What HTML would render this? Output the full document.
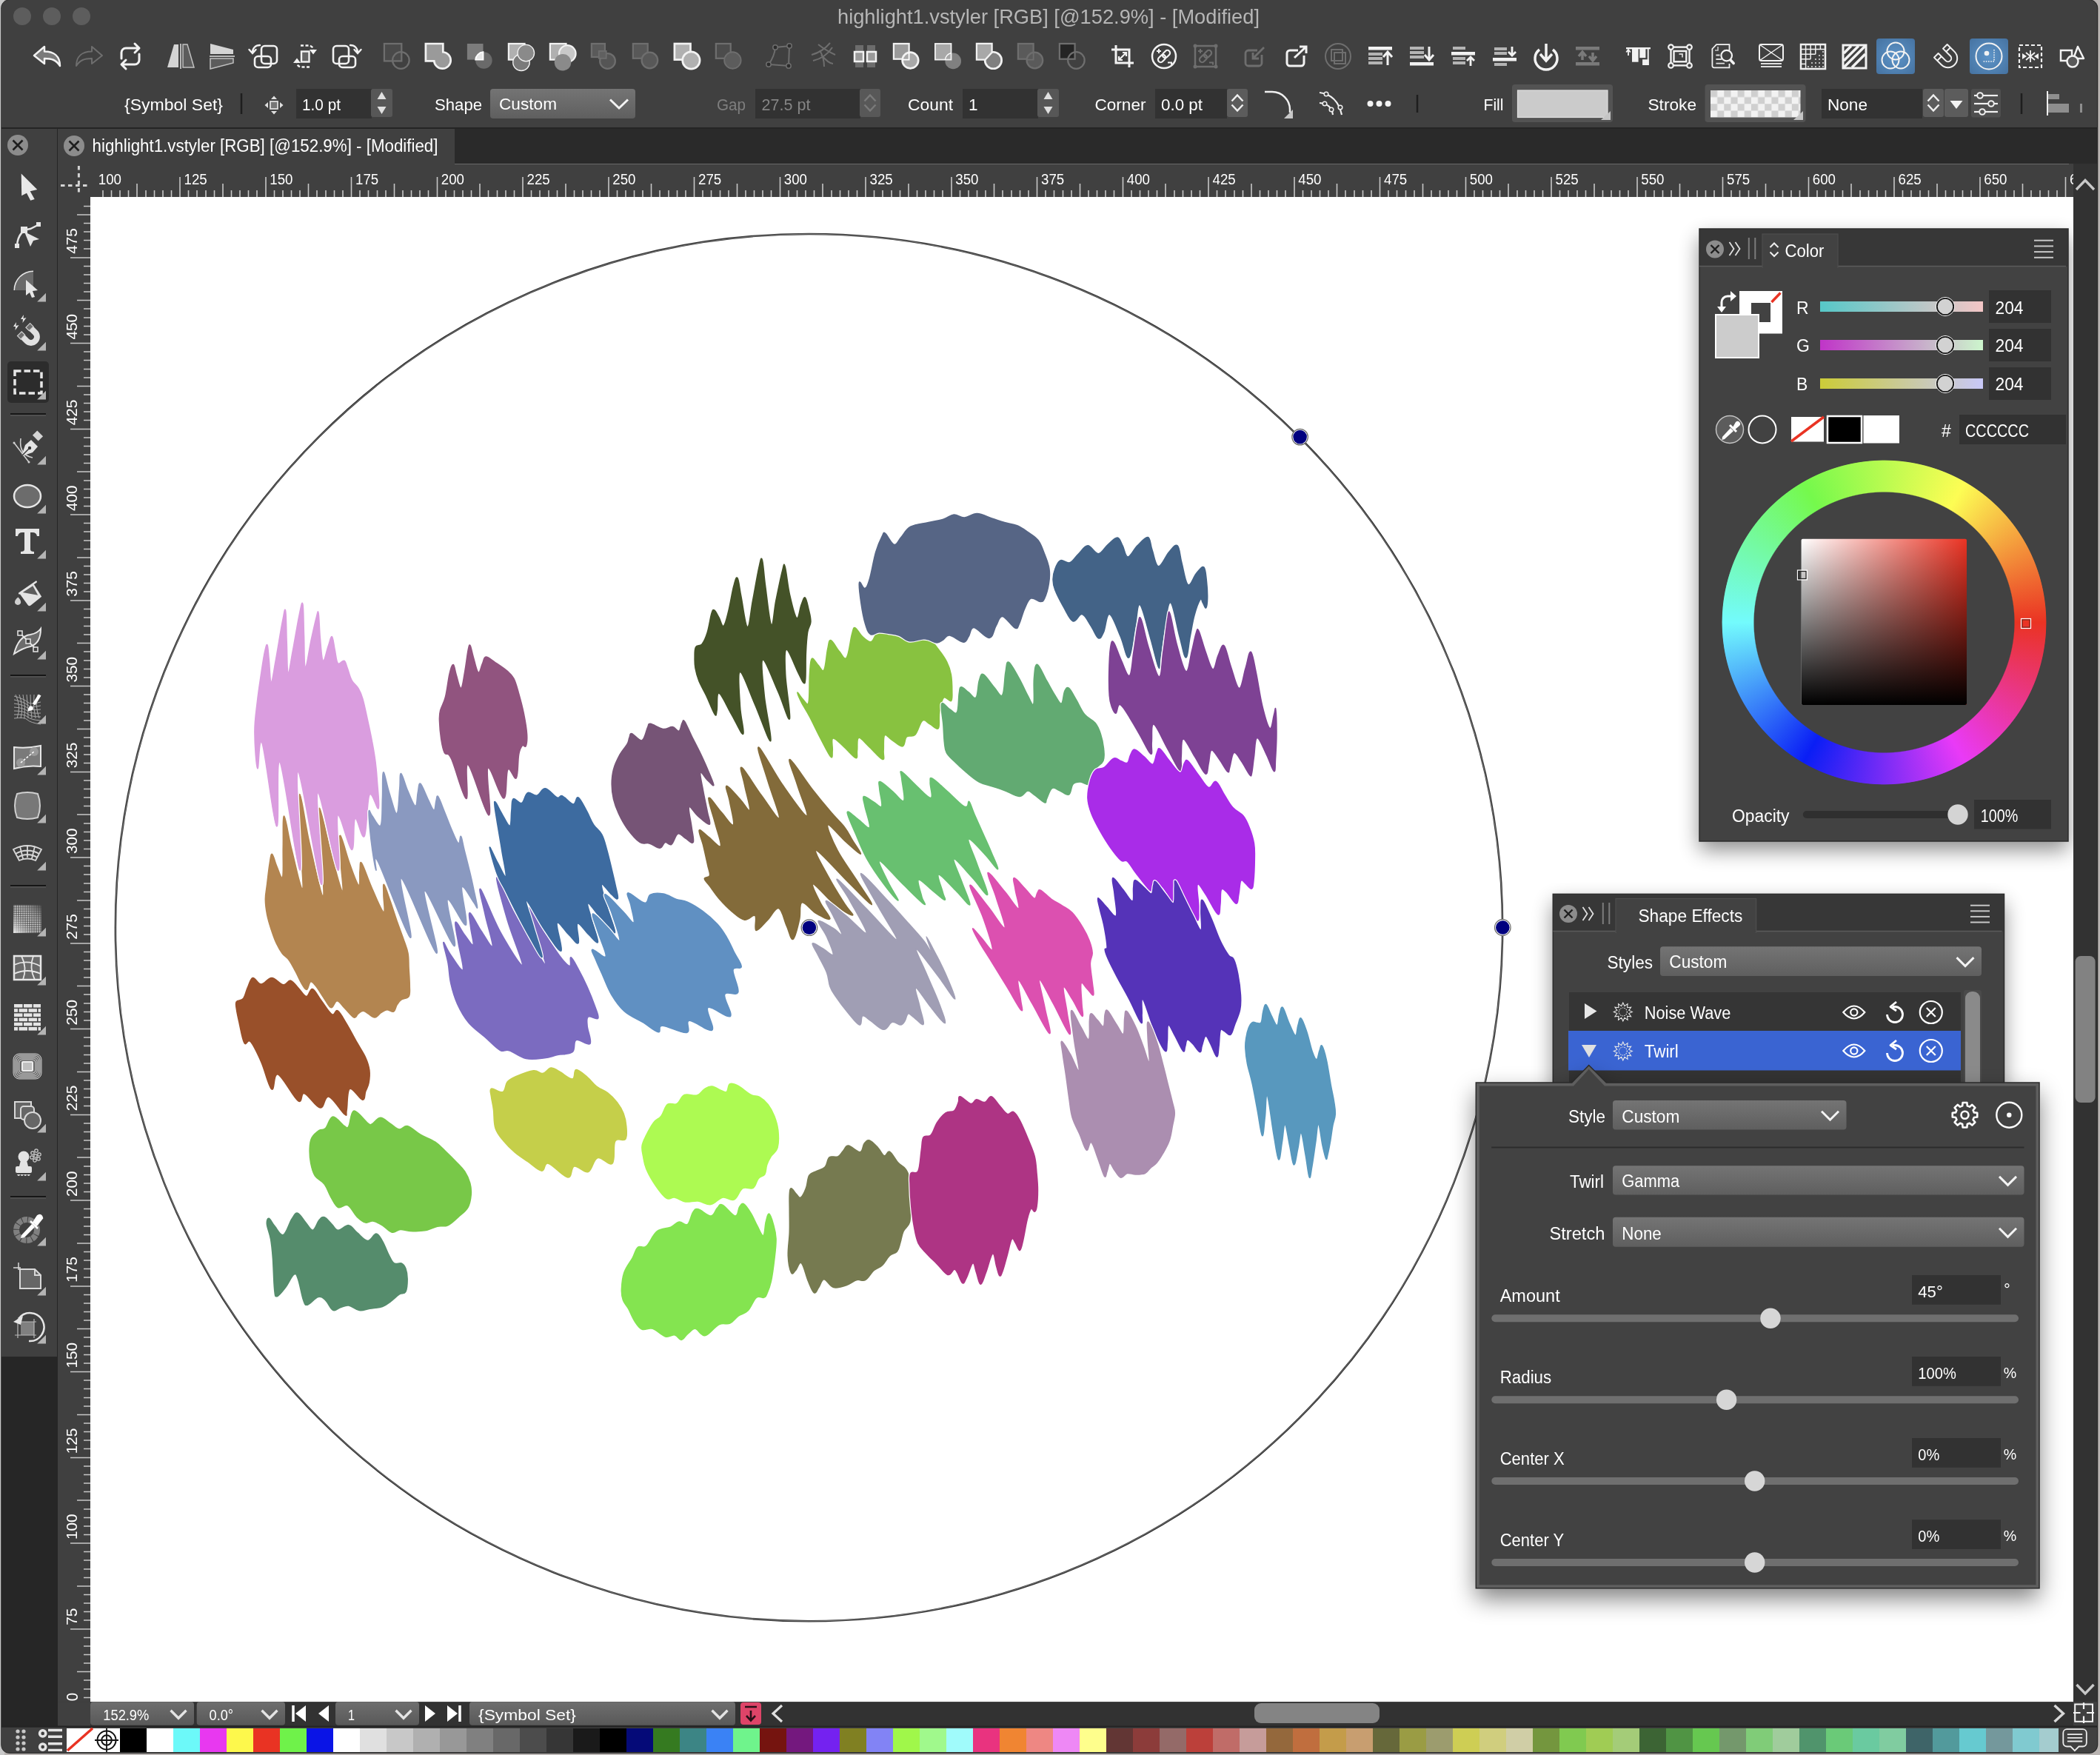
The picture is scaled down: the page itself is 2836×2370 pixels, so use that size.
<!DOCTYPE html><html><head><meta charset="utf-8"><title>highlight1.vstyler</title><style>html,body{margin:0;padding:0;background:#b9b4b2;overflow:hidden}svg{display:block;will-change:transform}text{white-space:pre}</style></head><body><svg width="2836" height="2370" viewBox="0 0 2836 2370" font-family='"Liberation Sans", sans-serif'><defs>
<linearGradient id="dd" x1="0" y1="0" x2="0" y2="1"><stop offset="0" stop-color="#747474"/><stop offset="1" stop-color="#5f5f5f"/></linearGradient>
<linearGradient id="dd2" x1="0" y1="0" x2="0" y2="1"><stop offset="0" stop-color="#6e6e6e"/><stop offset="1" stop-color="#595959"/></linearGradient>
<radialGradient id="hl" cx="0.5" cy="0.5" r="0.75"><stop offset="0" stop-color="#5d94c8"/><stop offset="1" stop-color="#44709e"/></radialGradient>
<pattern id="chk" x="2310" y="122" width="18.3" height="18.3" patternUnits="userSpaceOnUse"><rect width="18.3" height="18.3" fill="#f2f2f2"/><rect width="9.15" height="9.15" fill="#cfcfcf"/><rect x="9.15" y="9.15" width="9.15" height="9.15" fill="#cfcfcf"/></pattern>
<pattern id="ht" x="0" y="0" width="3" height="3" patternUnits="userSpaceOnUse"><rect width="3" height="3" fill="#555"/><circle cx="1.5" cy="1.5" r="1" fill="#eee"/></pattern>
<linearGradient id="htg" x1="0" y1="1" x2="1" y2="0"><stop offset="0" stop-color="#f0f0f0" stop-opacity="0.95"/><stop offset="0.45" stop-color="#a0a0a0" stop-opacity="0.1"/><stop offset="1" stop-color="#404040" stop-opacity="0.9"/></linearGradient>
<linearGradient id="gR"><stop offset="0" stop-color="#56c8c8"/><stop offset="1" stop-color="#f4c6c6"/></linearGradient>
<linearGradient id="gG"><stop offset="0" stop-color="#c034c8"/><stop offset="1" stop-color="#ccf6cc"/></linearGradient>
<linearGradient id="gB"><stop offset="0" stop-color="#cccc38"/><stop offset="1" stop-color="#c8c8f8"/></linearGradient>
<linearGradient id="svH"><stop offset="0" stop-color="#fff"/><stop offset="1" stop-color="#ea3323"/></linearGradient>
<linearGradient id="svV" x1="0" y1="0" x2="0" y2="1"><stop offset="0" stop-color="#000" stop-opacity="0"/><stop offset="1" stop-color="#000"/></linearGradient>
<filter id="sh" x="-10%" y="-10%" width="120%" height="125%"><feGaussianBlur in="SourceAlpha" stdDeviation="14"/><feOffset dy="12"/><feComponentTransfer><feFuncA type="linear" slope="0.45"/></feComponentTransfer></filter>
<filter id="sh2" x="-10%" y="-10%" width="120%" height="125%"><feGaussianBlur in="SourceAlpha" stdDeviation="16"/><feOffset dy="14"/><feComponentTransfer><feFuncA type="linear" slope="0.5"/></feComponentTransfer></filter>
<clipPath id="cv"><rect x="122" y="266" width="2678" height="2031"/></clipPath>
<clipPath id="win"><rect x="2" y="0" width="2830" height="2367" rx="11"/></clipPath>
</defs><rect x="0" y="0" width="2836" height="2370" fill="#b9b4b2"/><rect x="0" y="0" width="6" height="2370" fill="#c9c9c9"/><rect x="1.2" y="-0.8" width="2832.1" height="2368.8" fill="#2a2a2a" rx="12"/><g clip-path="url(#win)"><rect x="2" y="0" width="2830" height="2367" fill="#404040"/><circle cx="30" cy="22" r="12" fill="#5d5d5d"/><circle cx="70" cy="22" r="12" fill="#5d5d5d"/><circle cx="110" cy="22" r="12" fill="#5d5d5d"/><text x="1416" y="32" font-size="27.3" fill="#b6b6b6" text-anchor="middle" textLength="570" lengthAdjust="spacingAndGlyphs">highlight1.vstyler [RGB] [@152.9%] - [Modified]</text><g transform="translate(64,76)"><path d="M-18,-1 L-4,-13 L-4,-6.5 C9,-6.5 17,0 17,13 C12,5 6,3 -4,3 L-4,10 Z" fill="#7a7a7a" stroke="#f2f2f2" stroke-width="2.5" stroke-linejoin="round"/></g><g transform="translate(120,76)"><path d="M18,-1 L4,-13 L4,-6.5 C-9,-6.5 -17,0 -17,13 C-12,5 -6,3 4,3 L4,10 Z" fill="none" stroke="#6e6e6e" stroke-width="2" stroke-linejoin="round"/></g><g transform="translate(176,76)"><path d="M-12,3 V-5 a6,6 0 0 1 6,-6 H11 M6,-17 L12,-11 L6,-5 M12,-3 V5 a6,6 0 0 1 -6,6 H-11 M-6,5 L-12,11 L-6,17" fill="none" stroke="#f2f2f2" stroke-width="3" stroke-linecap="round" stroke-linejoin="round"/></g><g transform="translate(244,76)"><path d="M-3,-16 H-9 L-18,15 H-3 Z" fill="#d4d4d4"/><path d="M3,-16 H9 L18,15 H3 Z" fill="#5c5c5c" stroke="#c0c0c0" stroke-width="1.5"/><line x1="0" y1="-17" x2="0" y2="17" stroke="#b8b8b8" stroke-width="2" /></g><g transform="translate(300,76)"><path d="M-16,-17 L15,-9 V-3 H-16 Z" fill="#d4d4d4"/><path d="M-16,3 H15 V9 L-16,17 Z" fill="#5c5c5c" stroke="#c0c0c0" stroke-width="1.5"/><line x1="-17" y1="0" x2="17" y2="0" stroke="#b8b8b8" stroke-width="2" /></g><g transform="translate(356,76)"><rect x="-3" y="-14" width="21" height="24" fill="none" rx="4.5" stroke="#f2f2f2" stroke-width="2.6"/><rect x="-12" y="0" width="22" height="15" fill="none" rx="4.5" stroke="#f2f2f2" stroke-width="2.6"/><path d="M-5,-15 C-11,-15 -15,-11 -15,-5 M-19.5,-9 L-15,-4 L-10.5,-9" fill="none" stroke="#f2f2f2" stroke-width="2.4" stroke-linecap="round"/></g><g transform="translate(412,76)"><rect x="-5" y="-6.5" width="10.5" height="14" fill="#666" stroke="#f2f2f2" stroke-width="2.4"/><path d="M-6,-14.5 H5 a6,6 0 0 1 6,6" fill="none" stroke="#f2f2f2" stroke-width="2.4" stroke-dasharray="4 2.5"/><path d="M6,-9 H16 L11,-2.5 Z" fill="#f2f2f2"/><path d="M6,14.5 H-5 a6,6 0 0 1 -6,-6" fill="none" stroke="#f2f2f2" stroke-width="2.4" stroke-dasharray="4 2.5"/><path d="M-16,9 H-6 L-11,2.5 Z" fill="#f2f2f2"/></g><g transform="translate(468,76)"><rect x="-18" y="-14" width="21" height="24" fill="none" rx="4.5" stroke="#f2f2f2" stroke-width="2.6"/><rect x="-10" y="0" width="22" height="15" fill="none" rx="4.5" stroke="#f2f2f2" stroke-width="2.6"/><path d="M5,-15 C11,-15 15,-11 15,-5 M19.5,-9 L15,-4 L10.5,-9" fill="none" stroke="#f2f2f2" stroke-width="2.4" stroke-linecap="round"/></g><g transform="translate(536,75.2) scale(0.9)"><rect x="-19" y="-18" width="26" height="26" fill="#4a4a4a" stroke="#6e6e6e" stroke-width="2.5"/><circle cx="6" cy="7" r="12.5" fill="none" stroke="#6e6e6e" stroke-width="2.5"/></g><g transform="translate(592,75.2) scale(0.9)"><path d="M-19,-18 H7 V-5.5 A12.5,12.5 0 1 1 -6.4,8 H-19 Z" fill="#9a9a9a" stroke="#f2f2f2" stroke-width="3"/></g><g transform="translate(648,75.2) scale(0.9)"><rect x="-19" y="-18" width="24" height="24" fill="#7c7c7c"/><circle cx="6" cy="7" r="12.5" fill="#6a6a6a"/><path d="M-6.5,6 A12.5,12.5 0 0 1 5,-5.5 V6 Z" fill="#e8e8e8" stroke="#fff" stroke-width="2"/></g><g transform="translate(704,75.2) scale(0.9)"><rect x="-19" y="-18" width="24" height="24" fill="#b0b0b0" stroke="#f2f2f2" stroke-width="2.5"/><circle cx="0" cy="10" r="12.5" fill="#7a7a7a" stroke="#f2f2f2" stroke-width="1.5"/><circle cx="7" cy="-4" r="12.5" fill="#8a8a8a" stroke="#f2f2f2" stroke-width="1.5"/></g><g transform="translate(760,75.2) scale(0.9)"><rect x="-19" y="-18" width="24" height="24" fill="#b0b0b0" stroke="#f2f2f2" stroke-width="2.5"/><circle cx="7" cy="-3" r="12.5" fill="#c8c8c8" stroke="#f2f2f2" stroke-width="2.5"/><circle cx="0" cy="10" r="12.5" fill="#8a8a8a"/></g><g transform="translate(816,75.2) scale(0.9)"><rect x="-19" y="-18" width="20" height="20" fill="#5a5a5a" stroke="#6e6e6e" stroke-width="2.5"/><circle cx="5" cy="8" r="11.5" fill="#555" stroke="#6e6e6e" stroke-width="2.5"/><rect x="-8" y="-7" width="11" height="11" fill="#606060" stroke="#6e6e6e" stroke-width="2"/></g><g transform="translate(872,75.2) scale(0.9)"><rect x="-19" y="-18" width="22" height="22" fill="#585858" stroke="#6e6e6e" stroke-width="2.5"/><circle cx="6" cy="7" r="12" fill="#585858" stroke="#6e6e6e" stroke-width="2.5"/></g><g transform="translate(928,75.2) scale(0.9)"><rect x="-19" y="-18" width="24" height="24" fill="#b0b0b0" stroke="#f2f2f2" stroke-width="3"/><circle cx="6" cy="7" r="13" fill="#b0b0b0" stroke="#f2f2f2" stroke-width="3"/></g><g transform="translate(984,75.2) scale(0.9)"><rect x="-19" y="-18" width="22" height="22" fill="#4c4c4c" stroke="#6e6e6e" stroke-width="2.5"/><circle cx="6" cy="7" r="12.5" fill="#5c5c5c" stroke="#6e6e6e" stroke-width="2"/></g><g transform="translate(1055,76)"><path d="M-8,-12 L11,-14 L10,13 L-17,11 Q-9,0 -8,-12 Z" fill="none" stroke="#6e6e6e" stroke-width="2"/><circle cx="-8" cy="-12" r="3.2" fill="#2c2c2c" stroke="#6e6e6e" stroke-width="1.5"/><circle cx="11" cy="-14" r="3.2" fill="#2c2c2c" stroke="#6e6e6e" stroke-width="1.5"/><circle cx="10" cy="13" r="3.2" fill="#2c2c2c" stroke="#6e6e6e" stroke-width="1.5"/><circle cx="-17" cy="11" r="3.2" fill="#2c2c2c" stroke="#6e6e6e" stroke-width="1.5"/></g><g transform="translate(1111,76)"><path d="M-15,-2 Q0,-6 10,-18 M-6,-16 Q4,-8 17,-2 M-13,6 Q4,2 13,-12 M2,14 Q2,2 -4,-8 M-2,-2 Q8,10 14,10" fill="none" stroke="#6e6e6e" stroke-width="2"/></g><g transform="translate(1168,76)"><rect x="-13" y="-15" width="11" height="30" fill="#6c6c6c"/><rect x="3" y="-15" width="11" height="30" fill="#6c6c6c"/><rect x="-14" y="-6" width="12" height="13" fill="#9a9a9a" stroke="#f2f2f2" stroke-width="2.5"/><rect x="3" y="-6" width="12" height="13" fill="#9a9a9a" stroke="#f2f2f2" stroke-width="2.5"/></g><g transform="translate(1224,75.2) scale(0.9)"><rect x="-19" y="-18" width="23" height="23" fill="#9a9a9a" stroke="#f2f2f2" stroke-width="2.5"/><circle cx="6" cy="7" r="12" fill="#a8a8a8" stroke="#f2f2f2" stroke-width="3"/><path d="M-6,6 H4 V-5" fill="none" stroke="#fff" stroke-width="2"/></g><g transform="translate(1280,75.2) scale(0.9)"><circle cx="8" cy="8" r="12" fill="#808080"/><rect x="-19" y="-18" width="24" height="24" fill="#a8a8a8" stroke="#f2f2f2" stroke-width="2"/><path d="M-4,6 A12,12 0 0 1 5,-4" fill="none" stroke="#fff" stroke-width="1.5"/></g><g transform="translate(1336,75.2) scale(0.9)"><circle cx="6" cy="7" r="12.5" fill="#808080" stroke="#f2f2f2" stroke-width="3"/><path d="M-19,-18 H4 V-5 L-6,6 H-19 Z" fill="#a8a8a8" stroke="#f2f2f2" stroke-width="2.5"/></g><g transform="translate(1392,75.2) scale(0.9)"><rect x="-19" y="-18" width="23" height="23" fill="#5a5a5a" stroke="#6e6e6e" stroke-width="2.5"/><circle cx="6" cy="7" r="12" fill="#5a5a5a" stroke="#6e6e6e" stroke-width="2.5"/><path d="M-6,6 H4 V-5" fill="none" stroke="#6e6e6e" stroke-width="2"/></g><g transform="translate(1448,75.2) scale(0.9)"><rect x="-19" y="-18" width="23" height="23" fill="#242424" stroke="#6e6e6e" stroke-width="2.5"/><circle cx="6" cy="7" r="12.5" fill="none" stroke="#6e6e6e" stroke-width="2.5"/></g><g transform="translate(1516,76)"><path d="M-9,-15 V9 H15 M-15,-9 H9 V15" fill="none" stroke="#f2f2f2" stroke-width="3"/><path d="M-5,5 L5,-5 M-5,0 V5 H0 M5,0 V-5 H0" fill="none" stroke="#f2f2f2" stroke-width="2.2"/></g><g transform="translate(1572,76)"><circle cx="0" cy="0" r="16" fill="none" stroke="#f2f2f2" stroke-width="2.5"/><g transform="rotate(-45)"><rect x="-10" y="-3.6" width="11.5" height="7.2" fill="none" rx="3.6" stroke="#f2f2f2" stroke-width="2.2"/><rect x="-1.5" y="-3.6" width="11.5" height="7.2" fill="none" rx="3.6" stroke="#f2f2f2" stroke-width="2.2"/></g><path d="M-10,-7 h6 M-7,-10 v6 M5,8.5 h5 v3" fill="none" stroke="#f2f2f2" stroke-width="2"/></g><g transform="translate(1628,76)"><rect x="-14" y="-14" width="28" height="28" fill="none" stroke="#6e6e6e" stroke-width="2.5"/><circle cx="-14" cy="-14" r="2.5" fill="#6e6e6e"/><circle cx="14" cy="-14" r="2.5" fill="#6e6e6e"/><circle cx="14" cy="14" r="2.5" fill="#6e6e6e"/><circle cx="-14" cy="14" r="2.5" fill="#6e6e6e"/><g transform="rotate(-45)"><rect x="-10" y="-3.6" width="11.5" height="7.2" fill="none" rx="3.6" stroke="#6e6e6e" stroke-width="2.2"/><rect x="-1.5" y="-3.6" width="11.5" height="7.2" fill="none" rx="3.6" stroke="#6e6e6e" stroke-width="2.2"/></g><path d="M-10,-7 h6 M-7,-10 v6 M5,8.5 h5 v3" fill="none" stroke="#6e6e6e" stroke-width="2"/></g><g transform="translate(1694,76)"><path d="M4,-8 H-8 a4,4 0 0 0 -4,4 V9 a4,4 0 0 0 4,4 H6 a4,4 0 0 0 4,-4 V-2" fill="none" stroke="#6e6e6e" stroke-width="2.8"/><path d="M13,-12 L-2,3 M-2,-5 V3 H6" fill="none" stroke="#6e6e6e" stroke-width="2.8"/></g><g transform="translate(1751,76)"><path d="M2,-8 H-9 a4,4 0 0 0 -4,4 V9 a4,4 0 0 0 4,4 H6 a4,4 0 0 0 4,-4 V-1" fill="none" stroke="#f2f2f2" stroke-width="3"/><path d="M-3,2 L13,-13 M4,-13 H13 V-4" fill="none" stroke="#f2f2f2" stroke-width="3"/></g><g transform="translate(1807,76)"><circle cx="0" cy="0" r="17" fill="none" stroke="#6e6e6e" stroke-width="2"/><rect x="-9" y="-9" width="15" height="15" fill="none" stroke="#6e6e6e" stroke-width="2"/><rect x="-5" y="-5" width="15" height="15" fill="none" stroke="#6e6e6e" stroke-width="2"/></g><g transform="translate(1864,76)"><rect x="-16" y="-13" width="32" height="4.5" fill="#f2f2f2"/><rect x="-16" y="-5" width="19" height="4" fill="#b4b4b4"/><rect x="-16" y="1" width="19" height="4" fill="#b4b4b4"/><rect x="-16" y="7" width="19" height="4" fill="#b4b4b4"/><path d="M10,12 V-5 M4,1 L10,-6 L16,1" fill="none" stroke="#f2f2f2" stroke-width="3"/></g><g transform="translate(1920,76)"><rect x="-16" y="8" width="32" height="4.5" fill="#f2f2f2"/><rect x="-16" y="-13" width="19" height="4" fill="#b4b4b4"/><rect x="-16" y="-7" width="19" height="4" fill="#b4b4b4"/><rect x="-16" y="-1" width="19" height="4" fill="#b4b4b4"/><path d="M10,-13 V4 M4,-2 L10,5 L16,-2" fill="none" stroke="#f2f2f2" stroke-width="3"/></g><g transform="translate(1976,76)"><rect x="-16" y="-6" width="32" height="4.5" fill="#f2f2f2"/><rect x="-14" y="-13" width="17" height="4" fill="#b4b4b4"/><rect x="-14" y="1" width="17" height="4" fill="#b4b4b4"/><rect x="-14" y="7" width="17" height="4" fill="#b4b4b4"/><path d="M10,13 V2 M5,6 L10,1 L15,6" fill="none" stroke="#f2f2f2" stroke-width="2.8"/></g><g transform="translate(2032,76)"><rect x="-16" y="2" width="32" height="4.5" fill="#f2f2f2"/><rect x="-14" y="-12" width="17" height="4" fill="#b4b4b4"/><rect x="-14" y="-6" width="17" height="4" fill="#b4b4b4"/><rect x="-14" y="9" width="17" height="4" fill="#b4b4b4"/><path d="M10,-13 V-2 M5,-6 L10,-1 L15,-6" fill="none" stroke="#f2f2f2" stroke-width="2.8"/></g><g transform="translate(2088,76)"><path d="M-9,-9 A15,15 0 1 0 9,-9" fill="none" stroke="#f2f2f2" stroke-width="3.5"/><path d="M0,-17 V5 M-8,-3 L0,6 L8,-3" fill="none" stroke="#f2f2f2" stroke-width="3.5"/></g><g transform="translate(2144,76)"><rect x="-16" y="-13" width="32" height="4.5" fill="#7a7a7a"/><rect x="-16" y="8" width="32" height="4.5" fill="#7a7a7a"/><path d="M-7,5 V-5 M-12,0 L-7,-6 L-2,0 M7,-5 V5 M2,0 L7,6 L12,0" fill="none" stroke="#7a7a7a" stroke-width="3.5"/></g><g transform="translate(2212,76)"><rect x="-16" y="-12" width="33" height="2.3" fill="#f2f2f2"/><rect x="-8" y="-10" width="8.6" height="17.7" fill="#f2f2f2"/><rect x="2.3" y="-10" width="8.1" height="12.1" fill="#f2f2f2"/><rect x="6.1" y="4.3" width="8.6" height="7.7" fill="#f2f2f2"/><rect x="12.8" y="-10" width="1.9" height="22" fill="#f2f2f2"/><path d="M-13,-1 V-8 M-15.8,-5.5 L-13,-9 L-10.2,-5.5" fill="none" stroke="#f2f2f2" stroke-width="1.8"/></g><g transform="translate(2269,76)"><rect x="-12.5" y="-12.4" width="25" height="24.8" fill="none" stroke="#f2f2f2" stroke-width="2.4"/><rect x="-8.5" y="-7" width="16.8" height="14.3" fill="none" stroke="#f2f2f2" stroke-width="2.4"/><path d="M-1.5,-3 H3 V1.5" fill="none" stroke="#f2f2f2" stroke-width="1.5"/><circle cx="-12.5" cy="-12.4" r="3.3" fill="#404040" stroke="#f2f2f2" stroke-width="2.2"/><circle cx="12.5" cy="-12.4" r="3.3" fill="#404040" stroke="#f2f2f2" stroke-width="2.2"/><circle cx="12.5" cy="12.4" r="3.3" fill="#404040" stroke="#f2f2f2" stroke-width="2.2"/><circle cx="-12.5" cy="12.4" r="3.3" fill="#404040" stroke="#f2f2f2" stroke-width="2.2"/></g><g transform="translate(2327,76)"><path d="M8.5,-8 V-15.9 H-9 L-14.6,-10 V13 a2.4,2.4 0 0 0 2.4,2.4 H8.5 V10" fill="none" stroke="#f2f2f2" stroke-width="1.8"/><path d="M-7,-13 V-8 H-11" fill="none" stroke="#c8c8c8" stroke-width="1.6"/><path d="M-9.6,-1.5 H-4.5 M-9.6,4 H-2 M-9.6,9.6 H2" fill="none" stroke="#e0e0e0" stroke-width="1.8"/><circle cx="4.7" cy="-0.9" r="7.3" fill="#404040" stroke="#f2f2f2" stroke-width="2.2"/><line x1="10" y1="5" x2="14.2" y2="9.5" stroke="#f2f2f2" stroke-width="3.6" stroke-linecap="round"/></g><g transform="translate(2392,74)"><rect x="-16" y="-14" width="32" height="22" fill="none" rx="3" stroke="#f2f2f2" stroke-width="2"/><path d="M-16,-14 L16,8 M16,-14 L-16,8" fill="none" stroke="#f2f2f2" stroke-width="1.5"/><line x1="-14" y1="12" x2="14" y2="12" stroke="#f2f2f2" stroke-width="1.8" /><line x1="-14" y1="16" x2="14" y2="16" stroke="#f2f2f2" stroke-width="1.8" /></g><g transform="translate(2448,76)"><rect x="-16" y="-16" width="33" height="33" fill="none" stroke="#f2f2f2" stroke-width="2.5"/><line x1="-9.4" y1="-16" x2="-9.4" y2="17" stroke="#f2f2f2" stroke-width="1.5" /><line x1="-2.8" y1="-16" x2="-2.8" y2="3.8" stroke="#f2f2f2" stroke-width="1.5" /><line x1="3.8" y1="-16" x2="3.8" y2="-2.8" stroke="#f2f2f2" stroke-width="1.5" /><line x1="10.4" y1="-16" x2="10.4" y2="-9.4" stroke="#f2f2f2" stroke-width="1.5" /><line x1="-16" y1="-9.4" x2="17" y2="-9.4" stroke="#f2f2f2" stroke-width="1.5" /><line x1="-16" y1="-2.8" x2="3.8" y2="-2.8" stroke="#f2f2f2" stroke-width="1.5" /><line x1="-16" y1="3.8" x2="-2.8" y2="3.8" stroke="#f2f2f2" stroke-width="1.5" /><line x1="-16" y1="10.4" x2="-9.4" y2="10.4" stroke="#f2f2f2" stroke-width="1.5" /><circle cx="14" cy="14" r="0.9" fill="#f2f2f2"/><circle cx="14" cy="9" r="0.9" fill="#f2f2f2"/><circle cx="14" cy="4" r="0.9" fill="#f2f2f2"/><circle cx="14" cy="-1" r="0.9" fill="#f2f2f2"/><circle cx="14" cy="-6" r="0.9" fill="#f2f2f2"/><circle cx="9" cy="14" r="0.9" fill="#f2f2f2"/><circle cx="9" cy="9" r="0.9" fill="#f2f2f2"/><circle cx="9" cy="4" r="0.9" fill="#f2f2f2"/><circle cx="9" cy="-1" r="0.9" fill="#f2f2f2"/><circle cx="4" cy="14" r="0.9" fill="#f2f2f2"/><circle cx="4" cy="9" r="0.9" fill="#f2f2f2"/><circle cx="4" cy="4" r="0.9" fill="#f2f2f2"/><circle cx="-1" cy="14" r="0.9" fill="#f2f2f2"/><circle cx="-1" cy="9" r="0.9" fill="#f2f2f2"/><circle cx="-6" cy="14" r="0.9" fill="#f2f2f2"/></g><g transform="translate(2504,76)"><rect x="-15" y="-15" width="31" height="31" fill="none" stroke="#f2f2f2" stroke-width="3"/><path d="M-14,-4 L-4,-14 M-14,6 L6,-14 M-14,15 L15,-14 M-3,15 L15,-3" fill="none" stroke="#f2f2f2" stroke-width="3.5"/></g><rect x="2534" y="52" width="52" height="48" fill="url(#hl)" rx="4"/><g transform="translate(2560,76)"><circle cx="0" cy="-7" r="11.5" fill="none" stroke="#f2f2f2" stroke-width="2"/><circle cx="-7" cy="5" r="11.5" fill="none" stroke="#f2f2f2" stroke-width="2"/><circle cx="7" cy="5" r="11.5" fill="none" stroke="#f2f2f2" stroke-width="2"/></g><g transform="translate(2630,78) rotate(-45)"><path d="M-12.5,-13 V1 A12.5,12.5 0 0 0 12.5,1 V-13 H4.5 V1 A4.5,4.5 0 0 1 -4.5,1 V-13 Z M-12.5,-7 H-4.5 M4.5,-7 H12.5" fill="none" stroke="#f2f2f2" stroke-width="2" stroke-linejoin="round"/></g><rect x="2660" y="52" width="52" height="48" fill="url(#hl)" rx="4"/><g transform="translate(2686,76)"><circle cx="0" cy="0" r="17.5" fill="none" stroke="#f2f2f2" stroke-width="2"/><circle cx="-3" cy="-4" r="3.3" fill="#f2f2f2"/><path d="M7,-9 V7 H-9" fill="none" stroke="#f2f2f2" stroke-width="1.6" stroke-dasharray="1.6 1.6"/></g><g transform="translate(2742,76)"><rect x="-15" y="-15" width="30" height="30" fill="none" stroke="#f2f2f2" stroke-width="2.2" stroke-dasharray="5 3"/><path d="M0,-8 V8 M-6,-5 L6,5 M6,-5 L-6,5" fill="none" stroke="#f2f2f2" stroke-width="1.8"/><path d="M-11,-4 L-5,0 L-11,4 Z M11,-4 L5,0 L11,4 Z" fill="#f2f2f2"/></g><g transform="translate(2798,76)"><rect x="-15" y="-8" width="15" height="14" fill="none" stroke="#f2f2f2" stroke-width="2.5"/><path d="M8,-13 L16,3 H2 Z" fill="none" stroke="#f2f2f2" stroke-width="2.5" stroke-linejoin="round"/><circle cx="1" cy="7" r="7.5" fill="#5a5a5a" stroke="#f2f2f2" stroke-width="2.5"/></g><text x="168" y="149" font-size="22.5" fill="#fff" textLength="133" lengthAdjust="spacingAndGlyphs">{Symbol Set}</text><line x1="326" y1="126" x2="326" y2="154" stroke="#1e1e1e" stroke-width="2.5" /><g transform="translate(370,142)"><rect x="-5" y="-5" width="10" height="10" fill="#777" stroke="#ddd" stroke-width="1.8"/><path d="M-4,-8 L0,-12.5 L4,-8 Z M-4,8 L0,12.5 L4,8 Z M-8,-4 L-12.5,0 L-8,4 Z M8,-4 L12.5,0 L8,4 Z" fill="#e0e0e0"/></g><rect x="400" y="120" width="102" height="40" fill="#323232"/><text x="408" y="149" font-size="22.5" fill="#fff" textLength="52" lengthAdjust="spacingAndGlyphs">1.0 pt</text><rect x="501" y="120" width="29" height="38" fill="#575757" rx="3"/><path d="M509.5,134 l6,-10 l6,10 Z" fill="#e0e0e0"/><path d="M509.5,144 l6,10 l6,-10 Z" fill="#e0e0e0"/><text x="587" y="149" font-size="22.5" fill="#fff" textLength="64" lengthAdjust="spacingAndGlyphs">Shape</text><rect x="662" y="120" width="196" height="40" fill="url(#dd)" rx="4"/><text x="674" y="148" font-size="22.5" fill="#fff" textLength="78" lengthAdjust="spacingAndGlyphs">Custom</text><path d="M824,134.5 l12,11.5 l12,-11.5" fill="none" stroke="#f4f4f4" stroke-width="3"/><text x="968" y="149" font-size="22.5" fill="#7e7e7e" textLength="39" lengthAdjust="spacingAndGlyphs">Gap</text><rect x="1020" y="120" width="142" height="40" fill="#323232"/><text x="1028.5" y="149" font-size="22.5" fill="#858585" textLength="66" lengthAdjust="spacingAndGlyphs">27.5 pt</text><rect x="1161" y="120" width="28" height="38" fill="#585858" rx="3"/><path d="M1167.5,136.5 l7.5,-8 l7.5,8" fill="none" stroke="#7a7a7a" stroke-width="2.5"/><path d="M1167.5,141.5 l7.5,8 l7.5,-8" fill="none" stroke="#7a7a7a" stroke-width="2.5"/><text x="1226" y="149" font-size="22.5" fill="#fff" textLength="61" lengthAdjust="spacingAndGlyphs">Count</text><rect x="1300" y="120" width="102" height="40" fill="#323232"/><text x="1308" y="149" font-size="22.5" fill="#fff">1</text><rect x="1401" y="120" width="29" height="38" fill="#575757" rx="3"/><path d="M1409.5,134 l6,-10 l6,10 Z" fill="#e0e0e0"/><path d="M1409.5,144 l6,10 l6,-10 Z" fill="#e0e0e0"/><text x="1478.5" y="149" font-size="22.5" fill="#fff" textLength="69" lengthAdjust="spacingAndGlyphs">Corner</text><rect x="1560" y="120" width="97" height="40" fill="#323232"/><text x="1568" y="149" font-size="22.5" fill="#fff" textLength="56" lengthAdjust="spacingAndGlyphs">0.0 pt</text><rect x="1657" y="120" width="28" height="38" fill="#5c5c5c" rx="3"/><path d="M1663.5,136.5 l7.5,-8 l7.5,8" fill="none" stroke="#f0f0f0" stroke-width="2.5"/><path d="M1663.5,141.5 l7.5,8 l7.5,-8" fill="none" stroke="#f0f0f0" stroke-width="2.5"/><path d="M1708,124 H1718 A24,24 0 0 1 1742,148 V152" fill="none" stroke="#f0f0f0" stroke-width="2.5"/><path d="M1746,148 V160 H1734 Z" fill="#c8c8c8"/><path d="M1782,125 Q1806,128 1812,155 M1782,139 Q1798,140 1800,155" fill="none" stroke="#f0f0f0" stroke-width="2.2"/><circle cx="1791" cy="127" r="2.8" fill="#404040" stroke="#f0f0f0" stroke-width="1.5"/><circle cx="1810" cy="145" r="2.8" fill="#404040" stroke="#f0f0f0" stroke-width="1.5"/><circle cx="1789" cy="140" r="2.8" fill="#404040" stroke="#f0f0f0" stroke-width="1.5"/><circle cx="1798" cy="148" r="2.8" fill="#404040" stroke="#f0f0f0" stroke-width="1.5"/><circle cx="1850.5" cy="140" r="4" fill="#f4f4f4"/><circle cx="1862.5" cy="140" r="4" fill="#f4f4f4"/><circle cx="1874.5" cy="140" r="4" fill="#f4f4f4"/><line x1="1914" y1="128" x2="1914" y2="152" stroke="#1e1e1e" stroke-width="2.5" /><text x="2003.5" y="149" font-size="22.5" fill="#fff" textLength="27" lengthAdjust="spacingAndGlyphs">Fill</text><rect x="2042" y="114" width="136" height="51" fill="#535353" rx="4"/><rect x="2049.5" y="122" width="121.5" height="36.5" fill="#cbcbcb" stroke="#e0e0e0" stroke-width="1.2"/><path d="M2175,150 V162 H2162 Z" fill="#c4c4c4"/><text x="2225.5" y="149" font-size="22.5" fill="#fff" textLength="65.5" lengthAdjust="spacingAndGlyphs">Stroke</text><rect x="2302.5" y="114" width="136" height="51" fill="#535353" rx="4"/><rect x="2310" y="122" width="121.5" height="36.5" fill="url(#chk)"/><path d="M2435,150 V162 H2422 Z" fill="#c4c4c4"/><rect x="2460" y="120" width="136" height="40" fill="#323232"/><text x="2468" y="149" font-size="22.5" fill="#fff" textLength="54" lengthAdjust="spacingAndGlyphs">None</text><rect x="2597" y="120" width="28" height="38" fill="#5c5c5c" rx="3"/><path d="M2603.5,136.5 l7.5,-8 l7.5,8" fill="none" stroke="#f0f0f0" stroke-width="2.5"/><path d="M2603.5,141.5 l7.5,8 l7.5,-8" fill="none" stroke="#f0f0f0" stroke-width="2.5"/><rect x="2626" y="120" width="32" height="38" fill="#5c5c5c" rx="3"/><path d="M2633.5,136 H2650.5 L2642,147 Z" fill="#f4f4f4"/><rect x="2662" y="120" width="40" height="38.5" fill="#4f4f4f" rx="3"/><line x1="2666" y1="129" x2="2698" y2="129" stroke="#f0f0f0" stroke-width="2.2" /><circle cx="2674" cy="129" r="3.8" fill="#4f4f4f" stroke="#f0f0f0" stroke-width="2"/><line x1="2666" y1="140" x2="2698" y2="140" stroke="#f0f0f0" stroke-width="2.2" /><circle cx="2689" cy="140" r="3.8" fill="#4f4f4f" stroke="#f0f0f0" stroke-width="2"/><line x1="2666" y1="151" x2="2698" y2="151" stroke="#f0f0f0" stroke-width="2.2" /><circle cx="2677" cy="151" r="3.8" fill="#4f4f4f" stroke="#f0f0f0" stroke-width="2"/><line x1="2730" y1="126" x2="2730" y2="154" stroke="#1e1e1e" stroke-width="2.5" /><rect x="2766" y="127" width="15" height="7" fill="#8e8e8e"/><rect x="2766" y="140" width="28" height="12" fill="#8e8e8e"/><line x1="2765" y1="123" x2="2765" y2="156" stroke="#f0f0f0" stroke-width="2" /><rect x="2809" y="140" width="3" height="12" fill="#8e8e8e"/><rect x="2" y="172" width="2830" height="2" fill="#242424"/><rect x="78" y="174" width="2754" height="47" fill="#2a2a2a"/><rect x="78" y="174" width="536" height="47" fill="#404040"/><line x1="77" y1="173" x2="77" y2="2366" stroke="#262626" stroke-width="2" /><circle cx="100" cy="197" r="14" fill="#8c8c8c"/><path d="M93.5,190.5 l13,13 m0,-13 l-13,13" fill="none" stroke="#1e1e1e" stroke-width="2.6"/><text x="124.5" y="205" font-size="23" fill="#fff" textLength="467" lengthAdjust="spacingAndGlyphs">highlight1.vstyler [RGB] [@152.9%] - [Modified]</text><rect x="122" y="266" width="2678" height="2032.3" fill="#fff"/><g clip-path="url(#cv)"><defs><path id="b0" d="M358.38,1214.47 C358.38,1206.95 359.61,1202.74 360.66,1193.96 C361.7,1185.19 362.82,1174.05 364.07,1166.61 C365.33,1159.17 365.7,1152.76 367.49,1153.39 C369.29,1154.02 371.28,1164.35 373.87,1170.03 C376.47,1175.71 380.08,1189.19 381.62,1184.39 C383.17,1179.58 381.93,1158.9 382.31,1143.82 C382.68,1128.73 381.59,1101.69 383.68,1102.11 C385.76,1102.53 389.15,1128 393.7,1146.1 C398.26,1164.19 406.3,1202.47 408.52,1200.8 C410.73,1199.13 406.45,1160.51 405.78,1136.98 C405.11,1113.45 402.7,1072.48 404.87,1072.48 C407.04,1072.48 411.87,1111.7 417.64,1136.98 C423.4,1162.26 433.61,1210.37 436.32,1210.37 C439.04,1210.37 433.33,1158.75 432.45,1136.98 C431.57,1115.21 428.82,1088.7 431.54,1091.62 C434.25,1094.55 441.58,1132.29 447.26,1152.93 C452.95,1173.58 460.24,1202.96 462.54,1204.22 C464.83,1205.47 460.34,1173.69 459.8,1159.77 C459.26,1145.86 457.27,1127.07 459.57,1128.32 C461.87,1129.57 467.78,1154.24 472.34,1166.61 C476.89,1178.98 481.91,1194.11 484.42,1195.78 C486.92,1197.45 485.26,1181.24 486.01,1175.73 C486.76,1170.21 485.59,1161.52 488.52,1165.7 C491.44,1169.88 496.58,1186.44 501.97,1198.52 C507.36,1210.59 515,1229.9 517.92,1231.57 C520.85,1233.24 517.79,1214.4 517.92,1207.64 C518.05,1200.87 516.93,1192.97 518.6,1194.64 C520.28,1196.32 523.82,1207.68 527.04,1216.75 C530.25,1225.82 532.81,1234.49 536.15,1244.1 C539.5,1253.71 542.55,1261.23 545.27,1269.17 C547.99,1277.11 549.72,1280.3 550.97,1287.41 C552.22,1294.51 551.69,1299.98 552.11,1307.92 C552.53,1315.86 553.25,1323.82 553.25,1330.71 C553.25,1337.61 554.2,1341.98 552.11,1345.53 C550.02,1349.08 544.78,1348 541.85,1350.09 C538.93,1352.17 538.03,1354 536.15,1356.92 C534.27,1359.85 534.1,1364.79 531.6,1366.04 C529.09,1367.29 525.61,1363.47 522.48,1363.76 C519.34,1364.05 517.64,1365.75 514.5,1367.64 C511.37,1369.52 509.56,1374.43 505.38,1374.02 C501.21,1373.6 495.68,1366.28 491.71,1365.36 C487.74,1364.44 486.24,1367.42 483.73,1369 C481.23,1370.59 481.38,1375.4 478.03,1374.02 C474.69,1372.64 469.68,1365.58 465.5,1361.48 C461.32,1357.39 458.58,1351.81 455.24,1351.68 C451.9,1351.56 450.4,1361.3 447.26,1360.8 C444.13,1360.3 441.91,1354.25 438.15,1348.95 C434.39,1343.64 430.18,1336.11 426.75,1331.85 C423.33,1327.59 421.76,1324.86 419.46,1325.7 C417.16,1326.53 416.43,1335.91 414.22,1336.41 C412,1336.91 410.09,1332.82 407.38,1328.43 C404.66,1324.05 402.54,1318.33 399.4,1312.48 C396.27,1306.63 393.63,1301.12 390.28,1296.52 C386.94,1291.93 384.3,1291.59 381.17,1287.41 C378.03,1283.23 375.91,1279.58 373.19,1273.73 C370.47,1267.88 368.65,1262.6 366.35,1255.5 C364.06,1248.4 362.12,1242.51 360.66,1234.99 C359.19,1227.46 358.38,1221.99 358.38,1214.47 Z"/></defs><use href="#b0" fill="none" stroke="#fff" stroke-width="4" stroke-linejoin="round"/><use href="#b0" fill="#b38550" stroke="#b38550" stroke-width="1.6" stroke-linejoin="round"/><defs><path id="b1" d="M343.93,989.17 C343.85,972.75 345.68,963.19 347.35,948.15 C349.02,933.11 351.17,919.66 353.05,907.12 C354.93,894.59 356.14,886.37 357.61,879.77 C359.07,873.17 359.98,869.02 361.03,871.11 C362.07,873.2 362.34,882.06 363.3,891.17 C364.27,900.28 364.6,920.8 366.27,920.8 C367.94,920.8 369.62,906.21 372.42,891.17 C375.22,876.13 379.11,850.86 381.54,838.75 C383.96,826.63 384.6,819.64 385.64,825.07 C386.69,830.5 386.61,852.92 387.24,868.38 C387.86,883.84 387.6,907.31 389.06,909.4 C390.52,911.49 392.41,894.4 395.21,879.77 C398.01,865.15 401.82,841.33 404.33,829.63 C406.84,817.93 407.76,810.94 408.89,815.95 C410.02,820.97 409.86,841.31 410.48,856.98 C411.11,872.65 410.51,900.17 412.31,901.42 C414.1,902.68 417.57,876.14 420.28,863.82 C423,851.49 425.33,840.75 427.12,834.19 C428.92,827.63 429.12,823.02 430.09,828.03 C431.05,833.05 431.24,849.75 432.36,861.54 C433.49,873.32 434.28,890.22 436.24,892.31 C438.2,894.4 440.86,878.91 443.08,872.93 C445.29,866.96 446.65,858.88 448.32,859.72 C449.99,860.55 450.73,870.89 452.19,877.49 C453.66,884.09 454,893.01 456.3,895.73 C458.59,898.44 462.35,891.05 464.73,892.31 C467.11,893.56 467.41,897.76 469.29,902.56 C471.17,907.37 472.27,913.5 474.99,918.52 C477.7,923.53 481.39,925.32 484.1,929.91 C486.82,934.51 487.5,935.65 489.8,943.59 C492.1,951.53 494.34,962.77 496.64,973.22 C498.94,983.67 500.46,990.54 502.34,1000.57 C504.22,1010.6 505.56,1017.47 506.89,1027.92 C508.23,1038.37 508.88,1045.85 509.63,1057.55 C510.38,1069.25 512.96,1088.81 511,1091.74 C509.03,1094.66 502.39,1066.61 498.92,1073.5 C495.45,1080.4 495.63,1123.49 492.08,1129.34 C488.53,1135.19 482.68,1102.07 479.54,1105.41 C476.41,1108.76 479.29,1148.41 474.99,1147.58 C470.68,1146.74 459.49,1095.84 456.07,1100.85 C452.64,1105.87 461.27,1180.57 456.3,1174.93 C451.32,1169.29 433.04,1066.53 428.95,1070.09 C424.85,1073.64 438.81,1199.53 433.96,1194.3 C429.11,1189.08 407.81,1045.15 402.51,1041.6 C397.2,1038.04 409.49,1177.23 405.01,1174.93 C400.54,1172.63 383.89,1039.92 378.12,1029.06 C372.35,1018.2 377.95,1120.27 373.56,1115.67 C369.17,1111.07 358.91,1018.28 354.19,1003.99 C349.47,989.7 349.69,1040.44 347.81,1037.72 C345.93,1035 344.02,1005.6 343.93,989.17 Z"/></defs><use href="#b1" fill="none" stroke="#fff" stroke-width="4" stroke-linejoin="round"/><use href="#b1" fill="#da9ddf" stroke="#da9ddf" stroke-width="1.6" stroke-linejoin="round"/><defs><path id="b2" d="M593.5,973.22 C593.3,966.12 593.18,965.39 594.64,959.54 C596.11,953.69 599.18,950.5 601.48,941.31 C603.78,932.12 605.22,917.42 607.18,909.4 C609.14,901.38 610.52,897.13 612.19,897.55 C613.87,897.97 614.37,905.83 616.3,911.68 C618.22,917.53 620.59,930.29 622.68,929.46 C624.77,928.62 625.94,916.65 627.69,907.12 C629.45,897.6 630.91,883.97 632.25,877.49 C633.59,871.02 633.73,870.12 634.99,871.79 C636.24,873.47 637.08,879.92 639.09,886.61 C641.09,893.3 643.63,906.59 645.93,908.26 C648.22,909.93 649.74,899.61 651.62,895.73 C653.5,891.84 653.05,887.27 656.18,887.07 C659.32,886.86 663.49,891.12 668.72,894.59 C673.94,898.06 680.08,902.01 684.67,905.98 C689.27,909.95 690.86,910.6 693.79,916.24 C696.71,921.88 698.12,927.98 700.63,936.75 C703.13,945.53 705.46,954.07 707.46,964.1 C709.47,974.13 711.07,983.51 711.57,991.45 C712.07,999.39 711.37,1004.57 710.2,1007.41 C709.03,1010.25 706.94,1004.86 705.19,1006.95 C703.43,1009.04 702.09,1010.78 700.63,1018.8 C699.16,1026.83 699.92,1046.95 697.21,1050.71 C694.49,1054.47 688.95,1034.3 685.81,1039.32 C682.68,1044.33 685.04,1078.48 680.11,1078.06 C675.18,1077.64 662.59,1032.86 658.92,1037.04 C655.24,1041.22 664.95,1101.69 660.06,1100.85 C655.17,1100.02 637.85,1036.57 632.25,1032.48 C626.65,1028.38 633.69,1079.98 629.52,1078.52 C625.34,1077.06 614.81,1035.87 609.46,1024.5 C604.11,1013.14 602.85,1021.33 600.34,1016.52 C597.83,1011.72 597.04,1006.23 595.78,998.29 C594.53,990.35 593.71,980.32 593.5,973.22 Z"/></defs><use href="#b2" fill="none" stroke="#fff" stroke-width="4" stroke-linejoin="round"/><use href="#b2" fill="#91547f" stroke="#91547f" stroke-width="1.6" stroke-linejoin="round"/><defs><path id="b3" d="M319.37,1352.71 C321.04,1350.09 325.77,1351.83 328.49,1348.43 C331.21,1345.04 331.84,1339.31 334.19,1334.19 C336.54,1329.07 337.92,1321.45 341.31,1320.51 C344.71,1319.57 348.01,1329.06 352.71,1329.06 C357.41,1329.06 361.47,1320.36 366.95,1320.51 C372.44,1320.67 377.92,1329.24 382.62,1329.91 C387.32,1330.59 388.68,1323.17 392.59,1324.22 C396.51,1325.26 400.07,1331.7 403.99,1335.61 C407.91,1339.53 410.67,1345.58 413.96,1345.58 C417.25,1345.58 418.28,1334.57 421.94,1335.61 C425.59,1336.66 429.1,1345.01 433.9,1351.28 C438.71,1357.55 444.07,1367.29 448.15,1369.8 C452.22,1372.31 452.47,1362.61 456.13,1364.96 C459.78,1367.31 463.29,1374.68 468.09,1382.62 C472.9,1390.56 477.64,1399.91 482.34,1408.26 C487.04,1416.62 490.7,1421.42 493.73,1428.21 C496.76,1435 498.08,1439.03 498.86,1445.3 C499.64,1451.57 498.95,1457.17 498.01,1462.39 C497.07,1467.62 495.3,1469.61 493.73,1473.79 C492.17,1477.97 493.38,1485.81 489.46,1485.19 C485.54,1484.56 476.28,1467.76 472.36,1470.37 C468.45,1472.98 469.4,1493.16 468.09,1499.43 C466.79,1505.7 469.68,1507.95 465.24,1504.56 C460.8,1501.16 449.88,1482.48 443.87,1480.91 C437.87,1479.34 438.49,1496.79 432.48,1496.01 C426.47,1495.23 416.6,1478.36 411.11,1476.64 C405.63,1474.91 409.09,1491.31 402.56,1486.61 C396.04,1481.91 382.03,1453.87 375.5,1451 C368.97,1448.12 371.13,1474.07 366.95,1470.94 C362.77,1467.81 357.93,1445.66 352.71,1433.9 C347.48,1422.15 342.64,1411.54 338.46,1406.84 C334.28,1402.14 332.79,1413.22 329.91,1408.26 C327.04,1403.3 324.72,1388.13 322.79,1379.77 C320.86,1371.42 320,1367.64 319.37,1362.68 C318.75,1357.72 317.7,1355.32 319.37,1352.71 Z"/></defs><use href="#b3" fill="none" stroke="#fff" stroke-width="4" stroke-linejoin="round"/><use href="#b3" fill="#99502a" stroke="#99502a" stroke-width="1.6" stroke-linejoin="round"/><defs><path id="b4" d="M498.23,1095.21 C498.86,1092.29 499.87,1098.5 502.79,1102.05 C505.72,1105.6 511.68,1119.18 514.19,1114.59 C516.7,1109.99 515.84,1090.14 516.47,1076.98 C517.09,1063.82 515.94,1044.05 517.61,1042.79 C519.28,1041.54 522.24,1059.91 525.58,1070.14 C528.93,1080.38 533.25,1099.47 535.84,1098.63 C538.43,1097.8 538.67,1075.49 539.72,1065.58 C540.76,1055.68 539.53,1044.2 541.54,1044.62 C543.54,1045.03 547.1,1059.84 550.66,1067.86 C554.21,1075.89 558.4,1087.96 560.91,1088.38 C563.42,1088.79 563.08,1075.66 564.33,1070.14 C565.58,1064.63 565.24,1056.62 567.75,1058.29 C570.26,1059.96 574.66,1072.7 578.01,1079.26 C581.35,1085.82 583.98,1093.66 585.98,1094.07 C587.99,1094.49 587.9,1084.88 588.95,1081.54 C589.99,1078.2 589.51,1072.92 591.68,1075.84 C593.85,1078.77 597.45,1089.34 600.8,1097.49 C604.14,1105.64 606.57,1112.68 609.91,1120.28 C613.26,1127.89 616.73,1137.3 619.03,1138.97 C621.33,1140.65 620.99,1127.81 622.45,1129.4 C623.91,1130.99 624.71,1138.44 627.01,1147.64 C629.31,1156.83 632.69,1169.93 634.99,1179.54 C637.28,1189.15 637.79,1191.7 639.54,1200.06 C641.3,1208.41 644.56,1221.79 644.56,1225.13 C644.56,1228.47 643.39,1223.22 639.54,1218.29 C635.7,1213.36 625.47,1192.59 623.59,1198.23 C621.71,1203.87 632.84,1246.01 629.29,1249.06 C625.74,1252.11 607.14,1209.65 604.22,1214.87 C601.29,1220.09 618.97,1279.72 613.33,1277.55 C607.69,1275.38 577.83,1201.26 573.45,1203.02 C569.06,1204.77 595.17,1290.26 589.4,1287.12 C583.64,1283.99 548.47,1189.77 541.99,1185.93 C535.52,1182.08 559.8,1270.17 554.07,1266.15 C548.35,1262.14 519.25,1180.76 510.77,1164.05 C502.29,1147.33 509.27,1177.99 507.81,1174.99 C506.34,1171.98 504.34,1158.08 502.79,1147.64 C501.25,1137.19 500.21,1127.62 499.37,1118.01 C498.54,1108.4 497.61,1098.14 498.23,1095.21 Z"/></defs><use href="#b4" fill="none" stroke="#fff" stroke-width="4" stroke-linejoin="round"/><use href="#b4" fill="#8a99c0" stroke="#8a99c0" stroke-width="1.6" stroke-linejoin="round"/><defs><path id="b5" d="M598.8,1272.82 C599.26,1270.52 602.75,1281.06 607.58,1287.86 C612.4,1294.67 623.06,1312.69 625.13,1309.93 C627.2,1307.17 620.7,1284.68 618.86,1272.82 C617.02,1260.96 613.49,1247.08 615.1,1245.24 C616.71,1243.4 623.27,1257.19 627.64,1262.79 C632,1268.4 637.45,1277.67 638.92,1275.83 C640.39,1273.99 636.44,1260.67 635.66,1252.76 C634.88,1244.86 631.99,1231.79 634.66,1232.71 C637.32,1233.63 644.59,1249.51 650.2,1257.78 C655.81,1266.05 664.32,1281.97 665.24,1277.84 C666.16,1273.7 658.2,1249.33 655.21,1235.21 C652.23,1221.1 645.27,1196.73 648.95,1200.87 C652.62,1205 664.93,1238.98 675.27,1257.78 C685.61,1276.58 703.52,1306.17 705.36,1303.41 C707.2,1300.65 691.64,1264.43 685.3,1242.74 C678.96,1221.04 669.38,1187.37 670.76,1185.07 C672.14,1182.77 685.56,1216.41 692.82,1230.2 C700.08,1243.99 702.33,1246.96 710.37,1260.29 C718.42,1273.62 734.4,1302.91 736.7,1302.91 C738.99,1302.91 727.04,1274.44 722.91,1260.29 C718.77,1246.13 712.75,1227.07 714.13,1225.69 C715.51,1224.31 722.84,1240.91 730.43,1252.76 C738.01,1264.62 748.38,1280.86 755.5,1290.37 C762.62,1299.89 766.44,1304.2 769.29,1304.66 C772.14,1305.12 768.98,1292.28 771.04,1292.88 C773.11,1293.48 776.53,1300.57 780.57,1307.92 C784.62,1315.28 788.97,1323.8 793.11,1332.99 C797.24,1342.19 800.47,1350.34 803.14,1358.06 C805.8,1365.79 809.26,1372.36 807.65,1375.11 C806.04,1377.87 797.03,1371.18 794.36,1373.11 C791.69,1375.04 792.65,1378.98 793.11,1385.64 C793.57,1392.31 799.63,1406.01 796.87,1409.46 C794.11,1412.91 782.43,1402.38 778.06,1404.45 C773.7,1406.52 777.65,1417.07 773.05,1420.74 C768.45,1424.42 759.89,1423.03 752.99,1424.5 C746.1,1425.97 743.26,1427.85 735.44,1428.77 C727.63,1429.69 719.1,1431.36 710.37,1429.52 C701.64,1427.68 694.24,1420.81 687.81,1418.74 C681.37,1416.67 681.25,1421.55 675.27,1418.24 C669.3,1414.93 663.03,1407.58 655.21,1400.69 C647.4,1393.79 639.54,1388.9 632.65,1380.63 C625.76,1372.36 621.97,1365.21 617.61,1355.56 C613.24,1345.9 611.13,1338.09 608.83,1327.98 C606.53,1317.87 606.91,1310.51 605.07,1300.4 C603.23,1290.29 598.34,1275.12 598.8,1272.82 Z"/></defs><use href="#b5" fill="none" stroke="#fff" stroke-width="4" stroke-linejoin="round"/><use href="#b5" fill="#7b6bc0" stroke="#7b6bc0" stroke-width="1.6" stroke-linejoin="round"/><defs><path id="b6" d="M661.3,1144.4 C661.43,1141.63 667.99,1157.76 672,1165 C676.01,1172.24 682.1,1186.65 683.2,1183.9 C684.3,1181.15 680.14,1163.37 678,1150 C675.86,1136.63 673.33,1122.37 671.5,1111 C669.67,1099.63 668.42,1093.06 668,1088 C667.58,1082.94 667.31,1081.24 669.2,1083.4 C671.09,1085.56 674.76,1093.95 678.3,1099.8 C681.84,1105.65 686.21,1116.14 688.5,1115.3 C690.79,1114.46 689.96,1101.89 690.8,1095.2 C691.64,1088.51 690.59,1080.76 693.1,1078.8 C695.61,1076.84 700.94,1086 704.5,1084.5 C708.06,1083 708.74,1072.49 712.5,1070.6 C716.26,1068.71 720.62,1075.25 725,1074.2 C729.38,1073.15 731.38,1064.39 736.4,1064.9 C741.42,1065.41 748.22,1075.2 752.4,1077 C756.58,1078.8 755.24,1073.05 759.2,1074.7 C763.16,1076.35 770.02,1085.58 774,1086 C777.98,1086.42 777.54,1075.31 780.9,1077 C784.25,1078.69 788.54,1088.53 792.3,1095.2 C796.06,1101.87 797.64,1107.55 801.4,1113.4 C805.16,1119.25 809.46,1120.83 812.8,1127.1 C816.14,1133.37 817.27,1139.5 819.6,1147.6 C821.93,1155.7 823.41,1162.61 825.5,1171.3 C827.59,1179.99 829.39,1187.3 831,1195 C832.61,1202.7 835.22,1210.92 834.3,1213.3 C833.38,1215.68 830.01,1211.45 826,1208 C821.99,1204.55 813.5,1191.38 812.4,1194.5 C811.3,1197.62 816.68,1213.16 820,1225 C823.32,1236.84 831.42,1255.43 830.5,1259.1 C829.58,1262.77 821.65,1252.24 815,1245 C808.35,1237.76 796.95,1219.6 794.2,1219.6 C791.45,1219.6 797.58,1235.34 800,1245 C802.42,1254.66 808.32,1269.18 807.4,1272.3 C806.48,1275.42 800.06,1266.6 795,1262 C789.94,1257.4 782.37,1245.09 779.8,1247.2 C777.23,1249.31 783.16,1270.79 781,1273.5 C778.84,1276.21 773.28,1266.93 768,1262 C762.72,1257.07 754.07,1242.53 752.2,1246.6 C750.33,1250.67 760.95,1282.66 757.8,1284.2 C754.65,1285.74 743.62,1267.54 735,1255 C726.38,1242.46 713.55,1216.72 710.8,1215.8 C708.05,1214.88 716.1,1235.97 720,1250 C723.9,1264.03 732.98,1289.48 732.1,1292.3 C731.22,1295.12 721.75,1276.77 715.2,1265.4 C708.66,1254.03 702.6,1242.25 696.4,1230.3 C690.2,1218.35 686,1209.4 681.4,1200.2 C676.8,1191 674.99,1190.33 671.3,1180.1 C667.61,1169.87 661.17,1147.17 661.3,1144.4 Z"/></defs><use href="#b6" fill="none" stroke="#fff" stroke-width="4" stroke-linejoin="round"/><use href="#b6" fill="#3d6ba0" stroke="#3d6ba0" stroke-width="1.6" stroke-linejoin="round"/><defs><path id="b7" d="M800.13,1282.35 C802.66,1281.66 816.71,1295.67 818.18,1291.63 C819.65,1287.58 811.37,1270.86 808.15,1260.29 C804.93,1249.71 798.33,1235.34 800.63,1233.96 C802.93,1232.58 814.02,1246.1 820.69,1252.76 C827.35,1259.43 835.83,1273.53 836.98,1270.31 C838.13,1267.1 830.63,1246.71 826.95,1235.21 C823.28,1223.72 814.4,1208.56 816.93,1207.64 C819.45,1206.72 833.62,1223.17 840.74,1230.2 C847.87,1237.23 853.72,1247.37 855.79,1246 C857.85,1244.62 853.4,1230.03 852.03,1222.68 C850.65,1215.32 844.82,1206.48 848.26,1205.88 C851.71,1205.28 865.31,1219.01 870.83,1219.42 C876.34,1219.83 873.75,1210.39 878.35,1208.14 C882.95,1205.88 889.47,1205.99 895.9,1207.13 C902.34,1208.28 907.47,1212.38 913.45,1214.41 C919.43,1216.43 922.06,1215.27 928.49,1218.17 C934.93,1221.06 941.2,1224.78 948.55,1230.2 C955.9,1235.62 962.63,1241.32 968.61,1247.75 C974.58,1254.19 977.01,1258.41 981.14,1265.3 C985.28,1272.19 987.49,1278 991.17,1285.36 C994.85,1292.71 1001.43,1300.91 1001.2,1305.41 C1000.97,1309.92 990.75,1303.58 989.92,1309.93 C989.09,1316.27 998.76,1333.95 996.69,1340.01 C994.62,1346.08 980.57,1337.05 978.64,1343.02 C976.71,1349 990.29,1369.39 986.16,1372.61 C982.02,1375.82 960.58,1357.17 956.07,1360.57 C951.57,1363.97 966.18,1387.94 961.59,1391.16 C956.99,1394.38 937.3,1377.52 931,1378.12 C924.7,1378.72 933.9,1393.13 927.24,1394.42 C920.57,1395.71 901.68,1385.28 894.65,1385.14 C887.61,1385 893.71,1394.49 888.88,1393.67 C884.05,1392.84 876.69,1385.78 868.32,1380.63 C859.96,1375.48 851.06,1372.48 843.25,1365.59 C835.44,1358.69 831.22,1352.21 825.7,1343.02 C820.18,1333.83 817.07,1324.18 813.16,1315.44 C809.26,1306.71 806.78,1301.45 804.39,1295.39 C802,1289.32 797.6,1283.04 800.13,1282.35 Z"/></defs><use href="#b7" fill="none" stroke="#fff" stroke-width="4" stroke-linejoin="round"/><use href="#b7" fill="#6090c2" stroke="#6090c2" stroke-width="1.6" stroke-linejoin="round"/><defs><path id="b8" d="M826.21,1059.09 C826.21,1051.78 826.51,1046.46 828.49,1039.15 C830.47,1031.83 833.64,1025.47 837.04,1019.2 C840.43,1012.93 844.66,1009.14 847.01,1004.96 C849.36,1000.78 848.71,999.02 849.86,996.41 C851.01,993.8 850.14,990.09 853.28,990.71 C856.41,991.34 863.03,1001.4 866.95,999.83 C870.87,998.26 872.55,986.29 874.64,982.17 C876.73,978.04 874.53,976.9 878.35,977.32 C882.16,977.74 889.96,983.66 895.44,984.44 C900.93,985.23 904.34,981.07 908.26,981.6 C912.18,982.12 914.46,988.23 916.81,987.29 C919.16,986.35 919.67,978.87 921.08,976.47 C922.49,974.06 922.15,971.05 924.5,974.19 C926.85,977.32 929.57,984.79 933.9,993.56 C938.24,1002.34 943.71,1012.65 948.15,1022.05 C952.59,1031.45 955.25,1037.79 958.12,1044.84 C960.99,1051.89 964.34,1058.95 963.82,1060.51 C963.3,1062.08 958.56,1056.52 955.27,1053.39 C951.98,1050.26 946.91,1040.81 945.87,1043.42 C944.82,1046.03 947.85,1057.97 949.57,1067.64 C951.3,1077.3 953.7,1087.77 955.27,1096.13 C956.84,1104.48 960.47,1112.17 958.12,1113.22 C955.77,1114.26 947.52,1106.11 942.45,1101.82 C937.38,1097.54 932.05,1087.25 930.48,1089.86 C928.92,1092.47 932.86,1107.35 933.9,1116.07 C934.95,1124.79 937.75,1134.56 936.18,1137.44 C934.62,1140.31 929.17,1133.83 925.36,1131.74 C921.54,1129.65 918.78,1124.47 915.38,1126.04 C911.99,1127.61 909.97,1138.2 906.84,1140.28 C903.7,1142.37 901.16,1136.55 898.29,1137.44 C895.42,1138.32 895.09,1144.87 891.17,1145.13 C887.25,1145.39 881.89,1140.27 876.92,1138.86 C871.96,1137.45 869.59,1141.09 864.1,1137.44 C858.62,1133.78 852.23,1125.97 847.01,1118.92 C841.79,1111.87 839.01,1106.29 835.61,1098.97 C832.22,1091.66 830.21,1086.34 828.49,1079.03 C826.77,1071.72 826.21,1066.4 826.21,1059.09 Z"/></defs><use href="#b8" fill="none" stroke="#fff" stroke-width="4" stroke-linejoin="round"/><use href="#b8" fill="#765476" stroke="#765476" stroke-width="1.6" stroke-linejoin="round"/><defs><path id="b9" d="M938.18,888.15 C938.28,882.92 937.77,877.3 939.6,873.9 C941.43,870.51 945.28,873.29 948.15,869.63 C951.02,865.97 952.92,861.53 955.27,853.96 C957.62,846.39 959.25,833.8 960.97,828.32 C962.69,822.83 962.84,823 964.67,824.05 C966.5,825.09 968.64,830.1 970.94,834.02 C973.24,837.93 974.86,846.98 977.21,845.41 C979.56,843.85 981.25,835.39 983.76,825.47 C986.27,815.55 988.64,799.48 990.88,791.28 C993.13,783.08 994.18,778.13 996.01,780.74 C997.84,783.35 998.4,793.41 1000.85,805.53 C1003.31,817.64 1006.53,845.79 1009.4,846.84 C1012.27,847.88 1013.65,826.11 1016.52,811.23 C1019.4,796.34 1022.72,775.72 1025.07,765.64 C1027.42,755.56 1027.78,751.54 1029.34,756.24 C1030.91,760.94 1031.37,775.19 1033.62,791.28 C1035.86,807.37 1038.98,840.33 1041.6,843.99 C1044.21,847.64 1045.15,824.54 1047.86,811.23 C1050.58,797.91 1054.16,779.8 1056.41,771.34 C1058.66,762.88 1058.29,759.33 1060.11,765.07 C1061.94,770.82 1063.51,789.93 1066.38,802.68 C1069.25,815.42 1072.91,831.98 1075.78,834.59 C1078.66,837.2 1079.96,821.99 1082.05,816.92 C1084.14,811.86 1085.35,805.91 1087.18,806.95 C1089.01,808 1090.61,816.61 1092.02,822.62 C1093.43,828.63 1095.13,833.97 1094.87,839.72 C1094.61,845.46 1091.8,846.13 1090.6,853.96 C1089.4,861.79 1088.84,870.96 1088.32,882.45 C1087.8,893.94 1088.38,909.43 1087.75,916.64 C1087.12,923.85 1086.73,923.33 1084.9,921.77 C1083.07,920.2 1081.96,916.24 1077.78,908.09 C1073.6,899.94 1065.24,876.8 1062.11,877.32 C1058.97,877.84 1059.9,893.81 1060.68,910.94 C1061.47,928.07 1068.21,966.59 1066.38,970.77 C1064.55,974.95 1057.35,948.36 1050.71,933.73 C1044.08,919.11 1033.59,889.95 1030.2,891 C1026.8,892.04 1030.26,919.32 1032.19,939.43 C1034.13,959.54 1043.09,998.59 1040.74,1000.68 C1038.39,1002.77 1026.95,967.91 1019.37,950.83 C1011.8,933.75 1003.09,907 999.43,907.52 C995.77,908.04 998.65,938.32 999.43,953.68 C1000.21,969.03 1005.79,989.19 1003.7,991.28 C1001.61,993.37 994.04,975.2 988.03,965.07 C982.03,954.94 974.6,937.06 970.94,936.01 C967.28,934.97 969.14,954.15 968.09,959.37 C967.05,964.6 967.85,968.16 965.24,964.5 C962.63,960.85 957.76,947.68 953.85,939.43 C949.93,931.18 946.59,926.28 943.87,919.49 C941.16,912.7 940.08,908.14 939.03,902.39 C937.99,896.65 938.07,893.37 938.18,888.15 Z"/></defs><use href="#b9" fill="none" stroke="#fff" stroke-width="4" stroke-linejoin="round"/><use href="#b9" fill="#445228" stroke="#445228" stroke-width="1.6" stroke-linejoin="round"/><defs><path id="b10" d="M1076.92,935.16 C1077.45,934.63 1082.13,942.67 1084.9,945.13 C1087.67,947.58 1090.46,954.81 1092.02,948.55 C1093.59,942.28 1092.66,921.75 1093.45,910.94 C1094.23,900.13 1094.21,891.92 1096.3,889.57 C1098.39,887.22 1101.81,895.35 1104.84,898.12 C1107.87,900.89 1110.47,908.59 1112.82,904.67 C1115.17,900.75 1115.99,884.12 1117.66,876.75 C1119.34,869.39 1119.06,863.98 1121.94,864.5 C1124.81,865.02 1129.42,875.27 1133.33,879.6 C1137.25,883.94 1140.17,892.33 1143.3,888.15 C1146.44,883.97 1148.34,864.23 1150.43,856.81 C1152.52,849.39 1152.09,847.17 1154.7,847.69 C1157.31,848.21 1160.75,856.16 1164.67,859.66 C1168.59,863.16 1172.67,867.3 1176.07,866.78 C1179.46,866.26 1180.58,859.16 1183.19,856.81 C1185.8,854.46 1186.4,854.22 1190.31,853.96 C1194.23,853.7 1197.77,854.34 1204.56,855.38 C1211.35,856.43 1220.04,858.35 1227.35,859.66 C1234.66,860.96 1239.22,861.72 1244.44,862.51 C1249.67,863.29 1251.66,861.32 1255.84,863.93 C1260.02,866.54 1263.06,871.27 1267.24,876.75 C1271.42,882.24 1275.5,887.58 1278.63,893.85 C1281.77,900.11 1283.02,903.63 1284.33,910.94 C1285.64,918.25 1285.75,927.2 1285.75,933.73 C1285.75,940.26 1286.42,944.99 1284.33,946.55 C1282.24,948.12 1277.23,939.41 1274.36,942.28 C1271.49,945.15 1269.97,954.65 1268.66,962.22 C1267.36,969.8 1269.59,980.72 1267.24,983.59 C1264.89,986.46 1259.76,979.82 1255.84,977.89 C1251.92,975.96 1249.53,970.44 1245.87,973.05 C1242.21,975.66 1239.81,988.11 1235.9,992.14 C1231.98,996.16 1227.64,992.11 1224.5,994.99 C1221.37,997.86 1222.46,1007.02 1218.8,1007.81 C1215.15,1008.59 1209,1001.98 1204.56,999.26 C1200.12,996.54 1196.68,990.38 1194.59,992.99 C1192.5,995.6 1193.68,1007.55 1193.16,1013.5 C1192.64,1019.46 1195.39,1026.51 1191.74,1025.47 C1188.08,1024.43 1179.12,1013.13 1173.22,1007.81 C1167.32,1002.48 1162.42,995.37 1159.54,996.41 C1156.67,997.45 1158.28,1008.54 1157.55,1013.5 C1156.82,1018.47 1158.95,1024.52 1155.56,1023.48 C1152.16,1022.43 1144.67,1012.66 1139.03,1007.81 C1133.39,1002.95 1127.5,995.94 1124.79,996.98 C1122.07,998.02 1124.74,1008.91 1124.22,1013.5 C1123.69,1018.1 1124.97,1025.19 1121.94,1022.05 C1118.91,1018.92 1112.92,1006.33 1107.69,996.41 C1102.47,986.49 1098.15,976.8 1093.45,967.92 C1088.75,959.04 1085.08,953.98 1082.05,947.98 C1079.02,941.97 1076.4,935.68 1076.92,935.16 Z"/></defs><use href="#b10" fill="none" stroke="#fff" stroke-width="4" stroke-linejoin="round"/><use href="#b10" fill="#88c240" stroke="#88c240" stroke-width="1.6" stroke-linejoin="round"/><defs><path id="b11" d="M1160.51,786.78 C1161.45,783.23 1165.41,795.26 1167.92,794.47 C1170.43,793.69 1171.47,791.49 1174.19,782.51 C1176.9,773.52 1179.6,756.18 1182.74,745.47 C1185.87,734.76 1188.93,728.7 1191.28,724.1 C1193.63,719.51 1192.58,718.31 1195.56,720.4 C1198.53,722.49 1203.6,734.56 1207.52,735.5 C1211.44,736.44 1212.85,729.97 1216.92,725.53 C1221,721.09 1222.95,714.94 1229.74,711.28 C1236.53,707.63 1245.86,707.41 1253.96,705.58 C1262.06,703.76 1267.64,703.24 1273.9,701.31 C1280.17,699.38 1282.92,695.46 1288.15,695.04 C1293.37,694.62 1296.65,699.29 1302.39,699.03 C1308.14,698.77 1312.7,693.46 1319.49,693.62 C1326.28,693.77 1332.64,697.69 1339.43,699.89 C1346.22,702.08 1350.26,703.76 1356.52,705.58 C1362.79,707.41 1367.87,707.51 1373.62,709.86 C1379.36,712.21 1382.64,714.75 1387.86,718.4 C1393.09,722.06 1397.93,724.32 1402.11,729.8 C1406.29,735.28 1407.94,741.27 1410.66,748.32 C1413.37,755.37 1415.88,760.95 1416.92,768.26 C1417.97,775.57 1417.5,780.89 1416.35,788.21 C1415.2,795.52 1412.74,803.71 1410.66,808.15 C1408.57,812.59 1408.35,812.42 1404.96,812.42 C1401.56,812.42 1396.05,806.32 1392.14,808.15 C1388.22,809.98 1386.46,816.13 1383.59,822.39 C1380.72,828.66 1378.82,837.64 1376.47,842.34 C1374.12,847.04 1374.95,849.86 1370.77,848.03 C1366.59,846.21 1358.38,832.89 1353.68,832.36 C1348.97,831.84 1348.37,839.86 1345.13,845.19 C1341.89,850.51 1341.5,861.01 1336.01,861.42 C1330.53,861.84 1320.33,847.83 1315.21,847.46 C1310.09,847.1 1310.7,855.83 1308.09,859.43 C1305.48,863.03 1305.67,867.38 1300.97,867.12 C1296.27,866.86 1287.41,858.63 1282.45,858.01 C1277.49,857.38 1277.04,861.88 1273.9,863.7 C1270.77,865.53 1269.01,867.98 1265.36,867.98 C1261.7,867.98 1257.62,864.64 1253.96,863.7 C1250.3,862.76 1250.11,862.48 1245.41,862.85 C1240.71,863.21 1234.06,866.59 1228.32,865.7 C1222.57,864.81 1219.3,859.94 1214.07,858.01 C1208.85,856.07 1204.79,855.94 1199.83,855.16 C1194.87,854.37 1191.45,853.47 1187.01,853.73 C1182.57,853.99 1179.01,858.67 1175.61,856.58 C1172.22,854.49 1170.84,850.17 1168.49,842.34 C1166.14,834.5 1164.25,824.03 1162.79,813.85 C1161.33,803.66 1159.57,790.33 1160.51,786.78 Z"/></defs><use href="#b11" fill="none" stroke="#fff" stroke-width="4" stroke-linejoin="round"/><use href="#b11" fill="#566585" stroke="#566585" stroke-width="1.6" stroke-linejoin="round"/><defs><path id="b12" d="M1422.05,782.51 C1422.05,777.28 1423.07,772.96 1424.9,768.26 C1426.73,763.56 1428.37,758.43 1432.02,756.87 C1435.68,755.3 1440.4,761.28 1444.84,759.72 C1449.28,758.15 1451.8,752.5 1456.24,748.32 C1460.68,744.14 1464.1,737.03 1469.06,736.92 C1474.02,736.82 1478.34,748.01 1483.3,747.75 C1488.27,747.49 1491.42,739.47 1496.13,735.5 C1500.83,731.53 1505.29,725.84 1508.95,726.1 C1512.6,726.36 1513.46,732.17 1516.07,736.92 C1518.68,741.68 1519.53,752.02 1523.19,752.02 C1526.85,752.02 1531.05,741.78 1536.01,736.92 C1540.97,732.07 1546.6,724.48 1550.26,725.53 C1553.91,726.57 1553.34,735.41 1555.95,742.62 C1558.57,749.83 1560.32,764.32 1564.5,764.84 C1568.68,765.37 1574.05,750.59 1578.75,745.47 C1583.45,740.35 1587.01,734.31 1590.14,736.92 C1593.28,739.53 1593.23,750.05 1595.84,759.72 C1598.45,769.38 1600.73,787.02 1604.39,789.63 C1608.04,792.24 1611.87,778.3 1615.78,773.96 C1619.7,769.62 1623.25,763.89 1625.75,765.98 C1628.26,768.07 1628.57,777.63 1629.46,785.36 C1630.35,793.09 1630.75,801.62 1630.6,808.15 C1630.44,814.68 1629.75,819.92 1628.6,820.97 C1627.45,822.01 1625.74,815.94 1624.33,813.85 C1622.92,811.76 1623,806.44 1620.91,809.57 C1618.82,812.71 1615.44,821.8 1612.93,830.94 C1610.43,840.08 1609.33,848.98 1607.24,859.43 C1605.15,869.88 1604.15,887.92 1601.54,887.92 C1598.93,887.92 1596.75,873.01 1592.99,859.43 C1589.23,845.85 1584.68,816.46 1581.03,813.85 C1577.37,811.23 1575.66,831.6 1573.05,845.19 C1570.44,858.77 1568.35,877.74 1566.78,887.92 C1565.21,898.11 1567.01,905.96 1564.5,900.74 C1561.99,895.52 1557.7,874.84 1553.11,859.43 C1548.51,844.02 1543.09,819.31 1539.43,816.7 C1535.77,814.08 1535.88,832.13 1533.16,845.19 C1530.45,858.24 1528.27,885.31 1524.62,887.92 C1520.96,890.53 1518.02,870.14 1513.22,859.43 C1508.41,848.72 1502.58,830.56 1498.4,829.52 C1494.23,828.47 1493.2,847.83 1490.43,853.73 C1487.66,859.63 1486.44,863.28 1483.3,861.71 C1480.17,860.14 1477.36,851.09 1473.33,845.19 C1469.31,839.28 1465.81,830.66 1461.37,829.52 C1456.93,828.37 1453.71,840.75 1449.12,838.92 C1444.52,837.09 1440.74,827.27 1436.3,819.54 C1431.86,811.81 1427.51,803.54 1424.9,796.75 C1422.29,789.96 1422.05,787.73 1422.05,782.51 Z"/></defs><use href="#b12" fill="none" stroke="#fff" stroke-width="4" stroke-linejoin="round"/><use href="#b12" fill="#436387" stroke="#436387" stroke-width="1.6" stroke-linejoin="round"/><defs><path id="b13" d="M1498.29,939.54 C1497.66,931.19 1497.46,920.22 1497.72,908.21 C1497.98,896.19 1498.57,881.49 1499.72,874.02 C1500.86,866.55 1501.38,864.33 1503.99,867.46 C1506.6,870.6 1510.04,882.86 1513.96,891.11 C1517.88,899.36 1522.22,914.57 1525.36,912.48 C1528.49,910.39 1528.96,892.51 1531.05,879.72 C1533.14,866.92 1534.92,850.62 1536.75,842.68 C1538.58,834.74 1538.41,830.66 1541.03,836.41 C1543.64,842.16 1546.56,859.81 1551,874.02 C1555.44,888.22 1561.59,912.86 1565.24,913.9 C1568.9,914.95 1568.85,893.82 1570.94,879.72 C1573.03,865.61 1574.97,846.28 1576.64,836.98 C1578.31,827.68 1577.71,822.74 1580.06,829 C1582.41,835.27 1585.49,856.91 1589.46,871.17 C1593.43,885.43 1598.05,905.21 1601.71,906.78 C1605.37,908.35 1606.95,889.12 1609.4,879.72 C1611.86,870.31 1613.38,860.62 1615.1,855.5 C1616.82,850.38 1616.45,847.36 1618.8,851.79 C1621.15,856.23 1624.42,870.16 1627.92,879.72 C1631.42,889.27 1634.76,902.89 1637.89,903.93 C1641.03,904.98 1642.25,891.32 1645.01,885.41 C1647.78,879.51 1649.86,869.13 1652.99,871.74 C1656.13,874.35 1658.35,889.06 1662.11,899.66 C1665.87,910.26 1669.85,929.05 1673.5,929.57 C1677.16,930.09 1679.18,911.54 1682.05,902.51 C1684.92,893.47 1686.56,879.24 1689.17,880.28 C1691.79,881.33 1693.42,894.73 1696.3,908.21 C1699.17,921.68 1701.45,939.95 1704.84,953.79 C1708.24,967.63 1711.94,981.61 1714.81,983.7 C1717.69,985.79 1719.05,969.89 1720.51,965.19 C1721.98,960.48 1722.17,953.36 1722.79,958.06 C1723.42,962.76 1723.98,978.55 1723.93,990.83 C1723.88,1003.1 1723.13,1015.72 1722.51,1025.01 C1721.88,1034.31 1722.71,1042.58 1720.51,1041.54 C1718.32,1040.49 1714.72,1027.57 1710.54,1019.32 C1706.36,1011.06 1700.85,996 1697.72,996.52 C1694.59,997.05 1694.75,1013.55 1693.45,1022.17 C1692.14,1030.78 1691.64,1039.09 1690.6,1043.53 C1689.55,1047.97 1690.36,1049.25 1687.75,1046.38 C1685.14,1043.51 1680.27,1033.35 1676.35,1027.86 C1672.44,1022.38 1669.25,1014.9 1666.38,1016.47 C1663.51,1018.03 1662.25,1031.71 1660.68,1036.41 C1659.12,1041.11 1660.45,1044.2 1657.83,1042.11 C1655.22,1040.02 1650.46,1030.34 1646.44,1025.01 C1642.42,1019.69 1638.51,1012 1635.9,1013.05 C1633.29,1014.09 1633.66,1024.86 1632.19,1030.71 C1630.73,1036.56 1631.32,1046.52 1627.92,1044.96 C1624.53,1043.39 1619.16,1030.78 1613.68,1022.17 C1608.19,1013.55 1601.4,997.95 1598.01,997.95 C1594.61,997.95 1595.94,1014.33 1595.16,1022.17 C1594.37,1030 1597.13,1042.77 1593.73,1040.68 C1590.34,1038.59 1583.17,1022.26 1576.64,1010.77 C1570.11,999.28 1562.04,979.57 1558.12,978.01 C1554.2,976.44 1556.05,994.91 1555.27,1002.22 C1554.49,1009.53 1557.24,1020.5 1553.85,1017.89 C1550.45,1015.28 1544.06,999.99 1536.75,987.98 C1529.44,975.96 1519.44,956.91 1513.96,952.36 C1508.48,947.82 1509.19,962.93 1506.84,963.19 C1504.49,963.45 1502.71,958.12 1501.14,953.79 C1499.57,949.45 1498.92,947.9 1498.29,939.54 Z"/></defs><use href="#b13" fill="none" stroke="#fff" stroke-width="4" stroke-linejoin="round"/><use href="#b13" fill="#7e4294" stroke="#7e4294" stroke-width="1.6" stroke-linejoin="round"/><defs><path id="b14" d="M1271.62,950.6 C1273.19,946.68 1278.64,955.63 1282.45,957.72 C1286.26,959.81 1290.07,965.91 1292.42,961.99 C1294.77,958.08 1294.23,942.62 1295.27,936.35 C1296.32,930.09 1295.77,928.07 1298.12,927.81 C1300.47,927.55 1304.43,932.32 1308.09,934.93 C1311.75,937.54 1315.45,944.92 1318.06,942.05 C1320.67,939.18 1320.51,925 1322.34,919.26 C1324.16,913.51 1324.38,909.15 1328.03,910.71 C1331.69,912.28 1337.58,922.69 1342.28,927.81 C1346.98,932.92 1350.8,942.29 1353.68,938.63 C1356.55,934.98 1356.38,916.01 1357.95,907.86 C1359.52,899.72 1358.83,892.62 1362.22,894.19 C1365.62,895.75 1371.77,908.16 1376.47,916.41 C1381.17,924.66 1384.31,932.93 1387.86,939.2 C1391.42,945.47 1394.27,954.78 1395.84,950.6 C1397.41,946.42 1395.52,926.18 1396.41,916.41 C1397.3,906.64 1397.55,896.8 1400.68,897.32 C1403.82,897.84 1409.06,911.58 1413.5,919.26 C1417.94,926.94 1421.24,933.56 1424.9,939.2 C1428.56,944.84 1431.1,951.07 1433.45,950.03 C1435.8,948.98 1435.89,937.32 1437.72,933.5 C1439.55,929.69 1440.55,927.14 1443.42,929.23 C1446.29,931.32 1449.47,938.37 1453.39,944.9 C1457.31,951.43 1460.09,959.1 1464.79,964.84 C1469.49,970.59 1475.11,971.54 1479.03,976.24 C1482.95,980.94 1484.06,984.22 1486.15,990.48 C1488.24,996.75 1489.75,1003.64 1490.43,1010.43 C1491.11,1017.22 1491.95,1022.3 1489.86,1027.52 C1487.77,1032.74 1482.32,1033.17 1479.03,1038.92 C1475.74,1044.66 1475.57,1055.73 1471.91,1058.86 C1468.25,1061.99 1463.27,1056.01 1459.09,1056.01 C1454.91,1056.01 1451.99,1055.73 1449.12,1058.86 C1446.24,1061.99 1446.81,1071.54 1443.42,1073.11 C1440.02,1074.67 1434.78,1068.97 1430.6,1067.41 C1426.42,1065.84 1423.76,1062.47 1420.63,1064.56 C1417.49,1066.65 1415.33,1075.3 1413.5,1078.8 C1411.68,1082.3 1413.79,1084.69 1410.66,1083.65 C1407.52,1082.6 1400.59,1075.98 1396.41,1073.11 C1392.23,1070.23 1391.52,1067.56 1387.86,1067.98 C1384.21,1068.4 1382.21,1075.49 1376.47,1075.38 C1370.72,1075.28 1363.31,1069.91 1356.52,1067.41 C1349.73,1064.9 1345.7,1063.8 1339.43,1061.71 C1333.16,1059.62 1328.6,1059.41 1322.34,1056.01 C1316.07,1052.62 1311.51,1048.41 1305.24,1043.19 C1298.97,1037.97 1293.11,1032.48 1288.15,1027.52 C1283.19,1022.56 1280.53,1020.83 1278.18,1016.13 C1275.83,1011.42 1276.11,1008.67 1275.33,1001.88 C1274.54,995.09 1274.58,988.49 1273.9,979.09 C1273.22,969.69 1270.06,954.52 1271.62,950.6 Z"/></defs><use href="#b14" fill="none" stroke="#fff" stroke-width="4" stroke-linejoin="round"/><use href="#b14" fill="#62aa72" stroke="#62aa72" stroke-width="1.6" stroke-linejoin="round"/><defs><path id="b15" d="M1468.95,1077.72 C1468.68,1069.36 1470.66,1060.45 1472.65,1053.5 C1474.63,1046.56 1476.38,1042.96 1479.77,1039.83 C1483.17,1036.7 1486.73,1039.28 1491.17,1036.41 C1495.61,1033.54 1499.81,1025.73 1503.99,1024.16 C1508.17,1022.59 1510.57,1026.77 1513.96,1027.86 C1517.36,1028.96 1520.16,1031.71 1522.51,1030.14 C1524.86,1028.58 1524.95,1022.61 1526.78,1019.32 C1528.61,1016.03 1529.08,1011.67 1532.48,1012.19 C1535.87,1012.72 1540.86,1018.51 1545.3,1022.17 C1549.74,1025.82 1553.56,1033.18 1556.7,1032.14 C1559.83,1031.09 1560.57,1020.28 1562.39,1016.47 C1564.22,1012.65 1563.53,1009.25 1566.67,1011.34 C1569.8,1013.43 1574.53,1021.96 1579.49,1027.86 C1584.45,1033.77 1590.08,1043.01 1593.73,1043.53 C1597.39,1044.06 1597.45,1033.58 1599.43,1030.71 C1601.42,1027.84 1600.9,1024.73 1604.56,1027.86 C1608.21,1031 1614.31,1041.28 1619.37,1047.81 C1624.44,1054.34 1628.02,1062.07 1632.19,1063.48 C1636.37,1064.89 1638.25,1053.67 1642.17,1055.5 C1646.08,1057.33 1649.38,1067.02 1653.56,1073.45 C1657.74,1079.87 1660.26,1085.32 1664.96,1090.54 C1669.66,1095.76 1675.02,1096.71 1679.2,1101.94 C1683.38,1107.16 1685.14,1112.24 1687.75,1119.03 C1690.36,1125.82 1692.25,1131.66 1693.45,1138.97 C1694.65,1146.29 1694.41,1149.52 1694.3,1158.92 C1694.2,1168.32 1693.66,1182.68 1692.88,1190.26 C1692.09,1197.83 1692.01,1199.71 1690.03,1200.23 C1688.04,1200.75 1684.66,1195.09 1682.05,1193.11 C1679.44,1191.12 1677.45,1186.79 1675.78,1189.4 C1674.11,1192.01 1674.14,1201.71 1672.93,1207.35 C1671.73,1212.99 1672.26,1220.69 1669.23,1220.17 C1666.2,1219.65 1660.07,1207.9 1656.41,1204.5 C1652.75,1201.11 1650.85,1198.52 1649.29,1201.65 C1647.72,1204.79 1648.75,1215.59 1647.86,1221.6 C1646.98,1227.6 1648.1,1237.03 1644.44,1234.42 C1640.79,1231.8 1632.93,1214.66 1627.92,1207.35 C1622.91,1200.04 1618.77,1191.4 1617.09,1194.53 C1615.42,1197.66 1618.8,1215.57 1618.8,1224.44 C1618.8,1233.32 1619.6,1243.49 1617.09,1242.96 C1614.59,1242.44 1610.72,1231.26 1605.13,1221.6 C1599.54,1211.93 1590,1192.87 1586.61,1190.26 C1583.21,1187.64 1586.87,1202.13 1586.61,1207.35 C1586.35,1212.57 1588.06,1220.31 1585.19,1218.75 C1582.31,1217.18 1575.75,1204.18 1570.94,1198.8 C1566.13,1193.42 1561.69,1189.4 1558.97,1189.4 C1556.26,1189.4 1557.33,1196.56 1556.13,1198.8 C1554.92,1201.05 1556.5,1205.31 1552.42,1201.65 C1548.35,1198 1539.39,1185.91 1533.9,1178.86 C1528.42,1171.81 1526.16,1166.32 1522.51,1163.19 C1518.85,1160.06 1518.14,1165.16 1513.96,1161.77 C1509.78,1158.37 1504.94,1151.98 1499.72,1144.67 C1494.49,1137.36 1490.17,1130.24 1485.47,1121.88 C1480.77,1113.52 1477.1,1107.18 1474.07,1099.09 C1471.04,1090.99 1469.21,1086.08 1468.95,1077.72 Z"/></defs><use href="#b15" fill="none" stroke="#fff" stroke-width="4" stroke-linejoin="round"/><use href="#b15" fill="#a92ce8" stroke="#a92ce8" stroke-width="1.6" stroke-linejoin="round"/><defs><path id="b16" d="M944.22,1121.08 C945.52,1118.89 951.71,1126.57 957.04,1130.48 C962.36,1134.4 971.71,1146 973.28,1142.45 C974.84,1138.9 968.56,1123.02 965.58,1111.11 C962.61,1099.2 955.47,1080.1 957.04,1077.49 C958.6,1074.88 968.02,1090.18 974.13,1096.87 C980.24,1103.55 988.28,1116.57 990.37,1113.96 C992.46,1111.35 987.2,1092.28 985.53,1082.62 C983.86,1072.96 978.64,1061.78 981.25,1061.25 C983.87,1060.73 994.03,1073.77 999.77,1079.77 C1005.52,1085.78 1011.55,1097.67 1012.59,1094.02 C1013.64,1090.36 1007.45,1070.38 1005.47,1059.83 C1003.49,1049.28 997.59,1033.86 1001.77,1036.47 C1005.94,1039.08 1018.96,1061.54 1028.26,1074.07 C1037.56,1086.61 1050.91,1108.5 1052.48,1104.84 C1054.05,1101.19 1041.93,1071.68 1036.81,1054.13 C1031.69,1036.58 1020.9,1008.07 1024.56,1009.12 C1028.21,1010.16 1044.84,1042.8 1056.75,1059.83 C1068.66,1076.86 1085.86,1101.99 1089.52,1101.99 C1093.17,1101.99 1080.87,1073.83 1076.7,1059.83 C1072.52,1045.83 1063.07,1024.6 1066.72,1025.64 C1070.38,1026.69 1086.45,1052.47 1096.64,1065.53 C1106.82,1078.58 1114.18,1087.36 1122.28,1096.87 C1130.38,1106.37 1135.57,1110.59 1140.8,1117.38 C1146.02,1124.17 1146.85,1127.32 1150.77,1133.9 C1154.69,1140.48 1163.73,1152.75 1162.17,1153.28 C1160.6,1153.8 1150.32,1143.96 1142.22,1136.75 C1134.13,1129.54 1120.09,1111.87 1118.01,1113.96 C1115.92,1116.05 1123.77,1134.57 1130.83,1148.15 C1137.88,1161.73 1147.95,1174.56 1156.47,1188.03 C1164.98,1201.51 1178.83,1220.61 1177.26,1221.65 C1175.7,1222.7 1161.66,1207.21 1147.92,1193.73 C1134.18,1180.26 1107.56,1149.72 1102.34,1148.15 C1097.11,1146.58 1112.38,1171.87 1119.43,1185.19 C1126.48,1198.5 1134.95,1211.5 1140.8,1220.8 C1146.65,1230.09 1153.69,1235.64 1151.34,1235.9 C1148.99,1236.16 1137.74,1229.95 1127.98,1222.22 C1118.21,1214.49 1101.72,1194.25 1098.06,1193.73 C1094.41,1193.21 1103.86,1210.75 1108.03,1219.37 C1112.21,1227.99 1121.9,1238.13 1120.85,1240.74 C1119.81,1243.35 1109.28,1237.64 1102.34,1233.62 C1095.39,1229.6 1087.14,1217.24 1082.96,1218.8 C1078.78,1220.37 1081.74,1233.08 1079.54,1242.17 C1077.35,1251.25 1074.13,1266.81 1071,1268.38 C1067.86,1269.94 1066,1258.39 1062.45,1250.71 C1058.9,1243.03 1056.32,1228.06 1051.62,1226.5 C1046.92,1224.93 1042.4,1236.68 1036.81,1242.17 C1031.22,1247.65 1024.27,1257.45 1021.14,1256.41 C1018.01,1255.37 1022.59,1239.08 1019.72,1236.47 C1016.84,1233.86 1011.22,1243.21 1005.47,1242.17 C999.72,1241.12 994.64,1235.99 988.38,1230.77 C982.11,1225.55 976.77,1219.94 971.28,1213.68 C965.8,1207.41 962.12,1201.54 958.46,1196.58 C954.81,1191.62 951.34,1189.22 951.34,1186.61 C951.34,1184 957.68,1185.73 958.46,1182.34 C959.25,1178.94 957.18,1175.4 955.61,1168.09 C954.05,1160.78 952,1151.07 949.91,1142.45 C947.83,1133.83 942.91,1123.28 944.22,1121.08 Z"/></defs><use href="#b16" fill="none" stroke="#fff" stroke-width="4" stroke-linejoin="round"/><use href="#b16" fill="#836b3a" stroke="#836b3a" stroke-width="1.6" stroke-linejoin="round"/><defs><path id="b17" d="M1097.21,1274.07 C1098.25,1272.25 1105.76,1277.86 1110.88,1280.63 C1116,1283.4 1124.08,1292.05 1125.13,1289.17 C1126.17,1286.3 1120.24,1273.31 1116.58,1264.96 C1112.92,1256.6 1103.62,1245.68 1105.19,1243.59 C1106.75,1241.5 1119.28,1250.17 1125.13,1253.56 C1130.98,1256.96 1137.09,1265.24 1137.09,1262.11 C1137.09,1258.97 1128.99,1244.82 1125.13,1236.47 C1121.26,1228.11 1112.88,1216.52 1116.01,1216.52 C1119.15,1216.52 1132.3,1228.53 1142.22,1236.47 C1152.15,1244.41 1169.1,1263.49 1170.14,1259.83 C1171.19,1256.17 1155.13,1229.79 1147.92,1216.52 C1140.71,1203.26 1126.65,1185.38 1130.83,1187.46 C1135,1189.55 1155.98,1212.93 1170.71,1227.92 C1185.44,1242.91 1208.56,1270.28 1211.17,1269.23 C1213.78,1268.19 1193.84,1238.68 1184.96,1222.22 C1176.08,1205.77 1160.12,1180.53 1162.74,1179.49 C1165.35,1178.44 1187.29,1203.99 1199.2,1216.52 C1211.11,1229.06 1218.81,1237.94 1227.69,1247.86 C1236.57,1257.79 1242.05,1263.6 1247.64,1270.66 C1253.22,1277.71 1257.55,1287.37 1258.18,1286.32 C1258.8,1285.28 1250.38,1265.22 1251.05,1264.96 C1251.73,1264.7 1257.28,1276.02 1261.88,1284.9 C1266.48,1293.78 1271.01,1301.64 1276.13,1313.39 C1281.24,1325.14 1291.37,1347.96 1289.8,1349 C1288.23,1350.05 1277.14,1331.47 1267.58,1319.09 C1258.02,1306.71 1240.8,1282.53 1237.66,1281.48 C1234.53,1280.44 1245,1300.23 1250.48,1313.39 C1255.97,1326.55 1262.88,1340.74 1267.58,1353.28 C1272.28,1365.81 1278.21,1380.72 1276.13,1381.77 C1274.04,1382.81 1263.39,1367.75 1256.18,1358.97 C1248.97,1350.2 1239.42,1333.9 1236.81,1333.9 C1234.2,1333.9 1240.06,1349.94 1241.94,1358.97 C1243.82,1368.01 1248.63,1380.58 1247.07,1383.19 C1245.5,1385.8 1237.2,1375.83 1233.39,1373.22 C1229.58,1370.61 1228.36,1367.9 1226.27,1368.95 C1224.18,1369.99 1223.82,1376.15 1221.99,1378.92 C1220.17,1381.69 1219.43,1383.78 1216.3,1384.05 C1213.16,1384.31 1209.08,1379.19 1204.9,1380.34 C1200.72,1381.49 1198.73,1390.57 1193.5,1390.31 C1188.28,1390.05 1181.63,1382.31 1176.41,1378.92 C1171.19,1375.52 1167.89,1370.85 1165.01,1371.79 C1162.14,1372.74 1164.4,1384.83 1160.74,1384.05 C1157.08,1383.26 1151.08,1374.73 1145.07,1367.52 C1139.06,1360.31 1132.42,1351.26 1127.98,1344.73 C1123.54,1338.2 1122.94,1337.65 1120.85,1331.91 C1118.77,1326.16 1119.45,1320.96 1116.58,1313.39 C1113.71,1305.82 1108.74,1297.81 1105.19,1290.6 C1101.63,1283.39 1096.16,1275.9 1097.21,1274.07 Z"/></defs><use href="#b17" fill="none" stroke="#fff" stroke-width="4" stroke-linejoin="round"/><use href="#b17" fill="#a09eb4" stroke="#a09eb4" stroke-width="1.6" stroke-linejoin="round"/><defs><path id="b18" d="M1144.22,1096.87 C1144.74,1092.95 1153.78,1103.08 1159.32,1106.84 C1164.85,1110.6 1172.85,1120.77 1174.42,1117.38 C1175.98,1113.98 1169.33,1096 1167.86,1088.32 C1166.4,1080.64 1164.35,1076.54 1166.44,1075.5 C1168.53,1074.45 1174.82,1080.17 1179.26,1082.62 C1183.7,1085.08 1189.09,1092.02 1190.66,1088.89 C1192.22,1085.75 1188.17,1071.64 1187.81,1065.53 C1187.44,1059.42 1185.53,1055.03 1188.66,1055.56 C1191.79,1056.08 1199.05,1063.68 1204.9,1068.38 C1210.75,1073.08 1218.22,1084.33 1220.57,1081.2 C1222.92,1078.06 1218.24,1058.44 1217.72,1051.28 C1217.2,1044.13 1214.33,1040.6 1217.72,1042.17 C1221.12,1043.73 1229.03,1053.35 1236.24,1059.83 C1243.45,1066.31 1253.38,1078.02 1257.04,1077.49 C1260.69,1076.97 1255.82,1061.79 1256.18,1056.98 C1256.55,1052.17 1254.85,1049.19 1259.03,1051.28 C1263.21,1053.37 1271.66,1061.85 1278.97,1068.38 C1286.29,1074.91 1293.96,1083.13 1298.92,1086.89 C1303.88,1090.66 1304.21,1089.67 1306.04,1088.89 C1307.87,1088.11 1307.06,1080.64 1308.89,1082.62 C1310.72,1084.61 1312.62,1091.88 1316.01,1099.72 C1319.41,1107.55 1323.23,1115.95 1327.41,1125.36 C1331.59,1134.76 1335.15,1142.12 1338.8,1151 C1342.46,1159.88 1348.92,1173.27 1347.35,1173.79 C1345.78,1174.31 1337.46,1161.26 1330.26,1153.85 C1323.05,1146.43 1310.12,1131.24 1308.03,1133.33 C1305.94,1135.42 1314.16,1151.56 1318.86,1165.24 C1323.56,1178.93 1334.72,1204.32 1333.68,1207.98 C1332.63,1211.63 1321.47,1193.96 1313.16,1185.19 C1304.86,1176.41 1290.99,1159.07 1288.38,1160.11 C1285.76,1161.16 1295,1179.6 1298.92,1190.88 C1302.83,1202.17 1311.31,1219.56 1309.74,1221.65 C1308.18,1223.74 1298.1,1209.75 1290.37,1202.28 C1282.64,1194.81 1270.71,1180.39 1267.58,1180.91 C1264.44,1181.43 1271.81,1198.86 1273.28,1205.13 C1274.74,1211.4 1278.17,1215.62 1275.56,1215.1 C1272.94,1214.58 1265.46,1207.24 1259.03,1202.28 C1252.61,1197.32 1243.12,1186.47 1240.51,1188.03 C1237.9,1189.6 1243.48,1204.82 1244.79,1210.83 C1246.09,1216.83 1252.34,1223.93 1247.64,1220.8 C1242.93,1217.66 1230.11,1204.44 1219.15,1193.73 C1208.18,1183.02 1191.46,1162.92 1187.81,1162.39 C1184.15,1161.87 1194.61,1181.06 1199.2,1190.88 C1203.8,1200.7 1213.92,1215.43 1212.88,1215.95 C1211.83,1216.48 1201.23,1204.07 1193.5,1193.73 C1185.77,1183.39 1177.5,1171.56 1170.71,1159.54 C1163.92,1147.53 1161.32,1139.7 1156.47,1128.21 C1151.61,1116.71 1143.69,1100.78 1144.22,1096.87 Z"/></defs><use href="#b18" fill="none" stroke="#fff" stroke-width="4" stroke-linejoin="round"/><use href="#b18" fill="#68c070" stroke="#68c070" stroke-width="1.6" stroke-linejoin="round"/><defs><path id="b19" d="M1313.62,1253.99 C1314.14,1252.94 1320.67,1261.59 1325.58,1266.81 C1330.49,1272.03 1339.88,1287.18 1340.4,1282.48 C1340.92,1277.78 1334.02,1257.1 1328.43,1241.17 C1322.84,1225.24 1308.87,1198.72 1309.91,1195.58 C1310.96,1192.45 1325.51,1213.52 1334.13,1224.07 C1342.75,1234.62 1354.83,1255.22 1356.92,1253.13 C1359.01,1251.04 1349.71,1226.36 1345.53,1212.68 C1341.35,1198.99 1332.04,1180.06 1334.13,1178.49 C1336.22,1176.92 1349.35,1195.25 1356.92,1204.13 C1364.5,1213.01 1372.83,1227.45 1375.44,1226.92 C1378.05,1226.4 1372.21,1208.86 1371.17,1201.28 C1370.12,1193.71 1367.13,1185.61 1369.74,1185.61 C1372.36,1185.61 1380.45,1196.22 1385.41,1201.28 C1390.38,1206.35 1393.94,1212.46 1396.81,1213.25 C1399.68,1214.03 1399.52,1207.59 1401.08,1205.56 C1402.65,1203.52 1401.96,1200.57 1405.36,1202.14 C1408.75,1203.7 1414.38,1210.34 1419.6,1214.1 C1424.82,1217.86 1428.62,1219.25 1433.85,1222.65 C1439.07,1226.04 1442.87,1227.14 1448.09,1232.62 C1453.31,1238.11 1458.16,1245.77 1462.34,1252.56 C1466.51,1259.35 1468.53,1263.39 1470.88,1269.66 C1473.23,1275.93 1474.9,1281.01 1475.16,1286.75 C1475.42,1292.5 1472.31,1293.68 1472.31,1301 C1472.31,1308.31 1474.37,1318.8 1475.16,1326.64 C1475.94,1334.47 1477.89,1342.17 1476.58,1343.73 C1475.28,1345.3 1471.06,1338.06 1468.03,1335.19 C1465,1332.31 1461.36,1324.41 1460.06,1328.06 C1458.75,1331.72 1460.65,1347.03 1460.91,1355.13 C1461.17,1363.22 1463.83,1373.27 1461.48,1372.22 C1459.13,1371.18 1452.74,1356.64 1448.09,1349.43 C1443.44,1342.22 1437.43,1329.77 1436.13,1332.91 C1434.82,1336.04 1439.45,1354.88 1440.97,1366.52 C1442.48,1378.17 1447.78,1398.53 1444.39,1396.44 C1440.99,1394.35 1429.87,1368.55 1422.45,1355.13 C1415.03,1341.7 1406.02,1322.17 1403.93,1323.22 C1401.84,1324.26 1408.6,1347.56 1411.05,1360.83 C1413.51,1374.09 1420.46,1396.63 1417.32,1395.58 C1414.19,1394.54 1401.64,1368.4 1393.96,1355.13 C1386.28,1341.86 1378.31,1324.26 1375.44,1323.22 C1372.57,1322.17 1377.61,1341.91 1378.29,1349.43 C1378.97,1356.95 1382.54,1367.38 1379.15,1364.25 C1375.75,1361.11 1367.5,1344.98 1359.77,1332.34 C1352.04,1319.7 1343.77,1306.27 1336.98,1295.3 C1330.19,1284.33 1327.02,1280.08 1322.74,1272.51 C1318.45,1264.93 1313.1,1255.03 1313.62,1253.99 Z"/></defs><use href="#b19" fill="none" stroke="#fff" stroke-width="4" stroke-linejoin="round"/><use href="#b19" fill="#dc50b0" stroke="#dc50b0" stroke-width="1.6" stroke-linejoin="round"/><defs><path id="b20" d="M1482.85,1212.68 C1484.42,1212.16 1489.18,1219.63 1493.68,1224.07 C1498.17,1228.51 1505.26,1240.03 1507.35,1236.89 C1509.44,1233.76 1505.91,1216.38 1505.07,1206.98 C1504.24,1197.58 1500.7,1186.66 1502.79,1185.61 C1504.88,1184.57 1511.61,1195.54 1516.47,1201.28 C1521.32,1207.03 1526.68,1217.47 1529.29,1216.95 C1531.9,1216.43 1530.03,1203.66 1530.71,1198.43 C1531.39,1193.21 1530.38,1188.46 1532.99,1188.46 C1535.6,1188.46 1540.94,1195.04 1544.96,1198.43 C1548.98,1201.83 1552.58,1207.5 1554.93,1206.98 C1557.28,1206.46 1556.73,1198.56 1557.78,1195.58 C1558.82,1192.61 1557.75,1188.65 1560.63,1190.74 C1563.5,1192.83 1569.01,1201.65 1573.45,1206.98 C1577.89,1212.31 1582.49,1221.37 1584.84,1219.8 C1587.19,1218.23 1585.75,1203.92 1586.27,1198.43 C1586.79,1192.95 1585.34,1187.27 1587.69,1189.89 C1590.04,1192.5 1594.91,1204.32 1599.09,1212.68 C1603.27,1221.04 1606.31,1227.53 1610.48,1235.47 C1614.66,1243.41 1619.79,1257.03 1621.88,1255.98 C1623.97,1254.94 1621.51,1237.19 1621.88,1229.77 C1622.25,1222.36 1621.26,1213.44 1623.87,1215.53 C1626.49,1217.62 1631.79,1231.24 1636.13,1241.17 C1640.46,1251.09 1643.34,1260.78 1647.52,1269.66 C1651.7,1278.54 1655.52,1284.9 1658.92,1289.6 C1662.31,1294.3 1663.69,1290.6 1666.04,1295.3 C1668.39,1300 1670.01,1306.36 1671.74,1315.24 C1673.46,1324.12 1674.92,1334.85 1675.44,1343.73 C1675.96,1352.61 1676.05,1356.36 1674.59,1363.68 C1673.12,1370.99 1669.81,1377.45 1667.46,1383.62 C1665.11,1389.78 1664.38,1395.73 1661.77,1397.29 C1659.15,1398.86 1655.73,1393.21 1653.22,1392.17 C1650.71,1391.12 1649.4,1387.94 1648.09,1391.6 C1646.79,1395.25 1646.98,1405.63 1646.1,1412.11 C1645.21,1418.58 1645.34,1427.45 1643.25,1426.92 C1641.16,1426.4 1637.47,1414.33 1634.7,1409.26 C1631.93,1404.19 1630.24,1398.77 1628.15,1399.29 C1626.06,1399.81 1624.72,1408.19 1623.3,1412.11 C1621.89,1416.03 1622.81,1421.18 1620.46,1420.66 C1618.11,1420.13 1613.62,1412.29 1610.48,1409.26 C1607.35,1406.23 1605.19,1403.35 1603.36,1404.13 C1601.53,1404.91 1601.56,1410.76 1600.51,1413.53 C1599.47,1416.3 1600.28,1422.1 1597.66,1419.23 C1595.05,1416.36 1589.92,1404.29 1586.27,1397.86 C1582.61,1391.44 1579.55,1382.62 1577.72,1384.19 C1575.89,1385.75 1577.08,1399.99 1576.3,1406.41 C1575.51,1412.83 1576.58,1421.84 1573.45,1419.23 C1570.31,1416.62 1564.69,1404.96 1559.2,1392.17 C1553.72,1379.37 1546.67,1353.61 1543.53,1349.43 C1540.4,1345.25 1542.63,1363.63 1542.11,1369.37 C1541.59,1375.12 1543.82,1384.43 1540.68,1380.77 C1537.55,1377.11 1531.02,1360.92 1525.01,1349.43 C1519.01,1337.94 1513.14,1328.02 1507.92,1318.09 C1502.7,1308.17 1499.4,1301.83 1496.52,1295.3 C1493.65,1288.77 1492.51,1285.61 1492.25,1282.48 C1491.99,1279.34 1495.36,1284.21 1495.1,1278.21 C1494.84,1272.2 1492.65,1259.12 1490.83,1249.72 C1489,1240.31 1486.59,1233.71 1485.13,1226.92 C1483.67,1220.13 1481.28,1213.2 1482.85,1212.68 Z"/></defs><use href="#b20" fill="none" stroke="#fff" stroke-width="4" stroke-linejoin="round"/><use href="#b20" fill="#5533b8" stroke="#5533b8" stroke-width="1.6" stroke-linejoin="round"/><defs><path id="b21" d="M1433.85,1406.41 C1435.67,1406.41 1440.96,1416.19 1445.24,1423.5 C1449.53,1430.82 1456.16,1449.43 1457.21,1446.3 C1458.25,1443.16 1452.87,1421.3 1450.94,1406.41 C1449.01,1391.52 1445.1,1368.76 1446.67,1365.1 C1448.23,1361.44 1455.15,1379.42 1459.49,1386.47 C1463.82,1393.52 1468.12,1405.13 1470.31,1403.56 C1472.51,1401.99 1470.83,1384.29 1471.45,1377.92 C1472.08,1371.55 1471.75,1368.8 1473.73,1368.8 C1475.72,1368.8 1479.25,1374.79 1482.28,1377.92 C1485.31,1381.05 1488.43,1387.46 1490.26,1385.9 C1492.08,1384.33 1491.21,1373.19 1492.25,1369.37 C1493.3,1365.56 1493.08,1362.49 1495.95,1365.1 C1498.83,1367.71 1504.06,1377.87 1507.92,1383.62 C1511.79,1389.36 1515.05,1398.01 1517.04,1396.44 C1519.02,1394.87 1517.91,1380.71 1518.75,1375.07 C1519.58,1369.43 1518.88,1363.58 1521.6,1365.67 C1524.31,1367.76 1529.54,1377.95 1533.56,1386.47 C1537.58,1394.98 1540.14,1403.23 1543.53,1412.11 C1546.93,1420.99 1550.88,1436.99 1552.08,1434.9 C1553.28,1432.81 1550.35,1410.74 1550.09,1400.71 C1549.82,1390.68 1548.46,1379.15 1550.66,1380.2 C1552.85,1381.24 1558.4,1395.86 1562.05,1406.41 C1565.71,1416.96 1567.73,1426.78 1570.6,1437.75 C1573.47,1448.72 1575.37,1456.84 1577.72,1466.24 C1580.07,1475.64 1581.85,1482.24 1583.42,1489.03 C1584.99,1495.82 1586.27,1497.53 1586.27,1503.28 C1586.27,1509.02 1584.72,1513.58 1583.42,1520.37 C1582.11,1527.16 1581.5,1533.52 1579.15,1540.31 C1576.79,1547.1 1573.73,1551.92 1570.6,1557.41 C1567.46,1562.89 1565.19,1566.57 1562.05,1570.23 C1558.92,1573.88 1556.38,1574.74 1553.5,1577.35 C1550.63,1579.96 1550.04,1582.91 1546.38,1584.47 C1542.73,1586.04 1538,1585.9 1533.56,1585.9 C1529.12,1585.9 1525.82,1583.69 1522.17,1584.47 C1518.51,1585.26 1516.75,1590.95 1513.62,1590.17 C1510.48,1589.39 1507.79,1583.7 1505.07,1580.2 C1502.36,1576.7 1500.63,1570.82 1498.8,1571.08 C1496.98,1571.34 1496.46,1578.49 1495.1,1581.62 C1493.74,1584.76 1493.75,1591.57 1491.4,1588.18 C1489.05,1584.78 1485.52,1571.46 1482.28,1563.11 C1479.04,1554.75 1476.5,1544.42 1473.73,1542.59 C1470.96,1540.76 1470.05,1555.12 1467.18,1553.13 C1464.31,1551.15 1461.56,1539.86 1458.06,1531.77 C1454.56,1523.67 1450.7,1517.85 1448.09,1508.97 C1445.48,1500.09 1445.38,1493.78 1443.82,1483.33 C1442.25,1472.89 1441.11,1462.96 1439.54,1451.99 C1437.98,1441.03 1436.32,1431.86 1435.27,1423.5 C1434.23,1415.15 1432.02,1406.41 1433.85,1406.41 Z"/></defs><use href="#b21" fill="none" stroke="#fff" stroke-width="4" stroke-linejoin="round"/><use href="#b21" fill="#ab8eb0" stroke="#ab8eb0" stroke-width="1.6" stroke-linejoin="round"/><defs><path id="b22" d="M1681.88,1415.73 C1681.57,1409.46 1681.95,1407.07 1682.74,1402.05 C1683.52,1397.04 1684.59,1392.29 1686.15,1388.38 C1687.72,1384.46 1689.09,1381.94 1691.28,1380.68 C1693.48,1379.43 1695.93,1381.54 1698.12,1381.54 C1700.31,1381.54 1701.84,1383.5 1703.25,1380.68 C1704.66,1377.86 1704.62,1370.54 1705.81,1366.15 C1707,1361.77 1707.71,1355.81 1709.74,1356.75 C1711.78,1357.69 1714.2,1366.17 1716.92,1371.28 C1719.65,1376.39 1722.58,1384.93 1724.62,1384.62 C1726.65,1384.3 1726.62,1373.99 1728.03,1369.57 C1729.44,1365.15 1729.96,1358.32 1732.31,1360.51 C1734.66,1362.71 1737.72,1374.61 1740.85,1381.54 C1743.99,1388.46 1747.21,1397.66 1749.4,1398.29 C1751.6,1398.92 1751.41,1389.22 1752.82,1384.96 C1754.23,1380.7 1754.9,1373.48 1757.09,1375.04 C1759.29,1376.61 1761.97,1385.11 1764.79,1393.5 C1767.61,1401.9 1770.03,1414.02 1772.48,1420.85 C1774.92,1427.69 1776.4,1431.08 1778.12,1430.77 C1779.84,1430.46 1780.56,1422.53 1781.88,1419.15 C1783.2,1415.76 1783.58,1410.11 1785.3,1412.31 C1787.02,1414.5 1789.09,1421.4 1791.28,1431.11 C1793.48,1440.83 1795.38,1454.96 1797.26,1465.3 C1799.15,1475.64 1800.44,1480.31 1801.54,1487.52 C1802.64,1494.73 1803.56,1498.66 1803.25,1504.62 C1802.93,1510.57 1801.08,1513.11 1799.83,1520 C1798.58,1526.89 1797.66,1535.01 1796.41,1542.22 C1795.16,1549.43 1794.03,1555.18 1792.99,1559.32 C1791.96,1563.45 1792.02,1566.98 1790.77,1564.79 C1789.52,1562.59 1788.03,1555.97 1786.15,1547.35 C1784.27,1538.73 1782.24,1518.72 1780.51,1517.78 C1778.79,1516.84 1778.38,1531.47 1776.75,1542.22 C1775.12,1552.97 1773.19,1567.7 1771.62,1576.41 C1770.06,1585.12 1769.77,1592.88 1768.21,1589.74 C1766.64,1586.61 1765.11,1570.38 1763.08,1559.32 C1761.04,1548.25 1758.97,1530.97 1757.09,1529.4 C1755.21,1527.83 1754.61,1542.78 1752.82,1550.77 C1751.03,1558.76 1749.39,1573.62 1747.35,1572.99 C1745.31,1572.36 1743.9,1557.38 1741.71,1547.35 C1739.52,1537.32 1737.26,1519.23 1735.38,1518.29 C1733.5,1517.35 1733.02,1533.51 1731.45,1542.22 C1729.89,1550.93 1728.87,1567.38 1726.84,1565.81 C1724.8,1564.25 1723.16,1549.6 1720.34,1533.68 C1717.52,1517.75 1713.65,1483.68 1711.45,1478.97 C1709.26,1474.27 1709.63,1498.01 1708.38,1508.03 C1707.12,1518.06 1706.5,1535.24 1704.62,1533.68 C1702.74,1532.11 1700.56,1512.34 1698.12,1499.49 C1695.68,1486.64 1693.79,1475.19 1691.28,1463.59 C1688.77,1451.99 1686.17,1445.01 1684.44,1436.24 C1682.72,1427.46 1682.19,1421.99 1681.88,1415.73 Z"/></defs><use href="#b22" fill="none" stroke="#fff" stroke-width="4" stroke-linejoin="round"/><use href="#b22" fill="#5898be" stroke="#5898be" stroke-width="1.6" stroke-linejoin="round"/><defs><path id="b23" d="M418.23,1550.71 C418.49,1544.44 418.73,1540.91 421.08,1536.47 C423.43,1532.03 427.66,1528.85 431.05,1526.5 C434.45,1524.15 436.21,1527.04 439.6,1523.65 C443,1520.25 444.87,1508.5 449.57,1507.98 C454.27,1507.45 461.32,1518.45 465.24,1520.8 C469.16,1523.15 468.59,1524.61 470.94,1520.8 C473.29,1516.98 473.36,1500.78 478.06,1500 C482.76,1499.22 492.14,1513.23 496.58,1516.52 C501.02,1519.81 499.15,1519.25 502.28,1517.95 C505.41,1516.64 508.97,1509.4 513.68,1509.4 C518.38,1509.4 523.22,1515.08 527.92,1517.95 C532.62,1520.82 535.14,1524.55 539.32,1525.07 C543.49,1525.59 545.49,1519.49 550.71,1520.8 C555.94,1522.1 561.02,1528.28 567.81,1532.19 C574.6,1536.11 581.48,1537.99 587.75,1542.17 C594.02,1546.34 596.77,1550.02 601.99,1554.99 C607.22,1559.95 611.54,1564.27 616.24,1569.23 C620.94,1574.19 624.24,1576.83 627.64,1582.05 C631.03,1587.27 633.19,1591.98 634.76,1597.72 C636.32,1603.47 636.7,1607.38 636.18,1613.39 C635.66,1619.4 635.04,1625 631.91,1630.48 C628.77,1635.97 624.05,1638.87 619.09,1643.3 C614.13,1647.74 610.07,1652.35 604.84,1654.7 C599.62,1657.05 596.34,1654.82 590.6,1656.13 C584.85,1657.43 580.29,1660.67 573.5,1661.82 C566.71,1662.97 559.57,1662.65 553.56,1662.39 C547.55,1662.13 545.18,1660.09 540.74,1660.4 C536.3,1660.71 533.78,1665.15 529.34,1664.1 C524.91,1663.06 521.23,1657.47 516.52,1654.7 C511.82,1651.93 507.88,1649.68 503.7,1649 C499.53,1648.32 497.65,1652.04 493.73,1651 C489.81,1649.95 486.78,1647.59 482.34,1643.3 C477.9,1639.02 474.22,1629.99 469.52,1627.64 C464.81,1625.28 460.87,1632.57 456.7,1630.48 C452.52,1628.4 450.12,1621.98 446.72,1616.24 C443.33,1610.49 442.09,1604.37 438.18,1599.15 C434.26,1593.92 428.75,1592.97 425.36,1587.75 C421.96,1582.53 420.96,1577.45 419.66,1570.66 C418.35,1563.87 417.97,1556.98 418.23,1550.71 Z"/></defs><use href="#b23" fill="none" stroke="#fff" stroke-width="4" stroke-linejoin="round"/><use href="#b23" fill="#78c848" stroke="#78c848" stroke-width="1.6" stroke-linejoin="round"/><defs><path id="b24" d="M360.4,1653.28 C359.98,1648.16 361.26,1644.78 363.25,1645.3 C365.23,1645.82 367.67,1652.05 371.23,1656.13 C374.78,1660.2 378.44,1669.35 382.62,1667.52 C386.8,1665.69 390.47,1651.53 394.02,1646.15 C397.57,1640.77 398.6,1637.39 401.99,1638.18 C405.39,1638.96 408.77,1646.2 412.54,1650.43 C416.3,1654.66 419.11,1661.78 422.51,1661.25 C425.9,1660.73 428.18,1650.76 431.05,1647.58 C433.93,1644.39 435.04,1642.83 438.18,1643.87 C441.31,1644.92 444.75,1650.09 448.15,1653.28 C451.54,1656.46 452.52,1660.99 456.7,1661.25 C460.87,1661.51 466.24,1654.07 470.94,1654.7 C475.64,1655.33 477.64,1660.86 482.34,1664.67 C487.04,1668.49 491.88,1675.24 496.58,1675.5 C501.28,1675.76 504.32,1665.99 507.98,1666.1 C511.63,1666.2 513.39,1670.85 516.52,1676.07 C519.66,1681.29 522.2,1689.1 525.07,1694.59 C527.94,1700.07 529.06,1703.89 532.19,1705.98 C535.33,1708.07 539.29,1704.68 542.17,1705.98 C545.04,1707.29 546.4,1709.19 547.86,1713.11 C549.33,1717.02 550.14,1721.6 550.14,1727.35 C550.14,1733.1 549.85,1740.68 547.86,1744.44 C545.88,1748.21 542.97,1745.51 539.32,1747.86 C535.66,1750.21 532.1,1754.24 527.92,1757.26 C523.74,1760.29 521.75,1762.56 516.52,1764.39 C511.3,1766.22 505.18,1766.3 499.43,1767.24 C493.68,1768.18 490.41,1770.3 485.19,1769.52 C479.96,1768.73 475.64,1763.64 470.94,1762.96 C466.24,1762.28 463.46,1764.66 459.54,1765.81 C455.63,1766.96 453.23,1771.06 449.57,1769.23 C445.92,1767.4 443.26,1759.08 439.6,1755.84 C435.94,1752.6 434.07,1750.42 429.63,1751.57 C425.19,1752.72 419.04,1761.32 415.38,1762.11 C411.73,1762.89 412.04,1762.21 409.69,1755.84 C407.34,1749.47 404.91,1733.72 402.56,1727.35 C400.21,1720.98 400,1718.99 396.87,1721.08 C393.73,1723.17 389.65,1733.31 385.47,1738.75 C381.29,1744.18 376.79,1750.19 374.07,1750.71 C371.36,1751.23 371.7,1751.1 370.66,1741.6 C369.61,1732.09 369.32,1711.4 368.38,1698.86 C367.44,1686.32 366.99,1681.58 365.53,1673.22 C364.06,1664.86 360.82,1658.4 360.4,1653.28 Z"/></defs><use href="#b24" fill="none" stroke="#fff" stroke-width="4" stroke-linejoin="round"/><use href="#b24" fill="#558c6c" stroke="#558c6c" stroke-width="1.6" stroke-linejoin="round"/><defs><path id="b25" d="M663.49,1470.13 C666.34,1468.98 675.03,1476.35 679.03,1474.65 C683.03,1472.95 681.85,1464.76 685.3,1460.86 C688.75,1456.95 691.4,1456.09 697.84,1453.34 C704.27,1450.58 713.97,1446.5 720.4,1445.81 C726.84,1445.13 728.57,1450.26 732.94,1449.58 C737.3,1448.89 740.08,1442.51 744.22,1442.05 C748.35,1441.59 750.21,1444.31 755.5,1447.07 C760.79,1449.83 768.91,1457.56 773.05,1457.1 C777.19,1456.64 774.39,1445.02 778.06,1444.56 C781.74,1444.1 788.05,1450.45 793.11,1454.59 C798.16,1458.73 800.59,1463.22 805.64,1467.13 C810.7,1471.03 815.63,1471.99 820.69,1475.9 C825.74,1479.81 829.31,1483.38 833.22,1488.44 C837.13,1493.49 839.7,1497.5 842,1503.48 C844.29,1509.45 845.3,1514.59 845.76,1521.03 C846.22,1527.46 847.26,1534.9 844.5,1538.58 C841.75,1542.26 833.93,1535.11 830.71,1541.09 C827.5,1547.06 831.32,1567.04 826.95,1571.17 C822.59,1575.31 812.87,1561.58 806.9,1563.65 C800.92,1565.72 800.11,1580.39 794.36,1582.45 C788.62,1584.52 780.61,1573.55 775.56,1574.93 C770.5,1576.31 773.22,1590.66 766.78,1589.98 C760.35,1589.29 746.89,1572.78 740.46,1571.17 C734.02,1569.56 736.74,1581.66 731.68,1581.2 C726.63,1580.74 719.54,1573.26 712.88,1568.66 C706.21,1564.07 701.3,1561.19 695.33,1556.13 C689.35,1551.07 685.11,1547.06 680.29,1541.09 C675.46,1535.11 671.53,1531.35 669,1523.54 C666.48,1515.72 667.51,1506.28 666.5,1498.46 C665.49,1490.65 664.04,1486.11 663.49,1480.91 C662.94,1475.72 660.64,1471.28 663.49,1470.13 Z"/></defs><use href="#b25" fill="none" stroke="#fff" stroke-width="4" stroke-linejoin="round"/><use href="#b25" fill="#c5cf4a" stroke="#c5cf4a" stroke-width="1.6" stroke-linejoin="round"/><defs><path id="b26" d="M867.14,1547.14 C867.93,1541.9 869.98,1538.62 872.86,1532.86 C875.74,1527.1 879.19,1520.43 882.86,1515.71 C886.52,1511 889.45,1511.6 892.86,1507.14 C896.26,1502.69 897.5,1494.47 901.43,1491.43 C905.36,1488.39 910.1,1492.93 914.29,1490.57 C918.48,1488.21 919.31,1480.67 924.29,1478.57 C929.26,1476.48 936.45,1480.61 941.43,1479.14 C946.4,1477.68 947.76,1472.77 951.43,1470.57 C955.1,1468.37 957.24,1466.72 961.43,1467.14 C965.62,1467.56 970.62,1471.55 974.29,1472.86 C977.95,1474.17 979.33,1475.96 981.43,1474.29 C983.52,1472.61 982.83,1465.13 985.71,1463.71 C988.6,1462.3 991.9,1463.85 997.14,1466.57 C1002.38,1469.3 1009.05,1475.85 1014.29,1478.57 C1019.52,1481.3 1021.52,1479.07 1025.71,1481.43 C1029.9,1483.79 1033.48,1486.71 1037.14,1491.43 C1040.81,1496.14 1043.2,1500.6 1045.71,1507.14 C1048.23,1513.69 1050.07,1519.29 1050.86,1527.14 C1051.64,1535 1051.73,1543.71 1050,1550 C1048.27,1556.29 1044.05,1557.24 1041.43,1561.43 C1038.81,1565.62 1037.29,1568.4 1035.71,1572.86 C1034.14,1577.31 1034.95,1582.31 1032.86,1585.71 C1030.76,1589.12 1027.17,1588.02 1024.29,1591.43 C1021.4,1594.83 1021.07,1601.82 1017.14,1604.29 C1013.21,1606.75 1007.57,1601.98 1002.86,1604.86 C998.14,1607.74 996.4,1617.75 991.43,1620 C986.45,1622.25 981.48,1615.94 975.71,1617.14 C969.95,1618.35 966.02,1625.68 960,1626.57 C953.98,1627.46 949.14,1622.68 942.86,1622 C936.57,1621.32 931.48,1623.75 925.71,1622.86 C919.95,1621.97 916.14,1618.03 911.43,1617.14 C906.71,1616.25 904.71,1620.88 900,1618 C895.29,1615.12 890.69,1608.66 885.71,1601.43 C880.74,1594.2 876,1585.9 872.86,1578.57 C869.71,1571.24 869.62,1567.19 868.57,1561.43 C867.52,1555.67 866.36,1552.38 867.14,1547.14 Z"/></defs><use href="#b26" fill="none" stroke="#fff" stroke-width="4" stroke-linejoin="round"/><use href="#b26" fill="#adfa52" stroke="#adfa52" stroke-width="1.6" stroke-linejoin="round"/><defs><path id="b27" d="M839.43,1741.43 C839.69,1734.62 840.13,1726.43 842.86,1718.57 C845.58,1710.71 850.88,1704.86 854.29,1698.57 C857.69,1692.29 858.02,1687.17 861.43,1684.29 C864.83,1681.4 868.14,1686.79 872.86,1682.86 C877.57,1678.93 881.12,1667.57 887.14,1662.86 C893.17,1658.14 900.21,1659.5 905.71,1657.14 C911.21,1654.79 912.95,1650.68 917.14,1650 C921.33,1649.32 925.17,1655.79 928.57,1653.43 C931.98,1651.07 933.1,1640.91 935.71,1637.14 C938.33,1633.37 938.4,1631.97 942.86,1632.86 C947.31,1633.75 955.29,1642.26 960,1642 C964.71,1641.74 965.69,1634.15 968.57,1631.43 C971.45,1628.7 971.26,1625.2 975.71,1627.14 C980.17,1629.08 988.67,1641.48 992.86,1642 C997.05,1642.52 996.48,1632.99 998.57,1630 C1000.67,1627.01 1001.4,1624.14 1004.29,1625.71 C1007.17,1627.29 1010.88,1633.07 1014.29,1638.57 C1017.69,1644.07 1019.82,1650.21 1022.86,1655.71 C1025.9,1661.21 1028.76,1669.62 1030.86,1668.57 C1032.95,1667.52 1032.87,1655.4 1034.29,1650 C1035.7,1644.6 1036.74,1638.62 1038.57,1639.14 C1040.4,1639.67 1042.56,1646.68 1044.29,1652.86 C1046.01,1659.04 1047.74,1663.95 1048,1672.86 C1048.26,1681.76 1046.92,1690.95 1045.71,1701.43 C1044.51,1711.9 1043.26,1721.62 1041.43,1730 C1039.6,1738.38 1037.55,1743.06 1035.71,1747.14 C1033.88,1751.23 1034.05,1751.34 1031.43,1752.29 C1028.81,1753.23 1025.36,1749.04 1021.43,1752.29 C1017.5,1755.53 1014.45,1765.44 1010,1770 C1005.55,1774.56 1001.6,1774 997.14,1777.14 C992.69,1780.29 990.43,1785.05 985.71,1787.14 C981,1789.24 977.19,1785.69 971.43,1788.57 C965.67,1791.45 958.74,1800.5 954.29,1802.86 C949.83,1805.21 950.02,1803 947.14,1801.43 C944.26,1799.86 941.98,1794.29 938.57,1794.29 C935.17,1794.29 931.98,1798.65 928.57,1801.43 C925.17,1804.2 923.14,1809.17 920,1809.43 C916.86,1809.69 915.36,1803.7 911.43,1802.86 C907.5,1802.02 904.07,1806.43 898.57,1804.86 C893.07,1803.29 887.19,1796.07 881.43,1794.29 C875.67,1792.5 871.6,1796.98 867.14,1795.14 C862.69,1793.31 860.55,1789.42 857.14,1784.29 C853.74,1779.15 851.45,1772.38 848.57,1767.14 C845.69,1761.9 843.1,1760.43 841.43,1755.71 C839.75,1751 839.17,1748.24 839.43,1741.43 Z"/></defs><use href="#b27" fill="none" stroke="#fff" stroke-width="4" stroke-linejoin="round"/><use href="#b27" fill="#84e450" stroke="#84e450" stroke-width="1.6" stroke-linejoin="round"/><defs><path id="b28" d="M1066.29,1612.86 C1066.7,1607.2 1066.84,1604.86 1068.57,1604.86 C1070.3,1604.86 1073.36,1610.6 1075.71,1612.86 C1078.07,1615.11 1079.07,1618.71 1081.43,1617.14 C1083.79,1615.57 1086.48,1609.79 1088.57,1604.29 C1090.67,1598.79 1090.24,1591.33 1092.86,1587.14 C1095.48,1582.95 1098.93,1583.52 1102.86,1581.43 C1106.79,1579.33 1111.14,1579.12 1114.29,1575.71 C1117.43,1572.31 1116.86,1565.37 1120,1562.86 C1123.14,1560.34 1128.02,1563.57 1131.43,1562 C1134.83,1560.43 1135.95,1557.01 1138.57,1554.29 C1141.19,1551.56 1141.52,1546.88 1145.71,1547.14 C1149.9,1547.4 1157.5,1556.24 1161.43,1555.71 C1165.36,1555.19 1164.79,1547.17 1167.14,1544.29 C1169.5,1541.4 1170.88,1538.95 1174.29,1540 C1177.69,1541.05 1182.05,1546.18 1185.71,1550 C1189.38,1553.82 1191.4,1559.91 1194.29,1560.86 C1197.17,1561.8 1198.02,1553.47 1201.43,1555.14 C1204.83,1556.82 1208.93,1565.7 1212.86,1570 C1216.79,1574.3 1220.08,1574.38 1222.86,1578.57 C1225.63,1582.76 1226.85,1584.48 1228,1592.86 C1229.15,1601.24 1229.04,1613.81 1229.14,1624.29 C1229.25,1634.76 1230.25,1642.93 1228.57,1650 C1226.9,1657.07 1222.36,1657.62 1220,1662.86 C1217.64,1668.1 1217.29,1673.6 1215.71,1678.57 C1214.14,1683.55 1214.05,1686.86 1211.43,1690 C1208.81,1693.14 1205.1,1692.31 1201.43,1695.71 C1197.76,1699.12 1195.36,1704.9 1191.43,1708.57 C1187.5,1712.24 1184.19,1712.05 1180,1715.71 C1175.81,1719.38 1172.76,1726.21 1168.57,1728.57 C1164.38,1730.93 1161.86,1727.26 1157.14,1728.57 C1152.43,1729.88 1148.62,1733.88 1142.86,1735.71 C1137.1,1737.55 1131.21,1740.04 1125.71,1738.57 C1120.21,1737.1 1116.52,1727.71 1112.86,1727.71 C1109.19,1727.71 1108.18,1735.27 1105.71,1738.57 C1103.25,1741.87 1102.05,1747.29 1099.43,1745.71 C1096.81,1744.14 1094.57,1737.33 1091.43,1730 C1088.29,1722.67 1085.43,1708.33 1082.29,1705.71 C1079.14,1703.1 1076.8,1713.36 1074.29,1715.71 C1071.77,1718.07 1070.4,1722.24 1068.57,1718.57 C1066.74,1714.9 1064.7,1705.67 1064.29,1695.71 C1063.87,1685.76 1065.92,1675.29 1066.29,1664.29 C1066.65,1653.29 1066.29,1645.14 1066.29,1635.71 C1066.29,1626.29 1065.87,1618.51 1066.29,1612.86 Z"/></defs><use href="#b28" fill="none" stroke="#fff" stroke-width="4" stroke-linejoin="round"/><use href="#b28" fill="#767a50" stroke="#767a50" stroke-width="1.6" stroke-linejoin="round"/><defs><path id="b29" d="M1229.14,1601.43 C1228.99,1593.05 1228.01,1587.95 1230,1584.29 C1231.99,1580.62 1237.38,1587.19 1240,1581.43 C1242.62,1575.67 1242.98,1561.24 1244.29,1552.86 C1245.6,1544.48 1244.79,1539.38 1247.14,1535.71 C1249.5,1532.05 1253.74,1536.52 1257.14,1532.86 C1260.55,1529.19 1262.05,1521.21 1265.71,1515.71 C1269.38,1510.21 1272.95,1505.74 1277.14,1502.86 C1281.33,1499.98 1285.43,1502.62 1288.57,1500 C1291.71,1497.38 1292.82,1492.08 1294.29,1488.57 C1295.75,1485.06 1293.43,1480.49 1296.57,1480.86 C1299.71,1481.22 1307.4,1489.84 1311.43,1490.57 C1315.46,1491.3 1315.17,1485.22 1318.57,1484.86 C1321.98,1484.49 1326.33,1489.3 1330,1488.57 C1333.67,1487.84 1335.17,1480.33 1338.57,1480.86 C1341.98,1481.38 1344.64,1487.13 1348.57,1491.43 C1352.5,1495.72 1356.33,1502.45 1360,1504.29 C1363.67,1506.12 1365.43,1499.86 1368.57,1501.43 C1371.71,1503 1373.48,1506.05 1377.14,1512.86 C1380.81,1519.67 1384.9,1529.67 1388.57,1538.57 C1392.24,1547.48 1395.05,1553.05 1397.14,1561.43 C1399.24,1569.81 1399.21,1575.9 1400,1584.29 C1400.79,1592.67 1401.43,1598.76 1401.43,1607.14 C1401.43,1615.52 1400.79,1624.66 1400,1630 C1399.21,1635.34 1398.56,1635.87 1397.14,1636.29 C1395.73,1636.7 1394.12,1630.3 1392.29,1632.29 C1390.45,1634.28 1389.13,1639.18 1387.14,1647.14 C1385.15,1655.1 1383.26,1668.12 1381.43,1675.71 C1379.6,1683.31 1378.98,1688.05 1377.14,1688.57 C1375.31,1689.1 1373.42,1681.35 1371.43,1678.57 C1369.44,1675.8 1368.38,1670.29 1366.29,1673.43 C1364.19,1676.57 1362.2,1687.96 1360,1695.71 C1357.8,1703.47 1356.12,1710.74 1354.29,1715.71 C1352.45,1720.69 1351.57,1723.9 1350,1722.86 C1348.43,1721.81 1347.44,1715.5 1345.71,1710 C1343.99,1704.5 1343.19,1691.29 1340.57,1692.86 C1337.95,1694.43 1334.41,1710.98 1331.43,1718.57 C1328.44,1726.17 1326.64,1734.29 1324.29,1734.29 C1321.93,1734.29 1320.51,1723.81 1318.57,1718.57 C1316.63,1713.33 1316.07,1704.67 1313.71,1705.71 C1311.36,1706.76 1308.23,1719.31 1305.71,1724.29 C1303.2,1729.26 1302.36,1733.9 1300,1732.86 C1297.64,1731.81 1294.95,1721.98 1292.86,1718.57 C1290.76,1715.17 1290.93,1713.76 1288.57,1714.29 C1286.21,1714.81 1284.19,1722.74 1280,1721.43 C1275.81,1720.12 1270.95,1712.38 1265.71,1707.14 C1260.48,1701.9 1256.14,1698.1 1251.43,1692.86 C1246.71,1687.62 1243.14,1685.38 1240,1678.57 C1236.86,1671.76 1235.96,1664.62 1234.29,1655.71 C1232.61,1646.81 1231.8,1639.95 1230.86,1630 C1229.91,1620.05 1229.3,1609.81 1229.14,1601.43 Z"/></defs><use href="#b29" fill="none" stroke="#fff" stroke-width="4" stroke-linejoin="round"/><use href="#b29" fill="#ae3484" stroke="#ae3484" stroke-width="1.6" stroke-linejoin="round"/><circle cx="1092.5" cy="1252.6" r="936.6" fill="none" stroke="#2c2c2c" stroke-width="2.6"/><circle cx="1092.5" cy="1252.6" r="936.6" fill="none" stroke="#b0b0b0" stroke-width="0.6"/><circle cx="1755.6" cy="590.1" r="10.8" fill="#fff" stroke="#6a6a6a" stroke-width="1.2"/><circle cx="1755.6" cy="590.1" r="9.3" fill="#00007f"/><circle cx="2029.3" cy="1252.5" r="10.8" fill="#fff" stroke="#6a6a6a" stroke-width="1.2"/><circle cx="2029.3" cy="1252.5" r="9.3" fill="#00007f"/><circle cx="1092.9" cy="1252.7" r="10.8" fill="#fff" stroke="#6a6a6a" stroke-width="1.2"/><circle cx="1092.9" cy="1252.7" r="9.3" fill="#00007f"/></g><g clip-path="url(#cv)"><rect x="2295" y="309" width="498" height="827" fill="#424242" filter="url(#sh)"/><rect x="2295" y="309" width="498" height="827" fill="#424242" stroke="#2c2c2c" stroke-width="1.5"/><rect x="2296" y="310" width="496" height="50" fill="#373737"/><line x1="2295" y1="359.5" x2="2790" y2="359.5" stroke="#5c5c5c" stroke-width="1.5" /><rect x="2380" y="316" width="102" height="45" fill="#424242" stroke="#4e4e4e" stroke-width="1.2"/><rect x="2381" y="357" width="100" height="5" fill="#424242"/><circle cx="2316" cy="336.5" r="12" fill="#8c8c8c"/><path d="M2310.5,331 l11,11 m0,-11 l-11,11" fill="none" stroke="#1e1e1e" stroke-width="2.4"/><path d="M2335.5,327 l6,9 l-6,9 M2343.5,327 l6,9 l-6,9" fill="none" stroke="#e0e0e0" stroke-width="1.8"/><line x1="2361.8" y1="321" x2="2361.8" y2="350" stroke="#7c7c7c" stroke-width="2" /><line x1="2370.3" y1="321" x2="2370.3" y2="350" stroke="#7c7c7c" stroke-width="2" /><path d="M2390.5,334 l5.5,-5.5 l5.5,5.5 M2390.5,340.5 l5.5,5.5 l5.5,-5.5" fill="none" stroke="#f0f0f0" stroke-width="2"/><text x="2410.5" y="346.5" font-size="23.5" fill="#fff" textLength="53" lengthAdjust="spacingAndGlyphs">Color</text><line x1="2747" y1="324.7" x2="2773" y2="324.7" stroke="#c8c8c8" stroke-width="2" /><line x1="2747" y1="332.4" x2="2773" y2="332.4" stroke="#c8c8c8" stroke-width="2" /><line x1="2747" y1="340.1" x2="2773" y2="340.1" stroke="#c8c8c8" stroke-width="2" /><line x1="2747" y1="347.8" x2="2773" y2="347.8" stroke="#c8c8c8" stroke-width="2" /><path d="M2325,417 V408 a8,8 0 0 1 8,-8 H2340" fill="none" stroke="#fff" stroke-width="3"/><path d="M2337,393 L2345,400 L2337,407 Z" fill="#fff"/><path d="M2319,414 H2331 L2325,422 Z" fill="#fff"/><path d="M2349,393 H2407 V450.5 H2349 Z M2365,409 V435 H2391 V409 Z" fill="#fff" fill-rule="evenodd"/><line x1="2392.5" y1="408" x2="2404.5" y2="395.5" stroke="#e93323" stroke-width="3.5" /><rect x="2317" y="425" width="58" height="58" fill="#cccccc" stroke="#fff" stroke-width="2"/><text x="2426" y="423.7" font-size="23" fill="#fff">R</text><rect x="2458" y="407" width="220" height="14" fill="url(#gR)"/><circle cx="2627" cy="414" r="12.5" fill="#d2d2d2" stroke="#fff" stroke-width="1"/><circle cx="2627" cy="414" r="11.2" fill="#d2d2d2" stroke="#141414" stroke-width="1.8"/><rect x="2686" y="392" width="84" height="44" fill="#323232"/><text x="2694.5" y="423.7" font-size="23" fill="#fff" textLength="38" lengthAdjust="spacingAndGlyphs">204</text><text x="2426" y="475" font-size="23" fill="#fff">G</text><rect x="2458" y="459" width="220" height="14" fill="url(#gG)"/><circle cx="2627" cy="466" r="12.5" fill="#d2d2d2" stroke="#fff" stroke-width="1"/><circle cx="2627" cy="466" r="11.2" fill="#d2d2d2" stroke="#141414" stroke-width="1.8"/><rect x="2686" y="444" width="84" height="44" fill="#323232"/><text x="2694.5" y="475" font-size="23" fill="#fff" textLength="38" lengthAdjust="spacingAndGlyphs">204</text><text x="2426" y="527" font-size="23" fill="#fff">B</text><rect x="2458" y="511" width="220" height="14" fill="url(#gB)"/><circle cx="2627" cy="518" r="12.5" fill="#d2d2d2" stroke="#fff" stroke-width="1"/><circle cx="2627" cy="518" r="11.2" fill="#d2d2d2" stroke="#141414" stroke-width="1.8"/><rect x="2686" y="496" width="84" height="44" fill="#323232"/><text x="2694.5" y="527" font-size="23" fill="#fff" textLength="38" lengthAdjust="spacingAndGlyphs">204</text><circle cx="2336" cy="580" r="18.5" fill="#5c5c5c" stroke="#c4c4c4" stroke-width="1.5"/><path d="M2326,590 L2337,578 L2341,582 L2329,593 L2325.5,594 Z" fill="#fff"/><path d="M2336,574 L2345,583" fill="none" stroke="#fff" stroke-width="3"/><path d="M2340,577 L2344,570 a3.5,3.5 0 0 1 5,5 L2343,580 Z" fill="#fff"/><circle cx="2380" cy="580" r="18.5" fill="none" stroke="#fff" stroke-width="2"/><rect x="2419" y="563" width="44" height="33.5" fill="#fff"/><line x1="2419" y1="596" x2="2463" y2="563" stroke="#e93323" stroke-width="3.5" /><rect x="2468" y="562" width="46" height="36" fill="#000" stroke="#fff" stroke-width="2.5"/><rect x="2516.5" y="561" width="48.5" height="37.5" fill="#fff"/><text x="2622" y="589.5" font-size="23" fill="#fff">#</text><rect x="2646" y="560" width="144" height="40" fill="#323232"/><text x="2654" y="589.5" font-size="23" fill="#fff" textLength="86" lengthAdjust="spacingAndGlyphs">CCCCCC</text><foreignObject x="2324.9" y="620.9" width="438.8" height="438.8"><div style="width:438.8px;height:438.8px;border-radius:50%;background:conic-gradient(from 90deg,#ea3323,#e93af7 16.67%,#0a1ef5 33.33%,#73fbfd 50%,#75f94c 66.67%,#fdfd54 83.33%,#ea3323);-webkit-mask:radial-gradient(circle closest-side,transparent 175.4px,#000 176.6px,#000 218.4px,transparent 219.4px);mask:radial-gradient(circle closest-side,transparent 175.4px,#000 176.6px,#000 218.4px,transparent 219.4px)"></div></foreignObject><rect x="2432.6" y="727.7" width="223.4" height="224.3" fill="url(#svH)" rx="2"/><rect x="2432.6" y="727.7" width="223.4" height="224.3" fill="url(#svV)" rx="2"/><rect x="2427.5" y="770" width="13" height="13" fill="none" stroke="#fff" stroke-width="1.2"/><rect x="2429" y="771.5" width="10" height="10" fill="none" stroke="#222" stroke-width="1.2"/><rect x="2729.5" y="835.5" width="13" height="13" fill="none" stroke="#fff" stroke-width="1.2"/><rect x="2731" y="837" width="10" height="10" fill="none" stroke="#7a2a20" stroke-width="1.2"/><text x="2339" y="1109.7" font-size="23" fill="#fff" textLength="77.5" lengthAdjust="spacingAndGlyphs">Opacity</text><rect x="2434.8" y="1095" width="222" height="10" fill="#2f2f2f" rx="5"/><circle cx="2644" cy="1100" r="13.7" fill="#d4d4d4"/><rect x="2666" y="1080" width="104" height="39.6" fill="#323232"/><text x="2674.8" y="1109.7" font-size="23" fill="#fff" textLength="50.5" lengthAdjust="spacingAndGlyphs">100%</text><rect x="2097.3" y="1207.4" width="609.2" height="267.6" fill="#424242" filter="url(#sh)"/><rect x="2097.3" y="1207.4" width="609.2" height="267.6" fill="#424242" stroke="#2c2c2c" stroke-width="1.5"/><rect x="2098.3" y="1208.4" width="607.2" height="49" fill="#373737"/><line x1="2097.3" y1="1257.5" x2="2703.5" y2="1257.5" stroke="#5c5c5c" stroke-width="1.5" /><rect x="2182" y="1213.5" width="189.6" height="46" fill="#424242" stroke="#4e4e4e" stroke-width="1.2"/><rect x="2183" y="1255" width="187.6" height="5" fill="#424242"/><circle cx="2118" cy="1234" r="12" fill="#8c8c8c"/><path d="M2112.5,1228.5 l11,11 m0,-11 l-11,11" fill="none" stroke="#1e1e1e" stroke-width="2.4"/><path d="M2137.5,1225 l6,9 l-6,9 M2145.5,1225 l6,9 l-6,9" fill="none" stroke="#e0e0e0" stroke-width="1.8"/><line x1="2164.8" y1="1219" x2="2164.8" y2="1248" stroke="#7c7c7c" stroke-width="2" /><line x1="2173.3" y1="1219" x2="2173.3" y2="1248" stroke="#7c7c7c" stroke-width="2" /><text x="2212.4" y="1244.8" font-size="23.5" fill="#fff" textLength="141" lengthAdjust="spacingAndGlyphs">Shape Effects</text><line x1="2661" y1="1222.7" x2="2687" y2="1222.7" stroke="#c8c8c8" stroke-width="2" /><line x1="2661" y1="1230.3" x2="2687" y2="1230.3" stroke="#c8c8c8" stroke-width="2" /><line x1="2661" y1="1237.9" x2="2687" y2="1237.9" stroke="#c8c8c8" stroke-width="2" /><line x1="2661" y1="1245.5" x2="2687" y2="1245.5" stroke="#c8c8c8" stroke-width="2" /><text x="2170.5" y="1307.6" font-size="23" fill="#fff" textLength="61.5" lengthAdjust="spacingAndGlyphs">Styles</text><rect x="2242" y="1278.3" width="434" height="39.7" fill="url(#dd)" rx="4"/><text x="2254.3" y="1306.9" font-size="23" fill="#fff" textLength="78" lengthAdjust="spacingAndGlyphs">Custom</text><path d="M2642.5,1293.15 l11.5,11.5 l11.5,-11.5" fill="none" stroke="#f4f4f4" stroke-width="3"/><rect x="2119" y="1340" width="529" height="135" fill="#333333"/><rect x="2119" y="1340" width="529" height="52" fill="#353535"/><rect x="2118" y="1392" width="530" height="53.5" fill="#3a64d2"/><path d="M2140,1355 L2156.5,1365.5 L2140,1376 Z" fill="#e8e8e8"/><polygon points="2191.8,1354 2193.92,1358.58 2198.05,1355.67 2197.6,1360.7 2202.63,1360.25 2199.72,1364.38 2204.3,1366.5 2199.72,1368.62 2202.63,1372.75 2197.6,1372.3 2198.05,1377.33 2193.92,1374.42 2191.8,1379 2189.68,1374.42 2185.55,1377.33 2186,1372.3 2180.97,1372.75 2183.88,1368.62 2179.3,1366.5 2183.88,1364.38 2180.97,1360.25 2186,1360.7 2185.55,1355.67 2189.68,1358.58" fill="none" stroke="#e8e8e8" stroke-width="1.1"/><circle cx="2191.8" cy="1366.5" r="5.5" fill="none" stroke="#e8e8e8" stroke-width="1.1" stroke-dasharray="1.5 1.2"/><text x="2220.8" y="1376.2" font-size="23" fill="#fff" textLength="116.5" lengthAdjust="spacingAndGlyphs">Noise Wave</text><path d="M2489.3,1367 q14.5,-17 29,0 q-14.5,17 -29,0 Z" fill="none" stroke="#fff" stroke-width="2.2"/><circle cx="2503.8" cy="1367" r="4.6" fill="none" stroke="#fff" stroke-width="2.2"/><path d="M2548.5,1370 a10.5,10.5 0 1 0 10.5,-10.5 h-3" fill="none" stroke="#fff" stroke-width="2.8"/><path d="M2561,1365 l-8,-5.5 l8,-6.5" fill="none" stroke="#fff" stroke-width="2.8" stroke-linejoin="round"/><circle cx="2607.8" cy="1367" r="15" fill="none" stroke="#fff" stroke-width="2.2"/><path d="M2601.8,1361 l12,12 m0,-12 l-12,12" fill="none" stroke="#fff" stroke-width="2.2"/><path d="M2136,1411 H2156 L2146,1428 Z" fill="#e0e0e0"/><polygon points="2191.8,1407 2193.92,1411.58 2198.05,1408.67 2197.6,1413.7 2202.63,1413.25 2199.72,1417.38 2204.3,1419.5 2199.72,1421.62 2202.63,1425.75 2197.6,1425.3 2198.05,1430.33 2193.92,1427.42 2191.8,1432 2189.68,1427.42 2185.55,1430.33 2186,1425.3 2180.97,1425.75 2183.88,1421.62 2179.3,1419.5 2183.88,1417.38 2180.97,1413.25 2186,1413.7 2185.55,1408.67 2189.68,1411.58" fill="none" stroke="#e8e8e8" stroke-width="1.1"/><circle cx="2191.8" cy="1419.5" r="5.5" fill="none" stroke="#e8e8e8" stroke-width="1.1" stroke-dasharray="1.5 1.2"/><text x="2220.8" y="1427.6" font-size="23" fill="#fff" textLength="46" lengthAdjust="spacingAndGlyphs">Twirl</text><path d="M2489.3,1419 q14.5,-17 29,0 q-14.5,17 -29,0 Z" fill="none" stroke="#fff" stroke-width="2.2"/><circle cx="2503.8" cy="1419" r="4.6" fill="none" stroke="#fff" stroke-width="2.2"/><path d="M2548.5,1422 a10.5,10.5 0 1 0 10.5,-10.5 h-3" fill="none" stroke="#fff" stroke-width="2.8"/><path d="M2561,1417 l-8,-5.5 l8,-6.5" fill="none" stroke="#fff" stroke-width="2.8" stroke-linejoin="round"/><circle cx="2607.8" cy="1419" r="15" fill="none" stroke="#fff" stroke-width="2.2"/><path d="M2601.8,1413 l12,12 m0,-12 l-12,12" fill="none" stroke="#fff" stroke-width="2.2"/><rect x="2652" y="1337" width="24" height="138" fill="#4a4a4a" rx="3"/><rect x="2654" y="1339" width="20" height="136" fill="#8a8a8a" rx="9"/><path d="M1993.3,1462 H2122.8 L2145.7,1438.5 L2169.3,1462 H2754 V2144.8 H1993.3 Z" fill="#424242" filter="url(#sh2)"/><path d="M1993.3,1462 H2122.8 L2145.7,1438.5 L2169.3,1462 H2754 V2144.8 H1993.3 Z" fill="#5e5e5e" stroke="#2a2a2a" stroke-width="1.5"/><path d="M1997.8,1466.5 H2125 L2145.7,1444 L2167,1466.5 H2749.5 V2140.3 H1997.8 Z" fill="#424242"/><text x="2118" y="1516" font-size="23" fill="#fff" textLength="50" lengthAdjust="spacingAndGlyphs">Style</text><rect x="2178" y="1486" width="315.5" height="39.5" fill="url(#dd)" rx="4"/><text x="2190.3" y="1515.5" font-size="23" fill="#fff" textLength="78" lengthAdjust="spacingAndGlyphs">Custom</text><path d="M2460,1500.75 l11.5,11.5 l11.5,-11.5" fill="none" stroke="#f4f4f4" stroke-width="3"/><path d="M2670.25,1502.82 L2670.25,1508.58 L2665.87,1508.99 L2664.57,1512.12 L2667.38,1515.51 L2663.31,1519.58 L2659.92,1516.77 L2656.79,1518.07 L2656.38,1522.45 L2650.62,1522.45 L2650.21,1518.07 L2647.08,1516.77 L2643.69,1519.58 L2639.62,1515.51 L2642.43,1512.12 L2641.13,1508.99 L2636.75,1508.58 L2636.75,1502.82 L2641.13,1502.41 L2642.43,1499.28 L2639.62,1495.89 L2643.69,1491.82 L2647.08,1494.63 L2650.21,1493.33 L2650.62,1488.95 L2656.38,1488.95 L2656.79,1493.33 L2659.92,1494.63 L2663.31,1491.82 L2667.38,1495.89 L2664.57,1499.28 L2665.87,1502.41 Z" fill="none" stroke="#fff" stroke-width="2.6" stroke-linejoin="round"/><circle cx="2653.5" cy="1505.7" r="5" fill="none" stroke="#fff" stroke-width="2.6"/><circle cx="2713.3" cy="1505.7" r="17" fill="none" stroke="#fff" stroke-width="2.4"/><circle cx="2713.3" cy="1505.7" r="3.2" fill="#fff"/><line x1="2014.3" y1="1549.5" x2="2733.5" y2="1549.5" stroke="#2c2c2c" stroke-width="2" /><text x="2120" y="1603.6" font-size="23" fill="#fff" textLength="46" lengthAdjust="spacingAndGlyphs">Twirl</text><rect x="2178" y="1574.3" width="555.5" height="39.2" fill="url(#dd)" rx="4"/><text x="2190.3" y="1603" font-size="23" fill="#fff" textLength="78" lengthAdjust="spacingAndGlyphs">Gamma</text><path d="M2700,1588.9 l11.5,11.5 l11.5,-11.5" fill="none" stroke="#f4f4f4" stroke-width="3"/><text x="2092.4" y="1674.3" font-size="23" fill="#fff" textLength="75" lengthAdjust="spacingAndGlyphs">Stretch</text><rect x="2178" y="1643.8" width="555.5" height="40" fill="url(#dd)" rx="4"/><text x="2190.3" y="1673.5" font-size="23" fill="#fff" textLength="53.5" lengthAdjust="spacingAndGlyphs">None</text><path d="M2700,1658.8 l11.5,11.5 l11.5,-11.5" fill="none" stroke="#f4f4f4" stroke-width="3"/><text x="2025.7" y="1757.7" font-size="23" fill="#fff" textLength="81" lengthAdjust="spacingAndGlyphs">Amount</text><rect x="2582" y="1722" width="120" height="39.8" fill="#323232"/><text x="2590.3" y="1751.6" font-size="22" fill="#fff" textLength="33.5" lengthAdjust="spacingAndGlyphs">45°</text><text x="2706" y="1749" font-size="22" fill="#fff">°</text><rect x="2014.3" y="1775.2" width="711.7" height="10" fill="#6f6f6f" rx="5"/><circle cx="2391" cy="1780.2" r="13.7" fill="#d6d6d6"/><text x="2025.7" y="1867.8" font-size="23" fill="#fff" textLength="69.5" lengthAdjust="spacingAndGlyphs">Radius</text><rect x="2582" y="1832" width="120" height="39.8" fill="#323232"/><text x="2590.3" y="1861.6" font-size="22" fill="#fff" textLength="51.5" lengthAdjust="spacingAndGlyphs">100%</text><text x="2705.7" y="1861" font-size="21" fill="#fff" textLength="17.5" lengthAdjust="spacingAndGlyphs">%</text><rect x="2014.3" y="1885.3" width="711.7" height="10" fill="#6f6f6f" rx="5"/><circle cx="2331.6" cy="1890.3" r="13.7" fill="#d6d6d6"/><text x="2025.7" y="1977.9" font-size="23" fill="#fff" textLength="87" lengthAdjust="spacingAndGlyphs">Center X</text><rect x="2582" y="1942" width="120" height="39.8" fill="#323232"/><text x="2590.3" y="1971.6" font-size="22" fill="#fff" textLength="29" lengthAdjust="spacingAndGlyphs">0%</text><text x="2705.7" y="1971" font-size="21" fill="#fff" textLength="17.5" lengthAdjust="spacingAndGlyphs">%</text><rect x="2014.3" y="1995" width="711.7" height="10" fill="#6f6f6f" rx="5"/><circle cx="2369.7" cy="2000" r="13.7" fill="#d6d6d6"/><text x="2025.7" y="2088" font-size="23" fill="#fff" textLength="86.5" lengthAdjust="spacingAndGlyphs">Center Y</text><rect x="2582" y="2052.2" width="120" height="39.8" fill="#323232"/><text x="2590.3" y="2081.8" font-size="22" fill="#fff" textLength="29" lengthAdjust="spacingAndGlyphs">0%</text><text x="2705.7" y="2081.2" font-size="21" fill="#fff" textLength="17.5" lengthAdjust="spacingAndGlyphs">%</text><rect x="2014.3" y="2105" width="711.7" height="10" fill="#6f6f6f" rx="5"/><circle cx="2369.7" cy="2110" r="13.7" fill="#d6d6d6"/></g><rect x="78" y="221" width="2722" height="45" fill="#404040"/><line x1="614" y1="221.5" x2="2794" y2="221.5" stroke="#6a6a6a" stroke-width="1" /><rect x="78" y="266" width="44" height="2033" fill="#404040"/><path d="M139,266 v-9 M150.5,266 v-9 M162,266 v-9 M173.5,266 v-9 M185,266 v-18 M197,266 v-9 M208.5,266 v-9 M220,266 v-9 M231.5,266 v-9 M243,266 v-27 M254.5,266 v-9 M266,266 v-9 M278,266 v-9 M289.5,266 v-9 M301,266 v-18 M312.5,266 v-9 M324,266 v-9 M335.5,266 v-9 M347,266 v-9 M359,266 v-27 M370.5,266 v-9 M382,266 v-9 M393.5,266 v-9 M405,266 v-9 M416.5,266 v-18 M428,266 v-9 M440,266 v-9 M451.5,266 v-9 M463,266 v-9 M474.5,266 v-27 M486,266 v-9 M497.5,266 v-9 M509.5,266 v-9 M521,266 v-9 M532.5,266 v-18 M544,266 v-9 M555.5,266 v-9 M567,266 v-9 M578.5,266 v-9 M590.5,266 v-27 M602,266 v-9 M613.5,266 v-9 M625,266 v-9 M636.5,266 v-9 M648,266 v-18 M659.5,266 v-9 M671.5,266 v-9 M683,266 v-9 M694.5,266 v-9 M706,266 v-27 M717.5,266 v-9 M729,266 v-9 M741,266 v-9 M752.5,266 v-9 M764,266 v-18 M775.5,266 v-9 M787,266 v-9 M798.5,266 v-9 M810,266 v-9 M822,266 v-27 M833.5,266 v-9 M845,266 v-9 M856.5,266 v-9 M868,266 v-9 M879.5,266 v-18 M891,266 v-9 M903,266 v-9 M914.5,266 v-9 M926,266 v-9 M937.5,266 v-27 M949,266 v-9 M960.5,266 v-9 M972.5,266 v-9 M984,266 v-9 M995.5,266 v-18 M1007,266 v-9 M1018.5,266 v-9 M1030,266 v-9 M1041.5,266 v-9 M1053.5,266 v-27 M1065,266 v-9 M1076.5,266 v-9 M1088,266 v-9 M1099.5,266 v-9 M1111,266 v-18 M1123,266 v-9 M1134.5,266 v-9 M1146,266 v-9 M1157.5,266 v-9 M1169,266 v-27 M1180.5,266 v-9 M1192,266 v-9 M1204,266 v-9 M1215.5,266 v-9 M1227,266 v-18 M1238.5,266 v-9 M1250,266 v-9 M1261.5,266 v-9 M1273,266 v-9 M1285,266 v-27 M1296.5,266 v-9 M1308,266 v-9 M1319.5,266 v-9 M1331,266 v-9 M1342.5,266 v-18 M1354,266 v-9 M1366,266 v-9 M1377.5,266 v-9 M1389,266 v-9 M1400.5,266 v-27 M1412,266 v-9 M1423.5,266 v-9 M1435.5,266 v-9 M1447,266 v-9 M1458.5,266 v-18 M1470,266 v-9 M1481.5,266 v-9 M1493,266 v-9 M1504.5,266 v-9 M1516.5,266 v-27 M1528,266 v-9 M1539.5,266 v-9 M1551,266 v-9 M1562.5,266 v-9 M1574,266 v-18 M1586,266 v-9 M1597.5,266 v-9 M1609,266 v-9 M1620.5,266 v-9 M1632,266 v-27 M1643.5,266 v-9 M1655,266 v-9 M1667,266 v-9 M1678.5,266 v-9 M1690,266 v-18 M1701.5,266 v-9 M1713,266 v-9 M1724.5,266 v-9 M1736,266 v-9 M1748,266 v-27 M1759.5,266 v-9 M1771,266 v-9 M1782.5,266 v-9 M1794,266 v-9 M1805.5,266 v-18 M1817,266 v-9 M1829,266 v-9 M1840.5,266 v-9 M1852,266 v-9 M1863.5,266 v-27 M1875,266 v-9 M1886.5,266 v-9 M1898.5,266 v-9 M1910,266 v-9 M1921.5,266 v-18 M1933,266 v-9 M1944.5,266 v-9 M1956,266 v-9 M1967.5,266 v-9 M1979.5,266 v-27 M1991,266 v-9 M2002.5,266 v-9 M2014,266 v-9 M2025.5,266 v-9 M2037,266 v-18 M2049,266 v-9 M2060.5,266 v-9 M2072,266 v-9 M2083.5,266 v-9 M2095,266 v-27 M2106.5,266 v-9 M2118,266 v-9 M2130,266 v-9 M2141.5,266 v-9 M2153,266 v-18 M2164.5,266 v-9 M2176,266 v-9 M2187.5,266 v-9 M2199,266 v-9 M2211,266 v-27 M2222.5,266 v-9 M2234,266 v-9 M2245.5,266 v-9 M2257,266 v-9 M2268.5,266 v-18 M2280,266 v-9 M2292,266 v-9 M2303.5,266 v-9 M2315,266 v-9 M2326.5,266 v-27 M2338,266 v-9 M2349.5,266 v-9 M2361.5,266 v-9 M2373,266 v-9 M2384.5,266 v-18 M2396,266 v-9 M2407.5,266 v-9 M2419,266 v-9 M2430.5,266 v-9 M2442.5,266 v-27 M2454,266 v-9 M2465.5,266 v-9 M2477,266 v-9 M2488.5,266 v-9 M2500,266 v-18 M2512,266 v-9 M2523.5,266 v-9 M2535,266 v-9 M2546.5,266 v-9 M2558,266 v-27 M2569.5,266 v-9 M2581,266 v-9 M2593,266 v-9 M2604.5,266 v-9 M2616,266 v-18 M2627.5,266 v-9 M2639,266 v-9 M2650.5,266 v-9 M2662,266 v-9 M2674,266 v-27 M2685.5,266 v-9 M2697,266 v-9 M2708.5,266 v-9 M2720,266 v-9 M2731.5,266 v-18 M2743,266 v-9 M2755,266 v-9 M2766.5,266 v-9 M2778,266 v-9 M2789.5,266 v-27" fill="none" stroke="#c6c6c6" stroke-width="1.6"/><text x="132.8" y="248.5" font-size="19.5" fill="#fff" textLength="31.2" lengthAdjust="spacingAndGlyphs">100</text><text x="248.55" y="248.5" font-size="19.5" fill="#fff" textLength="31.2" lengthAdjust="spacingAndGlyphs">125</text><text x="364.3" y="248.5" font-size="19.5" fill="#fff" textLength="31.2" lengthAdjust="spacingAndGlyphs">150</text><text x="480.05" y="248.5" font-size="19.5" fill="#fff" textLength="31.2" lengthAdjust="spacingAndGlyphs">175</text><text x="595.8" y="248.5" font-size="19.5" fill="#fff" textLength="31.2" lengthAdjust="spacingAndGlyphs">200</text><text x="711.55" y="248.5" font-size="19.5" fill="#fff" textLength="31.2" lengthAdjust="spacingAndGlyphs">225</text><text x="827.3" y="248.5" font-size="19.5" fill="#fff" textLength="31.2" lengthAdjust="spacingAndGlyphs">250</text><text x="943.05" y="248.5" font-size="19.5" fill="#fff" textLength="31.2" lengthAdjust="spacingAndGlyphs">275</text><text x="1058.8" y="248.5" font-size="19.5" fill="#fff" textLength="31.2" lengthAdjust="spacingAndGlyphs">300</text><text x="1174.55" y="248.5" font-size="19.5" fill="#fff" textLength="31.2" lengthAdjust="spacingAndGlyphs">325</text><text x="1290.3" y="248.5" font-size="19.5" fill="#fff" textLength="31.2" lengthAdjust="spacingAndGlyphs">350</text><text x="1406.05" y="248.5" font-size="19.5" fill="#fff" textLength="31.2" lengthAdjust="spacingAndGlyphs">375</text><text x="1521.8" y="248.5" font-size="19.5" fill="#fff" textLength="31.2" lengthAdjust="spacingAndGlyphs">400</text><text x="1637.55" y="248.5" font-size="19.5" fill="#fff" textLength="31.2" lengthAdjust="spacingAndGlyphs">425</text><text x="1753.3" y="248.5" font-size="19.5" fill="#fff" textLength="31.2" lengthAdjust="spacingAndGlyphs">450</text><text x="1869.05" y="248.5" font-size="19.5" fill="#fff" textLength="31.2" lengthAdjust="spacingAndGlyphs">475</text><text x="1984.8" y="248.5" font-size="19.5" fill="#fff" textLength="31.2" lengthAdjust="spacingAndGlyphs">500</text><text x="2100.55" y="248.5" font-size="19.5" fill="#fff" textLength="31.2" lengthAdjust="spacingAndGlyphs">525</text><text x="2216.3" y="248.5" font-size="19.5" fill="#fff" textLength="31.2" lengthAdjust="spacingAndGlyphs">550</text><text x="2332.05" y="248.5" font-size="19.5" fill="#fff" textLength="31.2" lengthAdjust="spacingAndGlyphs">575</text><text x="2447.8" y="248.5" font-size="19.5" fill="#fff" textLength="31.2" lengthAdjust="spacingAndGlyphs">600</text><text x="2563.55" y="248.5" font-size="19.5" fill="#fff" textLength="31.2" lengthAdjust="spacingAndGlyphs">625</text><text x="2679.3" y="248.5" font-size="19.5" fill="#fff" textLength="31.2" lengthAdjust="spacingAndGlyphs">650</text><text x="2795.05" y="248.5" font-size="19.5" fill="#fff" textLength="10.4" lengthAdjust="spacingAndGlyphs">6</text><path d="M122,278.5 h-9 M122,290 h-18 M122,301.5 h-9 M122,313 h-9 M122,324.5 h-9 M122,336 h-9 M122,348 h-27 M122,359.5 h-9 M122,371 h-9 M122,382.5 h-9 M122,394 h-9 M122,405.5 h-18 M122,417 h-9 M122,429 h-9 M122,440.5 h-9 M122,452 h-9 M122,463.5 h-27 M122,475 h-9 M122,486.5 h-9 M122,498.5 h-9 M122,510 h-9 M122,521.5 h-18 M122,533 h-9 M122,544.5 h-9 M122,556 h-9 M122,567.5 h-9 M122,579.5 h-27 M122,591 h-9 M122,602.5 h-9 M122,614 h-9 M122,625.5 h-9 M122,637 h-18 M122,649 h-9 M122,660.5 h-9 M122,672 h-9 M122,683.5 h-9 M122,695 h-27 M122,706.5 h-9 M122,718 h-9 M122,730 h-9 M122,741.5 h-9 M122,753 h-18 M122,764.5 h-9 M122,776 h-9 M122,787.5 h-9 M122,799 h-9 M122,811 h-27 M122,822.5 h-9 M122,834 h-9 M122,845.5 h-9 M122,857 h-9 M122,868.5 h-18 M122,880 h-9 M122,892 h-9 M122,903.5 h-9 M122,915 h-9 M122,926.5 h-27 M122,938 h-9 M122,949.5 h-9 M122,961.5 h-9 M122,973 h-9 M122,984.5 h-18 M122,996 h-9 M122,1007.5 h-9 M122,1019 h-9 M122,1030.5 h-9 M122,1042.5 h-27 M122,1054 h-9 M122,1065.5 h-9 M122,1077 h-9 M122,1088.5 h-9 M122,1100 h-18 M122,1112 h-9 M122,1123.5 h-9 M122,1135 h-9 M122,1146.5 h-9 M122,1158 h-27 M122,1169.5 h-9 M122,1181 h-9 M122,1193 h-9 M122,1204.5 h-9 M122,1216 h-18 M122,1227.5 h-9 M122,1239 h-9 M122,1250.5 h-9 M122,1262 h-9 M122,1274 h-27 M122,1285.5 h-9 M122,1297 h-9 M122,1308.5 h-9 M122,1320 h-9 M122,1331.5 h-18 M122,1343 h-9 M122,1355 h-9 M122,1366.5 h-9 M122,1378 h-9 M122,1389.5 h-27 M122,1401 h-9 M122,1412.5 h-9 M122,1424.5 h-9 M122,1436 h-9 M122,1447.5 h-18 M122,1459 h-9 M122,1470.5 h-9 M122,1482 h-9 M122,1493.5 h-9 M122,1505.5 h-27 M122,1517 h-9 M122,1528.5 h-9 M122,1540 h-9 M122,1551.5 h-9 M122,1563 h-18 M122,1575 h-9 M122,1586.5 h-9 M122,1598 h-9 M122,1609.5 h-9 M122,1621 h-27 M122,1632.5 h-9 M122,1644 h-9 M122,1656 h-9 M122,1667.5 h-9 M122,1679 h-18 M122,1690.5 h-9 M122,1702 h-9 M122,1713.5 h-9 M122,1725 h-9 M122,1737 h-27 M122,1748.5 h-9 M122,1760 h-9 M122,1771.5 h-9 M122,1783 h-9 M122,1794.5 h-18 M122,1806 h-9 M122,1818 h-9 M122,1829.5 h-9 M122,1841 h-9 M122,1852.5 h-27 M122,1864 h-9 M122,1875.5 h-9 M122,1887.5 h-9 M122,1899 h-9 M122,1910.5 h-18 M122,1922 h-9 M122,1933.5 h-9 M122,1945 h-9 M122,1956.5 h-9 M122,1968.5 h-27 M122,1980 h-9 M122,1991.5 h-9 M122,2003 h-9 M122,2014.5 h-9 M122,2026 h-18 M122,2038 h-9 M122,2049.5 h-9 M122,2061 h-9 M122,2072.5 h-9 M122,2084 h-27 M122,2095.5 h-9 M122,2107 h-9 M122,2119 h-9 M122,2130.5 h-9 M122,2142 h-18 M122,2153.5 h-9 M122,2165 h-9 M122,2176.5 h-9 M122,2188 h-9 M122,2200 h-27 M122,2211.5 h-9 M122,2223 h-9 M122,2234.5 h-9 M122,2246 h-9 M122,2257.5 h-18 M122,2269 h-9 M122,2281 h-9 M122,2292.5 h-9" fill="none" stroke="#c6c6c6" stroke-width="1.6"/><text transform="translate(104,342.8) rotate(-90)" font-size="21" fill="#fff" textLength="34.5" lengthAdjust="spacingAndGlyphs">475</text><text transform="translate(104,458.55) rotate(-90)" font-size="21" fill="#fff" textLength="34.5" lengthAdjust="spacingAndGlyphs">450</text><text transform="translate(104,574.3) rotate(-90)" font-size="21" fill="#fff" textLength="34.5" lengthAdjust="spacingAndGlyphs">425</text><text transform="translate(104,690.05) rotate(-90)" font-size="21" fill="#fff" textLength="34.5" lengthAdjust="spacingAndGlyphs">400</text><text transform="translate(104,805.8) rotate(-90)" font-size="21" fill="#fff" textLength="34.5" lengthAdjust="spacingAndGlyphs">375</text><text transform="translate(104,921.55) rotate(-90)" font-size="21" fill="#fff" textLength="34.5" lengthAdjust="spacingAndGlyphs">350</text><text transform="translate(104,1037.3) rotate(-90)" font-size="21" fill="#fff" textLength="34.5" lengthAdjust="spacingAndGlyphs">325</text><text transform="translate(104,1153.05) rotate(-90)" font-size="21" fill="#fff" textLength="34.5" lengthAdjust="spacingAndGlyphs">300</text><text transform="translate(104,1268.8) rotate(-90)" font-size="21" fill="#fff" textLength="34.5" lengthAdjust="spacingAndGlyphs">275</text><text transform="translate(104,1384.55) rotate(-90)" font-size="21" fill="#fff" textLength="34.5" lengthAdjust="spacingAndGlyphs">250</text><text transform="translate(104,1500.3) rotate(-90)" font-size="21" fill="#fff" textLength="34.5" lengthAdjust="spacingAndGlyphs">225</text><text transform="translate(104,1616.05) rotate(-90)" font-size="21" fill="#fff" textLength="34.5" lengthAdjust="spacingAndGlyphs">200</text><text transform="translate(104,1731.8) rotate(-90)" font-size="21" fill="#fff" textLength="34.5" lengthAdjust="spacingAndGlyphs">175</text><text transform="translate(104,1847.55) rotate(-90)" font-size="21" fill="#fff" textLength="34.5" lengthAdjust="spacingAndGlyphs">150</text><text transform="translate(104,1963.3) rotate(-90)" font-size="21" fill="#fff" textLength="34.5" lengthAdjust="spacingAndGlyphs">125</text><text transform="translate(104,2079.05) rotate(-90)" font-size="21" fill="#fff" textLength="34.5" lengthAdjust="spacingAndGlyphs">100</text><text transform="translate(104,2194.8) rotate(-90)" font-size="21" fill="#fff" textLength="23" lengthAdjust="spacingAndGlyphs">75</text><text transform="translate(104.5,2297.3) rotate(-90)" font-size="21.5" fill="#fff" textLength="11.3" lengthAdjust="spacingAndGlyphs">0</text><path d="M82,250.4 H120 M106.4,224 V262" fill="none" stroke="#d4d4d4" stroke-width="3" stroke-dasharray="5.5 4.5"/><rect x="2800" y="221" width="32" height="2076" fill="#323232"/><rect x="2800" y="221" width="32" height="2110" fill="#323232"/><path d="M2804,256 L2816,243.5 L2828,256" fill="none" stroke="#c8c8c8" stroke-width="3.4"/><path d="M2804.5,2275 L2816,2287 L2827.5,2275" fill="none" stroke="#c8c8c8" stroke-width="3.4"/><rect x="2802.6" y="1291" width="27" height="198" fill="#828282" rx="7.5"/><rect x="78" y="2298.3" width="2754" height="32.7" fill="#323232"/><rect x="78" y="2298.3" width="44" height="32.7" fill="#404040"/><rect x="122" y="2298.3" width="140" height="31.4" fill="url(#dd2)" rx="4"/><text x="139.3" y="2322.6" font-size="20.5" fill="#fff" textLength="62" lengthAdjust="spacingAndGlyphs">152.9%</text><path d="M230.5,2309.8 l10.5,10.5 l10.5,-10.5" fill="none" stroke="#e4e4e4" stroke-width="3.4"/><rect x="265.7" y="2298.3" width="119.3" height="31.4" fill="url(#dd2)" rx="4"/><text x="282.6" y="2322.6" font-size="20.5" fill="#fff" textLength="32.5" lengthAdjust="spacingAndGlyphs">0.0°</text><path d="M353.5,2309.8 l10.5,10.5 l10.5,-10.5" fill="none" stroke="#e4e4e4" stroke-width="3.4"/><path d="M396,2303 v22" fill="none" stroke="#fff" stroke-width="3.5"/><path d="M413,2303 L399,2314 L413,2325 Z" fill="#fff"/><path d="M444,2303 L430,2314 L444,2325 Z" fill="#fff"/><rect x="453" y="2298.3" width="113" height="31.4" fill="url(#dd2)" rx="4"/><text x="470" y="2322.6" font-size="20.5" fill="#fff" textLength="9" lengthAdjust="spacingAndGlyphs">1</text><path d="M534.5,2309.8 l10.5,10.5 l10.5,-10.5" fill="none" stroke="#e4e4e4" stroke-width="3.4"/><path d="M574,2303 L588,2314 L574,2325 Z" fill="#fff"/><path d="M604,2303 L618,2314 L604,2325 Z" fill="#fff"/><path d="M621,2303 v22" fill="none" stroke="#fff" stroke-width="3.5"/><rect x="634" y="2298.3" width="359" height="31.4" fill="url(#dd2)" rx="4"/><text x="646" y="2322.6" font-size="20.5" fill="#fff" textLength="132" lengthAdjust="spacingAndGlyphs">{Symbol Set}</text><path d="M961.5,2309.8 l10.5,10.5 l10.5,-10.5" fill="none" stroke="#e4e4e4" stroke-width="3.4"/><rect x="1000" y="2299" width="28" height="30" fill="#de4468" rx="4"/><path d="M1006,2305 H1022 M1014,2310 V2323 M1008,2317 L1014,2323.5 L1020,2317" fill="none" stroke="#2a1018" stroke-width="2.6"/><path d="M1056,2303 L1044,2314 L1056,2325" fill="none" stroke="#e0e0e0" stroke-width="3.2"/><path d="M2774.5,2303 L2786.5,2314 L2774.5,2325" fill="none" stroke="#d8d8d8" stroke-width="3.4"/><rect x="1694" y="2300" width="169" height="27" fill="#848484" rx="9"/><rect x="2800" y="2298.3" width="32" height="32.5" fill="#404040"/><path d="M2814,2299.3 V2308 M2814,2317.4 V2327 M2800,2313 H2809.6 M2818,2313 H2828" fill="none" stroke="#f4f4f4" stroke-width="2.2"/><rect x="2802.2" y="2301.5" width="23.8" height="23.3" fill="none" stroke="#f4f4f4" stroke-width="2"/><rect x="2" y="174" width="75" height="1658" fill="#404040"/><rect x="2" y="1832" width="75" height="500" fill="#262626"/><g transform="translate(37,252)"><path d="M-8.3,-17.6 L13.3,4 L3.7,6.3 L9.7,17 L4.2,18.8 L-1,8.7 L-7.8,12.3 Z" fill="#e8e8e8"/></g><g transform="translate(37,319)"><path d="M-14,12 Q-12,-8 4,-10 L16,-16" fill="none" stroke="#e6e6e6" stroke-width="2.5"/><rect x="-9" y="-13" width="9" height="9" fill="#e6e6e6"/><rect x="12" y="-19" width="6" height="6" fill="#e6e6e6"/><rect x="-17" y="10" width="6" height="6" fill="#e6e6e6"/><path d="M-4,-6 L16,4 L8,6 L4,14 Z" fill="#e6e6e6"/></g><g transform="translate(37,384)"><path d="M-17,8 A25,25 0 0 1 8,-17" fill="none" stroke="#e6e6e6" stroke-width="3"/><path d="M-17,8 A25,25 0 0 1 8,-17 V8 Z" fill="#6a6a6a"/><path d="M-2,-6 L14,8 L7,9 L10,17 L6,18 L3,11 L-2,15 Z" fill="#e6e6e6"/></g><g transform="translate(37,384)"><path d="M13.2,23.6 L25,11.8 V23.6 Z" fill="#b4b4b4"/></g><g transform="translate(41,454) rotate(-45) scale(1.15)"><path d="M-10.5,-11 V1 A10.5,10.5 0 0 0 10.5,1 V-11 H3.5 V1 A3.5,3.5 0 0 1 -3.5,1 V-11 Z" fill="#e0e0e0"/><rect x="-10.5" y="-11" width="7" height="5.5" fill="#6e6e6e" stroke="#d0d0d0" stroke-width="1"/><rect x="3.5" y="-11" width="7" height="5.5" fill="#6e6e6e" stroke="#d0d0d0" stroke-width="1"/></g><g transform="translate(37,450)"><path d="M-19,-9 l4,-6 l-0.5,5 l4,-1 l-5,7 l0.5,-5 Z M-9,-19 l4,-6 l-0.5,5 l4,-1 l-5,7 l0.5,-5 Z" fill="#e6e6e6"/></g><g transform="translate(37,450)"><path d="M13.2,23.6 L25,11.8 V23.6 Z" fill="#b4b4b4"/></g><rect x="10" y="488" width="56" height="56" fill="#2c2c2c" rx="5"/><g transform="translate(38,516)"><rect x="-18" y="-15" width="36" height="30" fill="none" stroke="#e6e6e6" stroke-width="3.5" stroke-dasharray="8.5 4"/></g><g transform="translate(37,516)"><path d="M13.2,23.6 L25,11.8 V23.6 Z" fill="#b4b4b4"/></g><line x1="14" y1="559" x2="62" y2="559" stroke="#161616" stroke-width="2.2" /><line x1="14" y1="560.8" x2="62" y2="560.8" stroke="#5a5a5a" stroke-width="1.2" /><g transform="translate(37,604)"><path d="M-18,-6 L2,20 M-9,-12 Q-12,10 7,14" fill="none" stroke="#d0d0d0" stroke-width="1.6"/><circle cx="-18" cy="-6" r="1.5" fill="#d0d0d0"/><circle cx="2" cy="20" r="1.5" fill="#d0d0d0"/><path d="M-8,12 L-3,-3 L5,-10 L14,-1 L7,7 Z" fill="#e4e4e4"/><path d="M-8,12 L2,2" fill="none" stroke="#333" stroke-width="1.5"/><circle cx="3" cy="1" r="2.2" fill="#333"/><rect x="8.5" y="-20" width="11" height="9" fill="#d4d4d4" transform="rotate(45 14 -15.5)"/></g><g transform="translate(37,604)"><path d="M13.2,23.6 L25,11.8 V23.6 Z" fill="#b4b4b4"/></g><g transform="translate(37,670)"><ellipse cx="0" cy="0" rx="18" ry="15" fill="#6c6c6c" stroke="#e6e6e6" stroke-width="2.5"/></g><g transform="translate(37,670)"><path d="M13.2,23.6 L25,11.8 V23.6 Z" fill="#b4b4b4"/></g><g transform="translate(37,731)"><path d="M-16,-17 H16 V-7 H13 Q12,-12 7,-12 H4 V11 Q4,14 9,14 V17 H-9 V14 Q-4,14 -4,11 V-12 H-7 Q-12,-12 -13,-7 H-16 Z" fill="#e6e6e6"/></g><g transform="translate(37,731)"><path d="M13.2,23.6 L25,11.8 V23.6 Z" fill="#b4b4b4"/></g><g transform="translate(37,802)"><path d="M-10.8,-0.7 L8.6,-13.2 L19.2,3.7 L4.5,15.5 Q2.3,17.2 0.6,15 Z" fill="#e4e4e4" stroke-linejoin="round"/><path d="M-6.4,-2 L7.3,-10.7 L14.2,1.8 Z" fill="#5c5c5c"/><line x1="-10.8" y1="-0.7" x2="11.7" y2="-16.3" stroke="#e4e4e4" stroke-width="2.6" stroke-linecap="round"/><path d="M-12.5,4.5 Q-8,9 -9,12.5 A4.3,4.3 0 0 1 -17,12 Q-17.5,8 -12.5,4.5 Z" fill="#d0d0d0"/></g><g transform="translate(37,802)"><path d="M13.2,23.6 L25,11.8 V23.6 Z" fill="#b4b4b4"/></g><g transform="translate(37,867)"><path d="M-18,16 Q-12,-8 4,-10 Q14,-12 18,-18 Q18,2 4,6 Q-6,8 -18,16 Z" fill="#6c6c6c" stroke="#e6e6e6" stroke-width="2"/><line x1="-10" y1="-12" x2="12" y2="10" stroke="#e6e6e6" stroke-width="1.8" /><rect x="-13" y="-15" width="6" height="6" fill="#404040" stroke="#e6e6e6" stroke-width="1.5"/><rect x="-2" y="-4" width="6" height="6" fill="#404040" stroke="#e6e6e6" stroke-width="1.5"/><rect x="8" y="7" width="6" height="6" fill="#404040" stroke="#e6e6e6" stroke-width="1.5"/></g><g transform="translate(37,867)"><path d="M13.2,23.6 L25,11.8 V23.6 Z" fill="#b4b4b4"/></g><line x1="14" y1="912" x2="62" y2="912" stroke="#161616" stroke-width="2.2" /><line x1="14" y1="913.8" x2="62" y2="913.8" stroke="#5a5a5a" stroke-width="1.2" /><g transform="translate(37,954)"><path d="M-18,-14 Q-4,-10 0,-6 T18,-6" fill="none" stroke="#a8a8a8" stroke-width="1"/><path d="M-18,-9 Q-4,-6 0,-2 T18,-1" fill="none" stroke="#a8a8a8" stroke-width="1"/><path d="M-18,-4 Q-4,-2 0,2 T18,4" fill="none" stroke="#a8a8a8" stroke-width="1"/><path d="M-18,1 Q-4,2 0,6 T18,9" fill="none" stroke="#a8a8a8" stroke-width="1"/><path d="M-18,6 Q-4,6 0,10 T18,14" fill="none" stroke="#a8a8a8" stroke-width="1"/><path d="M-18,11 Q-4,10 0,14 T18,19" fill="none" stroke="#a8a8a8" stroke-width="1"/><path d="M-18,16 Q-4,14 0,18 T18,24" fill="none" stroke="#a8a8a8" stroke-width="1"/><path d="M-16,-16 Q-8,0 -14,16" fill="none" stroke="#a8a8a8" stroke-width="1"/><path d="M-11,-16 Q-5,0 -9,16" fill="none" stroke="#a8a8a8" stroke-width="1"/><path d="M-6,-16 Q-2,0 -4,16" fill="none" stroke="#a8a8a8" stroke-width="1"/><path d="M-1,-16 Q1,0 1,16" fill="none" stroke="#a8a8a8" stroke-width="1"/><path d="M4,-16 Q4,0 6,16" fill="none" stroke="#a8a8a8" stroke-width="1"/><path d="M9,-16 Q7,0 11,16" fill="none" stroke="#a8a8a8" stroke-width="1"/><path d="M14,-16 Q10,0 16,16" fill="none" stroke="#a8a8a8" stroke-width="1"/><path d="M7,-4 L15,-16.5 L18.5,-14.5 L10.5,-1.5 Z" fill="#fff"/><path d="M1,6 Q0.5,0 5,-0.5 Q9,0.5 7.5,4 Q5,6.5 1,6 Z" fill="#fff"/></g><g transform="translate(37,954)"><path d="M13.2,23.6 L25,11.8 V23.6 Z" fill="#b4b4b4"/></g><g transform="translate(37,1023)"><path d="M-18,-14 Q0,-12 18,-16 V12 Q0,10 -18,15 Z" fill="#7a7a7a" stroke="#e6e6e6" stroke-width="2"/><circle cx="9" cy="-8" r="6" fill="#9a9a9a"/><circle cx="-9" cy="7" r="6" fill="#9a9a9a"/><line x1="-9" y1="7" x2="9" y2="-8" stroke="#fff" stroke-width="1.5" stroke-dasharray="3 2"/></g><g transform="translate(37,1023)"><path d="M13.2,23.6 L25,11.8 V23.6 Z" fill="#b4b4b4"/></g><g transform="translate(37,1088)"><path d="M-14,-16 Q0,-20 14,-16 Q20,0 14,16 Q0,20 -14,16 Q-20,0 -14,-16 Z" fill="#787878" stroke="#d0d0d0" stroke-width="2"/></g><g transform="translate(37,1088)"><path d="M13.2,23.6 L25,11.8 V23.6 Z" fill="#b4b4b4"/></g><g transform="translate(37,1152)"><path d="M-19,-5 Q0,-15 19,-5 L11,10 Q0,5 -11,10 Z M-16,1 Q0,-8 16,1 M-13.5,6 Q0,-2 13.5,6 M-10,-9 L-6,7.5 M0,-10 V6 M10,-9 L6,7.5" fill="none" stroke="#d8d8d8" stroke-width="1.8"/></g><g transform="translate(37,1152)"><path d="M13.2,23.6 L25,11.8 V23.6 Z" fill="#b4b4b4"/></g><line x1="14" y1="1196" x2="62" y2="1196" stroke="#161616" stroke-width="2.2" /><line x1="14" y1="1197.8" x2="62" y2="1197.8" stroke="#5a5a5a" stroke-width="1.2" /><g transform="translate(37,1241)"><rect x="-19" y="-19" width="38" height="38" fill="url(#ht)"/><rect x="-19" y="-19" width="38" height="38" fill="url(#htg)"/></g><g transform="translate(37,1241)"><path d="M13.2,23.6 L25,11.8 V23.6 Z" fill="#b4b4b4"/></g><g transform="translate(37,1307)"><rect x="-18" y="-16" width="36" height="32" fill="#6a6a6a" stroke="#e6e6e6" stroke-width="2.5"/><path d="M-18,-4 Q0,-12 18,-2 M-18,8 Q0,0 18,8 M-8,-16 Q0,0 -6,16 M8,-16 Q2,0 10,16" fill="none" stroke="#e6e6e6" stroke-width="1.8"/></g><g transform="translate(37,1307)"><path d="M13.2,23.6 L25,11.8 V23.6 Z" fill="#b4b4b4"/></g><g transform="translate(37,1374)"><rect x="-18" y="-18" width="11.5" height="4.6" fill="#e4e4e4"/><rect x="-5" y="-18" width="11.5" height="4.6" fill="#e4e4e4"/><rect x="8" y="-18" width="10" height="4.6" fill="#e4e4e4"/><rect x="-18" y="-11.8" width="5" height="4.6" fill="#e4e4e4"/><rect x="-11.5" y="-11.8" width="11.5" height="4.6" fill="#e4e4e4"/><rect x="1.5" y="-11.8" width="11.5" height="4.6" fill="#e4e4e4"/><rect x="14.5" y="-11.8" width="3.5" height="4.6" fill="#e4e4e4"/><rect x="-18" y="-5.6" width="11.5" height="4.6" fill="#e4e4e4"/><rect x="-5" y="-5.6" width="11.5" height="4.6" fill="#e4e4e4"/><rect x="8" y="-5.6" width="10" height="4.6" fill="#e4e4e4"/><rect x="-18" y="0.6" width="5" height="4.6" fill="#e4e4e4"/><rect x="-11.5" y="0.6" width="11.5" height="4.6" fill="#e4e4e4"/><rect x="1.5" y="0.6" width="11.5" height="4.6" fill="#e4e4e4"/><rect x="14.5" y="0.6" width="3.5" height="4.6" fill="#e4e4e4"/><rect x="-18" y="6.8" width="11.5" height="4.6" fill="#e4e4e4"/><rect x="-5" y="6.8" width="11.5" height="4.6" fill="#e4e4e4"/><rect x="8" y="6.8" width="10" height="4.6" fill="#e4e4e4"/><rect x="-18" y="13" width="5" height="4.6" fill="#e4e4e4"/><rect x="-11.5" y="13" width="11.5" height="4.6" fill="#e4e4e4"/><rect x="1.5" y="13" width="11.5" height="4.6" fill="#e4e4e4"/><rect x="14.5" y="13" width="3.5" height="4.6" fill="#e4e4e4"/></g><g transform="translate(37,1374)"><path d="M13.2,23.6 L25,11.8 V23.6 Z" fill="#b4b4b4"/></g><g transform="translate(37,1440)"><rect x="-19" y="-17" width="38" height="34" fill="#6a6a6a" rx="8"/><rect x="-19" y="-17" width="38" height="34" fill="none" rx="8" stroke="#c8c8c8" stroke-width="1"/><rect x="-17" y="-15" width="34" height="30" fill="none" rx="7" stroke="#c8c8c8" stroke-width="1"/><rect x="-15" y="-13" width="30" height="26" fill="none" rx="6" stroke="#c8c8c8" stroke-width="1"/><rect x="-13" y="-11" width="26" height="22" fill="none" rx="5" stroke="#c8c8c8" stroke-width="1"/><rect x="-11" y="-9" width="22" height="18" fill="none" rx="4" stroke="#c8c8c8" stroke-width="1"/><rect x="-7" y="-6" width="14" height="12" fill="#c0c0c0" rx="1" stroke="#eee" stroke-width="2"/></g><g transform="translate(37,1506)"><rect x="-17" y="-18" width="22" height="22" fill="#666" stroke="#d8d8d8" stroke-width="2"/><rect x="-9" y="-12" width="18" height="18" fill="#666" rx="4" stroke="#d8d8d8" stroke-width="2"/><circle cx="7" cy="7" r="11" fill="#666" stroke="#d8d8d8" stroke-width="2"/></g><g transform="translate(37,1506)"><path d="M13.2,23.6 L25,11.8 V23.6 Z" fill="#b4b4b4"/></g><g transform="translate(37,1571)"><circle cx="-5" cy="-9" r="7.5" fill="#e4e4e4"/><path d="M-9,-4 H-1 L1,4 H-11 Z" fill="#e4e4e4"/><rect x="-16" y="4" width="22" height="9" fill="#e4e4e4" rx="2"/><path d="M-14,15 q2,4 4.5,0 q2,4 4.5,0 q2,4 4.5,0 q2,4 4.5,0 Z" fill="#e4e4e4"/><circle cx="7" cy="-14" r="2.2" fill="none" stroke="#d0d0d0" stroke-width="1.2"/><circle cx="12" cy="-17" r="2.2" fill="none" stroke="#d0d0d0" stroke-width="1.2"/><circle cx="16" cy="-12" r="2.2" fill="none" stroke="#d0d0d0" stroke-width="1.2"/><circle cx="11" cy="-10" r="2.2" fill="none" stroke="#d0d0d0" stroke-width="1.2"/><circle cx="6" cy="-8" r="2.2" fill="none" stroke="#d0d0d0" stroke-width="1.2"/><circle cx="15" cy="-6" r="2.2" fill="none" stroke="#d0d0d0" stroke-width="1.2"/><circle cx="10" cy="-4" r="2.2" fill="none" stroke="#d0d0d0" stroke-width="1.2"/></g><g transform="translate(37,1571)"><path d="M13.2,23.6 L25,11.8 V23.6 Z" fill="#b4b4b4"/></g><line x1="14" y1="1616" x2="62" y2="1616" stroke="#161616" stroke-width="2.2" /><line x1="14" y1="1617.8" x2="62" y2="1617.8" stroke="#5a5a5a" stroke-width="1.2" /><g transform="translate(37,1659)"><circle cx="-1" cy="2" r="14" fill="none" stroke="#808080" stroke-width="8" stroke-dasharray="6.5 1"/><path d="M-8,9 L6,-6 L10,-2 L-4,12 L-9,13 Z" fill="#fff"/><path d="M4,-10 L14,0 M8,-8 L14,-17 Q19,-20 20,-14 L12,-4" fill="#fff" stroke="#fff" stroke-width="2.5"/></g><g transform="translate(37,1659)"><path d="M13.2,23.6 L25,11.8 V23.6 Z" fill="#b4b4b4"/></g><g transform="translate(37,1726)"><path d="M-10,-12 H10 L18,-4 V14 H-10 Z" fill="#666" stroke="#d8d8d8" stroke-width="2"/><path d="M10,-12 V-4 H18" fill="none" stroke="#d8d8d8" stroke-width="2"/><path d="M-19,-14 H-9 M-12,-21 V-11" fill="none" stroke="#d8d8d8" stroke-width="1.5"/></g><g transform="translate(37,1726)"><path d="M13.2,23.6 L25,11.8 V23.6 Z" fill="#b4b4b4"/></g><g transform="translate(37,1791)"><rect x="-9" y="-6" width="18" height="18" fill="#808080"/><path d="M-13,-10 V16 M-17,12 H12 M-17,-6 H12 M9,-10 V16" fill="none" stroke="#b8b8b8" stroke-width="1.2"/><path d="M-12,-10 A19,19 0 1 1 2,20" fill="none" stroke="#e6e6e6" stroke-width="2.5"/><path d="M-19,-6 L-6,-14 L-9,-2 Z" fill="#e6e6e6"/></g><g transform="translate(37,1791)"><path d="M13.2,23.6 L25,11.8 V23.6 Z" fill="#b4b4b4"/></g><circle cx="24" cy="196" r="14" fill="#8c8c8c"/><path d="M17.5,189.5 l13,13 m0,-13 l-13,13" fill="none" stroke="#1e1e1e" stroke-width="2.6"/><rect x="2" y="2331" width="2830" height="37" fill="#404040"/><rect x="2" y="2330.5" width="2830" height="2.2" fill="#242424"/><circle cx="24" cy="2338" r="2.6" fill="#c8c8c8"/><circle cx="32" cy="2338" r="2.6" fill="#c8c8c8"/><circle cx="24" cy="2346" r="2.6" fill="#c8c8c8"/><circle cx="32" cy="2346" r="2.6" fill="#c8c8c8"/><circle cx="24" cy="2354" r="2.6" fill="#c8c8c8"/><circle cx="32" cy="2354" r="2.6" fill="#c8c8c8"/><circle cx="24" cy="2362" r="2.6" fill="#c8c8c8"/><circle cx="32" cy="2362" r="2.6" fill="#c8c8c8"/><circle cx="57.7" cy="2340.9" r="4.1" fill="none" stroke="#e4e4e4" stroke-width="3.6"/><line x1="65" y1="2336.5" x2="84" y2="2336.5" stroke="#e4e4e4" stroke-width="3.4" /><line x1="65" y1="2345.2" x2="84" y2="2345.2" stroke="#e4e4e4" stroke-width="3.4" /><circle cx="57.7" cy="2359.1" r="4.1" fill="none" stroke="#e4e4e4" stroke-width="3.6"/><line x1="65" y1="2354.7" x2="84" y2="2354.7" stroke="#e4e4e4" stroke-width="3.4" /><line x1="65" y1="2363.4" x2="84" y2="2363.4" stroke="#e4e4e4" stroke-width="3.4" /><rect x="90" y="2334" width="36" height="32" fill="#fff"/><line x1="91" y1="2364" x2="125" y2="2334" stroke="#e93323" stroke-width="3.5" /><rect x="126" y="2334" width="36" height="32" fill="#fff"/><circle cx="144" cy="2350" r="12.5" fill="none" stroke="#111" stroke-width="2"/><circle cx="144" cy="2350" r="6.8" fill="none" stroke="#111" stroke-width="2"/><path d="M128,2350 H160 M144,2334 V2366" fill="none" stroke="#111" stroke-width="1.8"/><rect x="162" y="2334" width="36.5" height="32" fill="#000000"/><rect x="198" y="2334" width="36.5" height="32" fill="#ffffff"/><rect x="234" y="2334" width="36.5" height="32" fill="#6cf9f9"/><rect x="270" y="2334" width="36.5" height="32" fill="#e838f0"/><rect x="306" y="2334" width="36.5" height="32" fill="#fdf84c"/><rect x="342" y="2334" width="36.5" height="32" fill="#e93323"/><rect x="378" y="2334" width="36.5" height="32" fill="#6ff24a"/><rect x="414" y="2334" width="36.5" height="32" fill="#0a14e6"/><rect x="450" y="2334" width="36.5" height="32" fill="#ffffff"/><rect x="486" y="2334" width="36.5" height="32" fill="#e0e0e0"/><rect x="522" y="2334" width="36.5" height="32" fill="#c8c8c8"/><rect x="558" y="2334" width="36.5" height="32" fill="#b0b0b0"/><rect x="594" y="2334" width="36.5" height="32" fill="#989898"/><rect x="630" y="2334" width="36.5" height="32" fill="#808080"/><rect x="666" y="2334" width="36.5" height="32" fill="#686868"/><rect x="702" y="2334" width="36.5" height="32" fill="#4c4c4c"/><rect x="738" y="2334" width="36.5" height="32" fill="#363636"/><rect x="774" y="2334" width="36.5" height="32" fill="#1a1a1a"/><rect x="810" y="2334" width="36.5" height="32" fill="#000000"/><rect x="846" y="2334" width="36.5" height="32" fill="#050a78"/><rect x="882" y="2334" width="36.5" height="32" fill="#357a20"/><rect x="918" y="2334" width="36.5" height="32" fill="#3c8585"/><rect x="954" y="2334" width="36.5" height="32" fill="#3a82f5"/><rect x="990" y="2334" width="36.5" height="32" fill="#6ff48c"/><rect x="1026" y="2334" width="36.5" height="32" fill="#75140f"/><rect x="1062" y="2334" width="36.5" height="32" fill="#74187e"/><rect x="1098" y="2334" width="36.5" height="32" fill="#7422f0"/><rect x="1134" y="2334" width="36.5" height="32" fill="#808022"/><rect x="1170" y="2334" width="36.5" height="32" fill="#8283f5"/><rect x="1206" y="2334" width="36.5" height="32" fill="#a0f74a"/><rect x="1242" y="2334" width="36.5" height="32" fill="#a0f98c"/><rect x="1278" y="2334" width="36.5" height="32" fill="#a0fbfb"/><rect x="1314" y="2334" width="36.5" height="32" fill="#e9337f"/><rect x="1350" y="2334" width="36.5" height="32" fill="#f08532"/><rect x="1386" y="2334" width="36.5" height="32" fill="#ee8783"/><rect x="1422" y="2334" width="36.5" height="32" fill="#ee88f5"/><rect x="1458" y="2334" width="36.5" height="32" fill="#fefe8c"/><rect x="1494" y="2334" width="36.5" height="32" fill="#623634"/><rect x="1530" y="2334" width="36.5" height="32" fill="#8c3c3a"/><rect x="1566" y="2334" width="36.5" height="32" fill="#946a68"/><rect x="1602" y="2334" width="36.5" height="32" fill="#bc403a"/><rect x="1638" y="2334" width="36.5" height="32" fill="#c06c68"/><rect x="1674" y="2334" width="36.5" height="32" fill="#c69c9a"/><rect x="1710" y="2334" width="36.5" height="32" fill="#94683c"/><rect x="1746" y="2334" width="36.5" height="32" fill="#c06e3e"/><rect x="1782" y="2334" width="36.5" height="32" fill="#c49c4a"/><rect x="1818" y="2334" width="36.5" height="32" fill="#c89e70"/><rect x="1854" y="2334" width="36.5" height="32" fill="#66683a"/><rect x="1890" y="2334" width="36.5" height="32" fill="#9a9c44"/><rect x="1926" y="2334" width="36.5" height="32" fill="#9c9c6e"/><rect x="1962" y="2334" width="36.5" height="32" fill="#cece54"/><rect x="1998" y="2334" width="36.5" height="32" fill="#d0ce7e"/><rect x="2034" y="2334" width="36.5" height="32" fill="#d0cea6"/><rect x="2070" y="2334" width="36.5" height="32" fill="#74963e"/><rect x="2106" y="2334" width="36.5" height="32" fill="#80ca50"/><rect x="2142" y="2334" width="36.5" height="32" fill="#a0cc54"/><rect x="2178" y="2334" width="36.5" height="32" fill="#a4cc78"/><rect x="2214" y="2334" width="36.5" height="32" fill="#3c6434"/><rect x="2250" y="2334" width="36.5" height="32" fill="#509444"/><rect x="2286" y="2334" width="36.5" height="32" fill="#66c850"/><rect x="2322" y="2334" width="36.5" height="32" fill="#74986c"/><rect x="2358" y="2334" width="36.5" height="32" fill="#80cc78"/><rect x="2394" y="2334" width="36.5" height="32" fill="#a0cc9c"/><rect x="2430" y="2334" width="36.5" height="32" fill="#50946c"/><rect x="2466" y="2334" width="36.5" height="32" fill="#6aca78"/><rect x="2502" y="2334" width="36.5" height="32" fill="#6acaa0"/><rect x="2538" y="2334" width="36.5" height="32" fill="#80cca0"/><rect x="2574" y="2334" width="36.5" height="32" fill="#3e6468"/><rect x="2610" y="2334" width="36.5" height="32" fill="#529a9c"/><rect x="2646" y="2334" width="36.5" height="32" fill="#66cad0"/><rect x="2682" y="2334" width="36.5" height="32" fill="#74989c"/><rect x="2718" y="2334" width="36.5" height="32" fill="#80cad0"/><rect x="2754" y="2334" width="26.5" height="32" fill="#a4cccf"/><rect x="2780" y="2333" width="51" height="35" fill="#404040"/><path d="M2791.3,2335.2 H2812.8 a5,5 0 0 1 5,5 V2353.5 a5,5 0 0 1 -5,5 H2807.5 L2801.9,2364.2 L2796.3,2358.5 H2791.3 a5,5 0 0 1 -5,-5 V2340.2 a5,5 0 0 1 5,-5 Z" fill="none" stroke="#ececec" stroke-width="1.8"/><line x1="2791.9" y1="2342.2" x2="2812.2" y2="2342.2" stroke="#ececec" stroke-width="1.8" /><line x1="2791.9" y1="2346.8" x2="2812.2" y2="2346.8" stroke="#ececec" stroke-width="1.8" /><line x1="2791.9" y1="2351.5" x2="2812.2" y2="2351.5" stroke="#ececec" stroke-width="1.8" /></g></svg></body></html>
